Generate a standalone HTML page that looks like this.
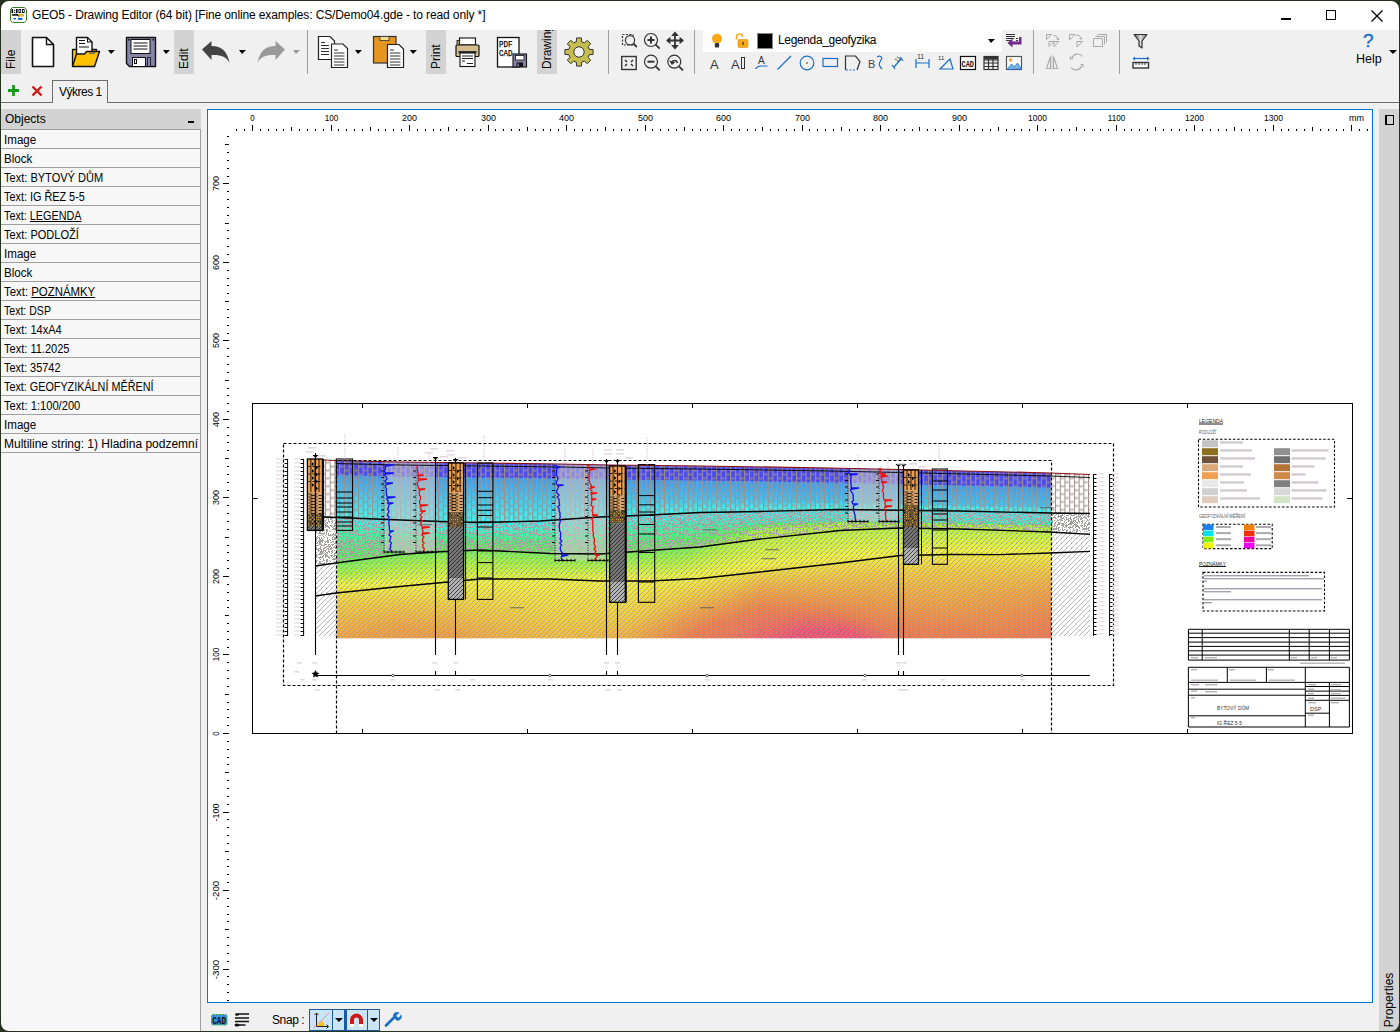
<!DOCTYPE html>
<html><head><meta charset="utf-8">
<style>
*{margin:0;padding:0;box-sizing:border-box}
html,body{width:1400px;height:1032px;overflow:hidden;background:#25321d;font-family:"Liberation Sans",sans-serif;}
.a{position:absolute}
#win{position:absolute;left:0;top:0;width:1400px;height:1032px;background:#f0f0f0;overflow:hidden}
.t{position:absolute;white-space:nowrap;color:#000;font-size:12px}
.vtab{position:absolute;top:30px;width:20px;height:44px;background:#d3d3d3;overflow:hidden}
.vtab span{position:absolute;left:3px;top:39px;transform-origin:0 0;transform:rotate(-90deg);font-size:12px;line-height:14px;white-space:nowrap;color:#000}
.sep{position:absolute;top:30px;width:1px;height:44px;background:#a0a0a0}
.row{position:absolute;left:-1px;width:201px;height:20px;background:#f7f7f7;border-top:1px solid #a0a0a0;border-right:1px solid #a0a0a0;font-size:12px;padding-left:4px;padding-top:2.5px;line-height:14px;white-space:nowrap;overflow:hidden;color:#000}
.row u{text-decoration:underline;text-underline-offset:1px}
svg{position:absolute;overflow:visible}
</style></head><body>
<div id="win">
<div class="a" id="ui" style="left:1px;top:0;width:1400px;height:1032px">
 <div class="a" style="left:-1px;top:0;width:1400px;height:30px;background:#fff"></div>
 <div class="t" style="left:31px;top:8px;letter-spacing:-0.12px">GEO5 - Drawing Editor (64 bit) [Fine online examples: CS/Demo04.gde - to read only *]</div>
 <div class="vtab" style="left:0"><span>File</span></div>
 <div class="vtab" style="left:173px"><span>Edit</span></div>
 <div class="vtab" style="left:425px"><span>Print</span></div>
 <div class="vtab" style="left:536px"><span>Drawing</span></div>
 <div class="sep" style="left:306px"></div>
 <div class="sep" style="left:607px"></div>
 <div class="sep" style="left:693px"></div>
 <div class="sep" style="left:1032px"></div>
 <div class="sep" style="left:1118px"></div>
 <div class="a" style="left:702px;top:30px;width:299px;height:22px;background:#fff"></div>
 <!-- tab strip -->
 <div class="a" style="left:-1px;top:102px;width:1400px;height:1px;background:#6e6e6e"></div>
 <div class="a" style="left:51px;top:80px;width:56px;height:23px;background:#f0f0f0;border:1px solid #6e6e6e;border-bottom:none"></div>
 <div class="t" style="left:58px;top:85px;letter-spacing:-0.5px">Výkres 1</div>
 <!-- left panel -->
 <div class="a" style="left:-1px;top:129px;width:201px;height:903px;background:#f7f7f7;border-right:1px solid #a0a0a0"></div>
 <div class="a" style="left:-1px;top:109px;width:201px;height:20px;background:#d3d3d3"></div>
 <div class="t" style="left:4px;top:112px">Objects</div>
 <div class="a" style="left:187px;top:121px;width:6px;height:2px;background:#000"></div>
 <div class="row" style="top:129px"><span style="display:inline-block;transform-origin:0 0;transform:scaleX(0.967)">Image</span></div>
<div class="row" style="top:148px"><span style="display:inline-block;transform-origin:0 0;transform:scaleX(0.969)">Block</span></div>
<div class="row" style="top:167px"><span style="display:inline-block;transform-origin:0 0;transform:scaleX(0.92)">Text: BYTOVÝ DŮM</span></div>
<div class="row" style="top:186px"><span style="display:inline-block;transform-origin:0 0;transform:scaleX(0.904)">Text: IG ŘEZ 5-5</span></div>
<div class="row" style="top:205px"><span style="display:inline-block;transform-origin:0 0;transform:scaleX(0.9)">Text: <u>LEGENDA</u></span></div>
<div class="row" style="top:224px"><span style="display:inline-block;transform-origin:0 0;transform:scaleX(0.92)">Text: PODLOŽÍ</span></div>
<div class="row" style="top:243px"><span style="display:inline-block;transform-origin:0 0;transform:scaleX(0.967)">Image</span></div>
<div class="row" style="top:262px"><span style="display:inline-block;transform-origin:0 0;transform:scaleX(0.969)">Block</span></div>
<div class="row" style="top:281px"><span style="display:inline-block;transform-origin:0 0;transform:scaleX(0.95)">Text: <u>POZNÁMKY</u></span></div>
<div class="row" style="top:300px"><span style="display:inline-block;transform-origin:0 0;transform:scaleX(0.88)">Text: DSP</span></div>
<div class="row" style="top:319px"><span style="display:inline-block;transform-origin:0 0;transform:scaleX(0.92)">Text: 14xA4</span></div>
<div class="row" style="top:338px"><span style="display:inline-block;transform-origin:0 0;transform:scaleX(0.92)">Text: 11.2025</span></div>
<div class="row" style="top:357px"><span style="display:inline-block;transform-origin:0 0;transform:scaleX(0.91)">Text: 35742</span></div>
<div class="row" style="top:376px"><span style="display:inline-block;transform-origin:0 0;transform:scaleX(0.9)">Text: GEOFYZIKÁLNÍ MĚŘENÍ</span></div>
<div class="row" style="top:395px"><span style="display:inline-block;transform-origin:0 0;transform:scaleX(0.93)">Text: 1:100/200</span></div>
<div class="row" style="top:414px"><span style="display:inline-block;transform-origin:0 0;transform:scaleX(0.967)">Image</span></div>
<div class="row" style="top:433px"><span style="display:inline-block;transform-origin:0 0;transform:scaleX(1.0)">Multiline string: 1) Hladina podzemní</span></div>
<div class="a" style="left:-1px;top:452px;width:201px;height:1px;background:#a0a0a0"></div>
 <!-- drawing area -->
 <div class="a" style="left:206px;top:109px;width:1166px;height:894px;background:#fff;border:1px solid #0078d7"></div>
 </div>
 <svg style="left:0;top:0" width="1400" height="1032" font-family="Liberation Sans" font-size="9.6" fill="#000" shape-rendering="crispEdges"><rect x="236" y="129" width="1" height="2"/>
<rect x="244" y="129" width="1" height="2"/>
<rect x="252" y="125" width="1" height="6"/>
<text x="252.5" y="121" text-anchor="middle" textLength="4.4" lengthAdjust="spacingAndGlyphs">0</text>
<rect x="260" y="129" width="1" height="2"/>
<rect x="268" y="129" width="1" height="2"/>
<rect x="276" y="129" width="1" height="2"/>
<rect x="283" y="129" width="1" height="2"/>
<rect x="291" y="127" width="1" height="4"/>
<rect x="299" y="129" width="1" height="2"/>
<rect x="307" y="129" width="1" height="2"/>
<rect x="315" y="129" width="1" height="2"/>
<rect x="323" y="129" width="1" height="2"/>
<rect x="331" y="125" width="1" height="6"/>
<text x="331.5" y="121" text-anchor="middle" textLength="13.6" lengthAdjust="spacingAndGlyphs">100</text>
<rect x="338" y="129" width="1" height="2"/>
<rect x="346" y="129" width="1" height="2"/>
<rect x="354" y="129" width="1" height="2"/>
<rect x="362" y="129" width="1" height="2"/>
<rect x="370" y="127" width="1" height="4"/>
<rect x="378" y="129" width="1" height="2"/>
<rect x="385" y="129" width="1" height="2"/>
<rect x="393" y="129" width="1" height="2"/>
<rect x="401" y="129" width="1" height="2"/>
<rect x="409" y="125" width="1" height="6"/>
<text x="409.5" y="121" text-anchor="middle" textLength="15.0" lengthAdjust="spacingAndGlyphs">200</text>
<rect x="417" y="129" width="1" height="2"/>
<rect x="425" y="129" width="1" height="2"/>
<rect x="433" y="129" width="1" height="2"/>
<rect x="440" y="129" width="1" height="2"/>
<rect x="448" y="127" width="1" height="4"/>
<rect x="456" y="129" width="1" height="2"/>
<rect x="464" y="129" width="1" height="2"/>
<rect x="472" y="129" width="1" height="2"/>
<rect x="480" y="129" width="1" height="2"/>
<rect x="488" y="125" width="1" height="6"/>
<text x="488.5" y="121" text-anchor="middle" textLength="15.0" lengthAdjust="spacingAndGlyphs">300</text>
<rect x="495" y="129" width="1" height="2"/>
<rect x="503" y="129" width="1" height="2"/>
<rect x="511" y="129" width="1" height="2"/>
<rect x="519" y="129" width="1" height="2"/>
<rect x="527" y="127" width="1" height="4"/>
<rect x="535" y="129" width="1" height="2"/>
<rect x="543" y="129" width="1" height="2"/>
<rect x="550" y="129" width="1" height="2"/>
<rect x="558" y="129" width="1" height="2"/>
<rect x="566" y="125" width="1" height="6"/>
<text x="566.5" y="121" text-anchor="middle" textLength="15.0" lengthAdjust="spacingAndGlyphs">400</text>
<rect x="574" y="129" width="1" height="2"/>
<rect x="582" y="129" width="1" height="2"/>
<rect x="590" y="129" width="1" height="2"/>
<rect x="597" y="129" width="1" height="2"/>
<rect x="605" y="127" width="1" height="4"/>
<rect x="613" y="129" width="1" height="2"/>
<rect x="621" y="129" width="1" height="2"/>
<rect x="629" y="129" width="1" height="2"/>
<rect x="637" y="129" width="1" height="2"/>
<rect x="645" y="125" width="1" height="6"/>
<text x="645.5" y="121" text-anchor="middle" textLength="15.0" lengthAdjust="spacingAndGlyphs">500</text>
<rect x="652" y="129" width="1" height="2"/>
<rect x="660" y="129" width="1" height="2"/>
<rect x="668" y="129" width="1" height="2"/>
<rect x="676" y="129" width="1" height="2"/>
<rect x="684" y="127" width="1" height="4"/>
<rect x="692" y="129" width="1" height="2"/>
<rect x="700" y="129" width="1" height="2"/>
<rect x="707" y="129" width="1" height="2"/>
<rect x="715" y="129" width="1" height="2"/>
<rect x="723" y="125" width="1" height="6"/>
<text x="723.5" y="121" text-anchor="middle" textLength="15.0" lengthAdjust="spacingAndGlyphs">600</text>
<rect x="731" y="129" width="1" height="2"/>
<rect x="739" y="129" width="1" height="2"/>
<rect x="747" y="129" width="1" height="2"/>
<rect x="755" y="129" width="1" height="2"/>
<rect x="762" y="127" width="1" height="4"/>
<rect x="770" y="129" width="1" height="2"/>
<rect x="778" y="129" width="1" height="2"/>
<rect x="786" y="129" width="1" height="2"/>
<rect x="794" y="129" width="1" height="2"/>
<rect x="802" y="125" width="1" height="6"/>
<text x="802.5" y="121" text-anchor="middle" textLength="15.0" lengthAdjust="spacingAndGlyphs">700</text>
<rect x="809" y="129" width="1" height="2"/>
<rect x="817" y="129" width="1" height="2"/>
<rect x="825" y="129" width="1" height="2"/>
<rect x="833" y="129" width="1" height="2"/>
<rect x="841" y="127" width="1" height="4"/>
<rect x="849" y="129" width="1" height="2"/>
<rect x="857" y="129" width="1" height="2"/>
<rect x="864" y="129" width="1" height="2"/>
<rect x="872" y="129" width="1" height="2"/>
<rect x="880" y="125" width="1" height="6"/>
<text x="880.5" y="121" text-anchor="middle" textLength="15.0" lengthAdjust="spacingAndGlyphs">800</text>
<rect x="888" y="129" width="1" height="2"/>
<rect x="896" y="129" width="1" height="2"/>
<rect x="904" y="129" width="1" height="2"/>
<rect x="912" y="129" width="1" height="2"/>
<rect x="919" y="127" width="1" height="4"/>
<rect x="927" y="129" width="1" height="2"/>
<rect x="935" y="129" width="1" height="2"/>
<rect x="943" y="129" width="1" height="2"/>
<rect x="951" y="129" width="1" height="2"/>
<rect x="959" y="125" width="1" height="6"/>
<text x="959.5" y="121" text-anchor="middle" textLength="15.0" lengthAdjust="spacingAndGlyphs">900</text>
<rect x="967" y="129" width="1" height="2"/>
<rect x="974" y="129" width="1" height="2"/>
<rect x="982" y="129" width="1" height="2"/>
<rect x="990" y="129" width="1" height="2"/>
<rect x="998" y="127" width="1" height="4"/>
<rect x="1006" y="129" width="1" height="2"/>
<rect x="1014" y="129" width="1" height="2"/>
<rect x="1021" y="129" width="1" height="2"/>
<rect x="1029" y="129" width="1" height="2"/>
<rect x="1037" y="125" width="1" height="6"/>
<text x="1037.5" y="121" text-anchor="middle" textLength="18.9" lengthAdjust="spacingAndGlyphs">1000</text>
<rect x="1045" y="129" width="1" height="2"/>
<rect x="1053" y="129" width="1" height="2"/>
<rect x="1061" y="129" width="1" height="2"/>
<rect x="1069" y="129" width="1" height="2"/>
<rect x="1076" y="127" width="1" height="4"/>
<rect x="1084" y="129" width="1" height="2"/>
<rect x="1092" y="129" width="1" height="2"/>
<rect x="1100" y="129" width="1" height="2"/>
<rect x="1108" y="129" width="1" height="2"/>
<rect x="1116" y="125" width="1" height="6"/>
<text x="1116.5" y="121" text-anchor="middle" textLength="17.5" lengthAdjust="spacingAndGlyphs">1100</text>
<rect x="1124" y="129" width="1" height="2"/>
<rect x="1131" y="129" width="1" height="2"/>
<rect x="1139" y="129" width="1" height="2"/>
<rect x="1147" y="129" width="1" height="2"/>
<rect x="1155" y="127" width="1" height="4"/>
<rect x="1163" y="129" width="1" height="2"/>
<rect x="1171" y="129" width="1" height="2"/>
<rect x="1179" y="129" width="1" height="2"/>
<rect x="1186" y="129" width="1" height="2"/>
<rect x="1194" y="125" width="1" height="6"/>
<text x="1194.5" y="121" text-anchor="middle" textLength="18.9" lengthAdjust="spacingAndGlyphs">1200</text>
<rect x="1202" y="129" width="1" height="2"/>
<rect x="1210" y="129" width="1" height="2"/>
<rect x="1218" y="129" width="1" height="2"/>
<rect x="1226" y="129" width="1" height="2"/>
<rect x="1234" y="127" width="1" height="4"/>
<rect x="1241" y="129" width="1" height="2"/>
<rect x="1249" y="129" width="1" height="2"/>
<rect x="1257" y="129" width="1" height="2"/>
<rect x="1265" y="129" width="1" height="2"/>
<rect x="1273" y="125" width="1" height="6"/>
<text x="1273.5" y="121" text-anchor="middle" textLength="18.9" lengthAdjust="spacingAndGlyphs">1300</text>
<rect x="1281" y="129" width="1" height="2"/>
<rect x="1288" y="129" width="1" height="2"/>
<rect x="1296" y="129" width="1" height="2"/>
<rect x="1304" y="129" width="1" height="2"/>
<rect x="1312" y="127" width="1" height="4"/>
<rect x="1320" y="129" width="1" height="2"/>
<rect x="1328" y="129" width="1" height="2"/>
<rect x="1336" y="129" width="1" height="2"/>
<rect x="1343" y="129" width="1" height="2"/>
<rect x="1351" y="125" width="1" height="6"/>
<rect x="1359" y="129" width="1" height="2"/>
<rect x="1367" y="129" width="1" height="2"/>
<text x="1349" y="121" textLength="15" lengthAdjust="spacingAndGlyphs">mm</text>
<rect x="227" y="1000" width="2" height="1"/>
<rect x="227" y="992" width="2" height="1"/>
<rect x="227" y="984" width="2" height="1"/>
<rect x="227" y="976" width="2" height="1"/>
<rect x="223" y="969" width="6" height="1"/>
<text transform="translate(218.5,969.5) rotate(-90)" text-anchor="middle" textLength="19.5" lengthAdjust="spacingAndGlyphs">-300</text>
<rect x="227" y="961" width="2" height="1"/>
<rect x="227" y="953" width="2" height="1"/>
<rect x="227" y="945" width="2" height="1"/>
<rect x="227" y="937" width="2" height="1"/>
<rect x="225" y="929" width="4" height="1"/>
<rect x="227" y="921" width="2" height="1"/>
<rect x="227" y="914" width="2" height="1"/>
<rect x="227" y="906" width="2" height="1"/>
<rect x="227" y="898" width="2" height="1"/>
<rect x="223" y="890" width="6" height="1"/>
<text transform="translate(218.5,890.5) rotate(-90)" text-anchor="middle" textLength="19.5" lengthAdjust="spacingAndGlyphs">-200</text>
<rect x="227" y="882" width="2" height="1"/>
<rect x="227" y="874" width="2" height="1"/>
<rect x="227" y="866" width="2" height="1"/>
<rect x="227" y="859" width="2" height="1"/>
<rect x="225" y="851" width="4" height="1"/>
<rect x="227" y="843" width="2" height="1"/>
<rect x="227" y="835" width="2" height="1"/>
<rect x="227" y="827" width="2" height="1"/>
<rect x="227" y="819" width="2" height="1"/>
<rect x="223" y="812" width="6" height="1"/>
<text transform="translate(218.5,812.5) rotate(-90)" text-anchor="middle" textLength="18.1" lengthAdjust="spacingAndGlyphs">-100</text>
<rect x="227" y="804" width="2" height="1"/>
<rect x="227" y="796" width="2" height="1"/>
<rect x="227" y="788" width="2" height="1"/>
<rect x="227" y="780" width="2" height="1"/>
<rect x="225" y="772" width="4" height="1"/>
<rect x="227" y="764" width="2" height="1"/>
<rect x="227" y="757" width="2" height="1"/>
<rect x="227" y="749" width="2" height="1"/>
<rect x="227" y="741" width="2" height="1"/>
<rect x="223" y="733" width="6" height="1"/>
<text transform="translate(218.5,733.5) rotate(-90)" text-anchor="middle" textLength="4.4" lengthAdjust="spacingAndGlyphs">0</text>
<rect x="227" y="725" width="2" height="1"/>
<rect x="227" y="717" width="2" height="1"/>
<rect x="227" y="709" width="2" height="1"/>
<rect x="227" y="702" width="2" height="1"/>
<rect x="225" y="694" width="4" height="1"/>
<rect x="227" y="686" width="2" height="1"/>
<rect x="227" y="678" width="2" height="1"/>
<rect x="227" y="670" width="2" height="1"/>
<rect x="227" y="662" width="2" height="1"/>
<rect x="223" y="654" width="6" height="1"/>
<text transform="translate(218.5,654.5) rotate(-90)" text-anchor="middle" textLength="13.6" lengthAdjust="spacingAndGlyphs">100</text>
<rect x="227" y="647" width="2" height="1"/>
<rect x="227" y="639" width="2" height="1"/>
<rect x="227" y="631" width="2" height="1"/>
<rect x="227" y="623" width="2" height="1"/>
<rect x="225" y="615" width="4" height="1"/>
<rect x="227" y="607" width="2" height="1"/>
<rect x="227" y="600" width="2" height="1"/>
<rect x="227" y="592" width="2" height="1"/>
<rect x="227" y="584" width="2" height="1"/>
<rect x="223" y="576" width="6" height="1"/>
<text transform="translate(218.5,576.5) rotate(-90)" text-anchor="middle" textLength="15.0" lengthAdjust="spacingAndGlyphs">200</text>
<rect x="227" y="568" width="2" height="1"/>
<rect x="227" y="560" width="2" height="1"/>
<rect x="227" y="552" width="2" height="1"/>
<rect x="227" y="545" width="2" height="1"/>
<rect x="225" y="537" width="4" height="1"/>
<rect x="227" y="529" width="2" height="1"/>
<rect x="227" y="521" width="2" height="1"/>
<rect x="227" y="513" width="2" height="1"/>
<rect x="227" y="505" width="2" height="1"/>
<rect x="223" y="497" width="6" height="1"/>
<text transform="translate(218.5,497.5) rotate(-90)" text-anchor="middle" textLength="15.0" lengthAdjust="spacingAndGlyphs">300</text>
<rect x="227" y="490" width="2" height="1"/>
<rect x="227" y="482" width="2" height="1"/>
<rect x="227" y="474" width="2" height="1"/>
<rect x="227" y="466" width="2" height="1"/>
<rect x="225" y="458" width="4" height="1"/>
<rect x="227" y="450" width="2" height="1"/>
<rect x="227" y="442" width="2" height="1"/>
<rect x="227" y="435" width="2" height="1"/>
<rect x="227" y="427" width="2" height="1"/>
<rect x="223" y="419" width="6" height="1"/>
<text transform="translate(218.5,419.5) rotate(-90)" text-anchor="middle" textLength="15.0" lengthAdjust="spacingAndGlyphs">400</text>
<rect x="227" y="411" width="2" height="1"/>
<rect x="227" y="403" width="2" height="1"/>
<rect x="227" y="395" width="2" height="1"/>
<rect x="227" y="388" width="2" height="1"/>
<rect x="225" y="380" width="4" height="1"/>
<rect x="227" y="372" width="2" height="1"/>
<rect x="227" y="364" width="2" height="1"/>
<rect x="227" y="356" width="2" height="1"/>
<rect x="227" y="348" width="2" height="1"/>
<rect x="223" y="340" width="6" height="1"/>
<text transform="translate(218.5,340.5) rotate(-90)" text-anchor="middle" textLength="15.0" lengthAdjust="spacingAndGlyphs">500</text>
<rect x="227" y="333" width="2" height="1"/>
<rect x="227" y="325" width="2" height="1"/>
<rect x="227" y="317" width="2" height="1"/>
<rect x="227" y="309" width="2" height="1"/>
<rect x="225" y="301" width="4" height="1"/>
<rect x="227" y="293" width="2" height="1"/>
<rect x="227" y="285" width="2" height="1"/>
<rect x="227" y="278" width="2" height="1"/>
<rect x="227" y="270" width="2" height="1"/>
<rect x="223" y="262" width="6" height="1"/>
<text transform="translate(218.5,262.5) rotate(-90)" text-anchor="middle" textLength="15.0" lengthAdjust="spacingAndGlyphs">600</text>
<rect x="227" y="254" width="2" height="1"/>
<rect x="227" y="246" width="2" height="1"/>
<rect x="227" y="238" width="2" height="1"/>
<rect x="227" y="230" width="2" height="1"/>
<rect x="225" y="223" width="4" height="1"/>
<rect x="227" y="215" width="2" height="1"/>
<rect x="227" y="207" width="2" height="1"/>
<rect x="227" y="199" width="2" height="1"/>
<rect x="227" y="191" width="2" height="1"/>
<rect x="223" y="183" width="6" height="1"/>
<text transform="translate(218.5,183.5) rotate(-90)" text-anchor="middle" textLength="15.0" lengthAdjust="spacingAndGlyphs">700</text>
<rect x="227" y="176" width="2" height="1"/>
<rect x="227" y="168" width="2" height="1"/>
<rect x="227" y="160" width="2" height="1"/>
<rect x="227" y="152" width="2" height="1"/>
<rect x="225" y="144" width="4" height="1"/>
<rect x="227" y="136" width="2" height="1"/></svg>
 <svg style="left:0;top:0" width="1400" height="1032" viewBox="0 0 1400 1032">
<defs>
<clipPath id="dclip"><rect x="208" y="110" width="1164" height="892"/></clipPath>
<linearGradient id="geo" x1="0" y1="461" x2="0" y2="639" gradientUnits="userSpaceOnUse">
<stop offset="0" stop-color="#4848f4"/>
<stop offset="0.06" stop-color="#4a60f2"/>
<stop offset="0.15" stop-color="#40a8f0"/>
<stop offset="0.27" stop-color="#40e8f0"/>
<stop offset="0.33" stop-color="#40f0c0"/>
<stop offset="0.45" stop-color="#50f070"/>
<stop offset="0.55" stop-color="#a8f040"/>
<stop offset="0.63" stop-color="#f0f040"/>
<stop offset="0.72" stop-color="#f0c840"/>
<stop offset="0.82" stop-color="#f0a840"/>
<stop offset="0.92" stop-color="#f09048"/>
<stop offset="1" stop-color="#f07858"/>
</linearGradient>
<radialGradient id="red" cx="800" cy="650" r="110" gradientTransform="translate(800 650) scale(1.3 0.5) translate(-800 -650)" gradientUnits="userSpaceOnUse">
<stop offset="0" stop-color="#f03880" stop-opacity="1"/><stop offset="0.35" stop-color="#f05068" stop-opacity="0.9"/><stop offset="1" stop-color="#f07050" stop-opacity="0"/></radialGradient>
<radialGradient id="oy" cx="420" cy="620" r="90" gradientTransform="translate(420 620) scale(1.2 0.6) translate(-420 -620)" gradientUnits="userSpaceOnUse">
<stop offset="0" stop-color="#f0a040" stop-opacity="0.9"/><stop offset="1" stop-color="#f0a040" stop-opacity="0"/></radialGradient>
<radialGradient id="yl" cx="780" cy="565" r="80" gradientTransform="translate(780 565) scale(1.6 0.5) translate(-780 -565)" gradientUnits="userSpaceOnUse">
<stop offset="0" stop-color="#f0f040" stop-opacity="0.8"/><stop offset="1" stop-color="#f0f040" stop-opacity="0"/></radialGradient>
<pattern id="brick" width="9.42" height="7.85" patternUnits="userSpaceOnUse" x="0" y="1"><rect x="0" y="0" width="1.05" height="7.85" fill="#a09088"/><rect x="4.71" y="0" width="1.05" height="7.85" fill="#a09088"/><path d="M1.6 1.4v1.5h2.2v-1.5M6.3 5.3v1.5h2.2v-1.5" stroke="#a09088" stroke-width="0.9" fill="none"/></pattern>
<pattern id="noise" width="30" height="30" patternUnits="userSpaceOnUse"><g fill="#a4a0a0"><rect x="0" y="0" width="1" height="1"/><rect x="0" y="2" width="1" height="1"/><rect x="0" y="5" width="1" height="1"/><rect x="0" y="6" width="1" height="1"/><rect x="0" y="8" width="1" height="1"/><rect x="0" y="9" width="1" height="1"/><rect x="0" y="15" width="1" height="1"/><rect x="0" y="21" width="1" height="1"/><rect x="0" y="24" width="1" height="1"/><rect x="0" y="25" width="1" height="1"/><rect x="1" y="2" width="1" height="1"/><rect x="1" y="4" width="1" height="1"/><rect x="1" y="7" width="1" height="1"/><rect x="1" y="8" width="1" height="1"/><rect x="1" y="9" width="1" height="1"/><rect x="1" y="11" width="1" height="1"/><rect x="1" y="13" width="1" height="1"/><rect x="1" y="15" width="1" height="1"/><rect x="1" y="16" width="1" height="1"/><rect x="1" y="25" width="1" height="1"/><rect x="2" y="1" width="1" height="1"/><rect x="2" y="4" width="1" height="1"/><rect x="2" y="5" width="1" height="1"/><rect x="2" y="8" width="1" height="1"/><rect x="2" y="10" width="1" height="1"/><rect x="2" y="11" width="1" height="1"/><rect x="2" y="12" width="1" height="1"/><rect x="2" y="15" width="1" height="1"/><rect x="2" y="17" width="1" height="1"/><rect x="2" y="19" width="1" height="1"/><rect x="2" y="24" width="1" height="1"/><rect x="2" y="25" width="1" height="1"/><rect x="2" y="27" width="1" height="1"/><rect x="2" y="28" width="1" height="1"/><rect x="2" y="29" width="1" height="1"/><rect x="3" y="1" width="1" height="1"/><rect x="3" y="2" width="1" height="1"/><rect x="3" y="4" width="1" height="1"/><rect x="3" y="7" width="1" height="1"/><rect x="3" y="16" width="1" height="1"/><rect x="3" y="18" width="1" height="1"/><rect x="3" y="19" width="1" height="1"/><rect x="3" y="23" width="1" height="1"/><rect x="3" y="24" width="1" height="1"/><rect x="3" y="26" width="1" height="1"/><rect x="3" y="29" width="1" height="1"/><rect x="4" y="3" width="1" height="1"/><rect x="4" y="6" width="1" height="1"/><rect x="4" y="7" width="1" height="1"/><rect x="4" y="10" width="1" height="1"/><rect x="4" y="13" width="1" height="1"/><rect x="4" y="14" width="1" height="1"/><rect x="4" y="15" width="1" height="1"/><rect x="4" y="16" width="1" height="1"/><rect x="4" y="18" width="1" height="1"/><rect x="4" y="19" width="1" height="1"/><rect x="4" y="21" width="1" height="1"/><rect x="4" y="24" width="1" height="1"/><rect x="4" y="25" width="1" height="1"/><rect x="4" y="27" width="1" height="1"/><rect x="4" y="28" width="1" height="1"/><rect x="4" y="29" width="1" height="1"/><rect x="5" y="1" width="1" height="1"/><rect x="5" y="2" width="1" height="1"/><rect x="5" y="3" width="1" height="1"/><rect x="5" y="5" width="1" height="1"/><rect x="5" y="7" width="1" height="1"/><rect x="5" y="8" width="1" height="1"/><rect x="5" y="12" width="1" height="1"/><rect x="5" y="13" width="1" height="1"/><rect x="5" y="15" width="1" height="1"/><rect x="5" y="18" width="1" height="1"/><rect x="5" y="19" width="1" height="1"/><rect x="5" y="23" width="1" height="1"/><rect x="5" y="24" width="1" height="1"/><rect x="5" y="25" width="1" height="1"/><rect x="5" y="27" width="1" height="1"/><rect x="5" y="28" width="1" height="1"/><rect x="5" y="29" width="1" height="1"/><rect x="6" y="0" width="1" height="1"/><rect x="6" y="1" width="1" height="1"/><rect x="6" y="3" width="1" height="1"/><rect x="6" y="4" width="1" height="1"/><rect x="6" y="8" width="1" height="1"/><rect x="6" y="11" width="1" height="1"/><rect x="6" y="16" width="1" height="1"/><rect x="6" y="17" width="1" height="1"/><rect x="6" y="18" width="1" height="1"/><rect x="6" y="19" width="1" height="1"/><rect x="6" y="21" width="1" height="1"/><rect x="6" y="23" width="1" height="1"/><rect x="7" y="0" width="1" height="1"/><rect x="7" y="2" width="1" height="1"/><rect x="7" y="3" width="1" height="1"/><rect x="7" y="6" width="1" height="1"/><rect x="7" y="9" width="1" height="1"/><rect x="7" y="10" width="1" height="1"/><rect x="7" y="14" width="1" height="1"/><rect x="7" y="15" width="1" height="1"/><rect x="7" y="18" width="1" height="1"/><rect x="7" y="23" width="1" height="1"/><rect x="7" y="26" width="1" height="1"/><rect x="7" y="27" width="1" height="1"/><rect x="7" y="28" width="1" height="1"/><rect x="8" y="0" width="1" height="1"/><rect x="8" y="3" width="1" height="1"/><rect x="8" y="4" width="1" height="1"/><rect x="8" y="5" width="1" height="1"/><rect x="8" y="6" width="1" height="1"/><rect x="8" y="7" width="1" height="1"/><rect x="8" y="10" width="1" height="1"/><rect x="8" y="12" width="1" height="1"/><rect x="8" y="13" width="1" height="1"/><rect x="8" y="14" width="1" height="1"/><rect x="8" y="17" width="1" height="1"/><rect x="8" y="18" width="1" height="1"/><rect x="8" y="19" width="1" height="1"/><rect x="8" y="20" width="1" height="1"/><rect x="8" y="23" width="1" height="1"/><rect x="8" y="24" width="1" height="1"/><rect x="8" y="25" width="1" height="1"/><rect x="8" y="26" width="1" height="1"/><rect x="8" y="29" width="1" height="1"/><rect x="9" y="2" width="1" height="1"/><rect x="9" y="3" width="1" height="1"/><rect x="9" y="6" width="1" height="1"/><rect x="9" y="9" width="1" height="1"/><rect x="9" y="12" width="1" height="1"/><rect x="9" y="13" width="1" height="1"/><rect x="9" y="14" width="1" height="1"/><rect x="9" y="17" width="1" height="1"/><rect x="9" y="20" width="1" height="1"/><rect x="9" y="22" width="1" height="1"/><rect x="10" y="0" width="1" height="1"/><rect x="10" y="2" width="1" height="1"/><rect x="10" y="3" width="1" height="1"/><rect x="10" y="5" width="1" height="1"/><rect x="10" y="6" width="1" height="1"/><rect x="10" y="7" width="1" height="1"/><rect x="10" y="9" width="1" height="1"/><rect x="10" y="10" width="1" height="1"/><rect x="10" y="12" width="1" height="1"/><rect x="10" y="19" width="1" height="1"/><rect x="10" y="23" width="1" height="1"/><rect x="10" y="26" width="1" height="1"/><rect x="10" y="27" width="1" height="1"/><rect x="11" y="0" width="1" height="1"/><rect x="11" y="1" width="1" height="1"/><rect x="11" y="2" width="1" height="1"/><rect x="11" y="5" width="1" height="1"/><rect x="11" y="6" width="1" height="1"/><rect x="11" y="7" width="1" height="1"/><rect x="11" y="8" width="1" height="1"/><rect x="11" y="9" width="1" height="1"/><rect x="11" y="10" width="1" height="1"/><rect x="11" y="13" width="1" height="1"/><rect x="11" y="15" width="1" height="1"/><rect x="11" y="23" width="1" height="1"/><rect x="11" y="24" width="1" height="1"/><rect x="11" y="28" width="1" height="1"/><rect x="12" y="0" width="1" height="1"/><rect x="12" y="1" width="1" height="1"/><rect x="12" y="2" width="1" height="1"/><rect x="12" y="4" width="1" height="1"/><rect x="12" y="5" width="1" height="1"/><rect x="12" y="8" width="1" height="1"/><rect x="12" y="10" width="1" height="1"/><rect x="12" y="13" width="1" height="1"/><rect x="12" y="14" width="1" height="1"/><rect x="12" y="15" width="1" height="1"/><rect x="12" y="17" width="1" height="1"/><rect x="12" y="18" width="1" height="1"/><rect x="12" y="19" width="1" height="1"/><rect x="12" y="20" width="1" height="1"/><rect x="12" y="22" width="1" height="1"/><rect x="13" y="3" width="1" height="1"/><rect x="13" y="7" width="1" height="1"/><rect x="13" y="8" width="1" height="1"/><rect x="13" y="13" width="1" height="1"/><rect x="13" y="14" width="1" height="1"/><rect x="13" y="15" width="1" height="1"/><rect x="13" y="16" width="1" height="1"/><rect x="13" y="20" width="1" height="1"/><rect x="13" y="22" width="1" height="1"/><rect x="13" y="23" width="1" height="1"/><rect x="13" y="25" width="1" height="1"/><rect x="13" y="26" width="1" height="1"/><rect x="13" y="28" width="1" height="1"/><rect x="13" y="29" width="1" height="1"/><rect x="14" y="2" width="1" height="1"/><rect x="14" y="3" width="1" height="1"/><rect x="14" y="4" width="1" height="1"/><rect x="14" y="6" width="1" height="1"/><rect x="14" y="9" width="1" height="1"/><rect x="14" y="11" width="1" height="1"/><rect x="14" y="12" width="1" height="1"/><rect x="14" y="14" width="1" height="1"/><rect x="14" y="17" width="1" height="1"/><rect x="14" y="19" width="1" height="1"/><rect x="14" y="22" width="1" height="1"/><rect x="14" y="26" width="1" height="1"/><rect x="15" y="1" width="1" height="1"/><rect x="15" y="3" width="1" height="1"/><rect x="15" y="7" width="1" height="1"/><rect x="15" y="10" width="1" height="1"/><rect x="15" y="13" width="1" height="1"/><rect x="15" y="15" width="1" height="1"/><rect x="15" y="16" width="1" height="1"/><rect x="15" y="22" width="1" height="1"/><rect x="15" y="23" width="1" height="1"/><rect x="15" y="24" width="1" height="1"/><rect x="15" y="29" width="1" height="1"/><rect x="16" y="0" width="1" height="1"/><rect x="16" y="1" width="1" height="1"/><rect x="16" y="3" width="1" height="1"/><rect x="16" y="5" width="1" height="1"/><rect x="16" y="7" width="1" height="1"/><rect x="16" y="8" width="1" height="1"/><rect x="16" y="9" width="1" height="1"/><rect x="16" y="12" width="1" height="1"/><rect x="16" y="14" width="1" height="1"/><rect x="16" y="15" width="1" height="1"/><rect x="16" y="16" width="1" height="1"/><rect x="16" y="17" width="1" height="1"/><rect x="16" y="20" width="1" height="1"/><rect x="16" y="21" width="1" height="1"/><rect x="16" y="22" width="1" height="1"/><rect x="16" y="27" width="1" height="1"/><rect x="16" y="28" width="1" height="1"/><rect x="16" y="29" width="1" height="1"/><rect x="17" y="2" width="1" height="1"/><rect x="17" y="3" width="1" height="1"/><rect x="17" y="5" width="1" height="1"/><rect x="17" y="9" width="1" height="1"/><rect x="17" y="15" width="1" height="1"/><rect x="17" y="20" width="1" height="1"/><rect x="17" y="26" width="1" height="1"/><rect x="17" y="28" width="1" height="1"/><rect x="18" y="1" width="1" height="1"/><rect x="18" y="5" width="1" height="1"/><rect x="18" y="8" width="1" height="1"/><rect x="18" y="9" width="1" height="1"/><rect x="18" y="10" width="1" height="1"/><rect x="18" y="11" width="1" height="1"/><rect x="18" y="14" width="1" height="1"/><rect x="18" y="17" width="1" height="1"/><rect x="18" y="23" width="1" height="1"/><rect x="18" y="27" width="1" height="1"/><rect x="19" y="0" width="1" height="1"/><rect x="19" y="1" width="1" height="1"/><rect x="19" y="2" width="1" height="1"/><rect x="19" y="3" width="1" height="1"/><rect x="19" y="4" width="1" height="1"/><rect x="19" y="8" width="1" height="1"/><rect x="19" y="10" width="1" height="1"/><rect x="19" y="13" width="1" height="1"/><rect x="19" y="14" width="1" height="1"/><rect x="19" y="17" width="1" height="1"/><rect x="19" y="18" width="1" height="1"/><rect x="19" y="21" width="1" height="1"/><rect x="19" y="22" width="1" height="1"/><rect x="19" y="23" width="1" height="1"/><rect x="19" y="25" width="1" height="1"/><rect x="19" y="27" width="1" height="1"/><rect x="19" y="28" width="1" height="1"/><rect x="19" y="29" width="1" height="1"/><rect x="20" y="0" width="1" height="1"/><rect x="20" y="1" width="1" height="1"/><rect x="20" y="2" width="1" height="1"/><rect x="20" y="3" width="1" height="1"/><rect x="20" y="4" width="1" height="1"/><rect x="20" y="6" width="1" height="1"/><rect x="20" y="7" width="1" height="1"/><rect x="20" y="8" width="1" height="1"/><rect x="20" y="9" width="1" height="1"/><rect x="20" y="11" width="1" height="1"/><rect x="20" y="12" width="1" height="1"/><rect x="20" y="13" width="1" height="1"/><rect x="20" y="14" width="1" height="1"/><rect x="20" y="16" width="1" height="1"/><rect x="20" y="17" width="1" height="1"/><rect x="20" y="19" width="1" height="1"/><rect x="20" y="21" width="1" height="1"/><rect x="20" y="22" width="1" height="1"/><rect x="20" y="23" width="1" height="1"/><rect x="20" y="25" width="1" height="1"/><rect x="20" y="29" width="1" height="1"/><rect x="21" y="0" width="1" height="1"/><rect x="21" y="1" width="1" height="1"/><rect x="21" y="4" width="1" height="1"/><rect x="21" y="5" width="1" height="1"/><rect x="21" y="9" width="1" height="1"/><rect x="21" y="10" width="1" height="1"/><rect x="21" y="11" width="1" height="1"/><rect x="21" y="12" width="1" height="1"/><rect x="21" y="13" width="1" height="1"/><rect x="21" y="14" width="1" height="1"/><rect x="21" y="17" width="1" height="1"/><rect x="21" y="23" width="1" height="1"/><rect x="21" y="24" width="1" height="1"/><rect x="21" y="27" width="1" height="1"/><rect x="21" y="28" width="1" height="1"/><rect x="22" y="0" width="1" height="1"/><rect x="22" y="1" width="1" height="1"/><rect x="22" y="2" width="1" height="1"/><rect x="22" y="5" width="1" height="1"/><rect x="22" y="11" width="1" height="1"/><rect x="22" y="12" width="1" height="1"/><rect x="22" y="13" width="1" height="1"/><rect x="22" y="16" width="1" height="1"/><rect x="22" y="17" width="1" height="1"/><rect x="22" y="21" width="1" height="1"/><rect x="22" y="23" width="1" height="1"/><rect x="22" y="25" width="1" height="1"/><rect x="22" y="29" width="1" height="1"/><rect x="23" y="0" width="1" height="1"/><rect x="23" y="5" width="1" height="1"/><rect x="23" y="8" width="1" height="1"/><rect x="23" y="9" width="1" height="1"/><rect x="23" y="10" width="1" height="1"/><rect x="23" y="11" width="1" height="1"/><rect x="23" y="13" width="1" height="1"/><rect x="23" y="15" width="1" height="1"/><rect x="23" y="16" width="1" height="1"/><rect x="23" y="18" width="1" height="1"/><rect x="23" y="19" width="1" height="1"/><rect x="23" y="20" width="1" height="1"/><rect x="23" y="23" width="1" height="1"/><rect x="23" y="24" width="1" height="1"/><rect x="23" y="26" width="1" height="1"/><rect x="23" y="28" width="1" height="1"/><rect x="24" y="3" width="1" height="1"/><rect x="24" y="4" width="1" height="1"/><rect x="24" y="5" width="1" height="1"/><rect x="24" y="7" width="1" height="1"/><rect x="24" y="8" width="1" height="1"/><rect x="24" y="10" width="1" height="1"/><rect x="24" y="12" width="1" height="1"/><rect x="24" y="14" width="1" height="1"/><rect x="24" y="20" width="1" height="1"/><rect x="24" y="22" width="1" height="1"/><rect x="24" y="23" width="1" height="1"/><rect x="24" y="27" width="1" height="1"/><rect x="25" y="1" width="1" height="1"/><rect x="25" y="2" width="1" height="1"/><rect x="25" y="4" width="1" height="1"/><rect x="25" y="7" width="1" height="1"/><rect x="25" y="10" width="1" height="1"/><rect x="25" y="11" width="1" height="1"/><rect x="25" y="13" width="1" height="1"/><rect x="25" y="14" width="1" height="1"/><rect x="25" y="15" width="1" height="1"/><rect x="25" y="16" width="1" height="1"/><rect x="25" y="17" width="1" height="1"/><rect x="25" y="25" width="1" height="1"/><rect x="26" y="1" width="1" height="1"/><rect x="26" y="4" width="1" height="1"/><rect x="26" y="6" width="1" height="1"/><rect x="26" y="7" width="1" height="1"/><rect x="26" y="9" width="1" height="1"/><rect x="26" y="12" width="1" height="1"/><rect x="26" y="14" width="1" height="1"/><rect x="26" y="15" width="1" height="1"/><rect x="26" y="16" width="1" height="1"/><rect x="26" y="19" width="1" height="1"/><rect x="26" y="20" width="1" height="1"/><rect x="26" y="21" width="1" height="1"/><rect x="26" y="22" width="1" height="1"/><rect x="26" y="23" width="1" height="1"/><rect x="26" y="24" width="1" height="1"/><rect x="27" y="0" width="1" height="1"/><rect x="27" y="1" width="1" height="1"/><rect x="27" y="2" width="1" height="1"/><rect x="27" y="6" width="1" height="1"/><rect x="27" y="8" width="1" height="1"/><rect x="27" y="12" width="1" height="1"/><rect x="27" y="13" width="1" height="1"/><rect x="27" y="15" width="1" height="1"/><rect x="27" y="16" width="1" height="1"/><rect x="27" y="19" width="1" height="1"/><rect x="27" y="20" width="1" height="1"/><rect x="27" y="21" width="1" height="1"/><rect x="27" y="27" width="1" height="1"/><rect x="27" y="28" width="1" height="1"/><rect x="27" y="29" width="1" height="1"/><rect x="28" y="0" width="1" height="1"/><rect x="28" y="1" width="1" height="1"/><rect x="28" y="2" width="1" height="1"/><rect x="28" y="4" width="1" height="1"/><rect x="28" y="5" width="1" height="1"/><rect x="28" y="6" width="1" height="1"/><rect x="28" y="8" width="1" height="1"/><rect x="28" y="9" width="1" height="1"/><rect x="28" y="10" width="1" height="1"/><rect x="28" y="11" width="1" height="1"/><rect x="28" y="16" width="1" height="1"/><rect x="28" y="17" width="1" height="1"/><rect x="28" y="23" width="1" height="1"/><rect x="28" y="24" width="1" height="1"/><rect x="28" y="25" width="1" height="1"/><rect x="29" y="4" width="1" height="1"/><rect x="29" y="6" width="1" height="1"/><rect x="29" y="7" width="1" height="1"/><rect x="29" y="11" width="1" height="1"/><rect x="29" y="12" width="1" height="1"/><rect x="29" y="17" width="1" height="1"/><rect x="29" y="18" width="1" height="1"/><rect x="29" y="20" width="1" height="1"/><rect x="29" y="25" width="1" height="1"/><rect x="29" y="29" width="1" height="1"/></g></pattern>
<pattern id="hatch" width="5" height="5" patternUnits="userSpaceOnUse"><path d="M-1.25 6.25l7.5-7.5M-1.25 1.25l2.5-2.5M3.75 6.25l2.5-2.5" stroke="#9c9c9c" stroke-width="0.75"/></pattern>
<pattern id="hatchd" width="5" height="5" patternUnits="userSpaceOnUse"><path d="M-1.25 6.25l7.5-7.5M-1.25 1.25l2.5-2.5M3.75 6.25l2.5-2.5" stroke="#a4a4a4" stroke-width="0.75"/><path d="M1 3.5l1 -0.6" stroke="#707070" stroke-width="0.7"/></pattern>
<pattern id="bhatch" width="4" height="4" patternUnits="userSpaceOnUse"><path d="M-1 5l6-6M-1 1l2-2M3 5l2-2" stroke="#111" stroke-width="0.7"/></pattern>
</defs>
<g clip-path="url(#dclip)">
<rect x="252.5" y="403.5" width="1100" height="330" fill="none" stroke="#000" stroke-width="1"/>
<path d="M362.5 403.5v4.5M362.5 733.5v-4.5" stroke="#000" stroke-width="1"/>
<path d="M527.5 403.5v4.5M527.5 733.5v-4.5" stroke="#000" stroke-width="1"/>
<path d="M692.5 403.5v4.5M692.5 733.5v-4.5" stroke="#000" stroke-width="1"/>
<path d="M857.5 403.5v4.5M857.5 733.5v-4.5" stroke="#000" stroke-width="1"/>
<path d="M1022.5 403.5v4.5M1022.5 733.5v-4.5" stroke="#000" stroke-width="1"/>
<path d="M1187.5 403.5v4.5M1187.5 733.5v-4.5" stroke="#000" stroke-width="1"/>
<path d="M252.5 498.5h5M1352 498.5h-5" stroke="#000" stroke-width="1"/>
<defs><linearGradient id="s0" gradientUnits="userSpaceOnUse" x1="0" x2="0" y1="455" y2="640"><stop offset="0.030" stop-color="#4848f2"/><stop offset="0.106" stop-color="#4848f2"/><stop offset="0.111" stop-color="#3c9cf0"/><stop offset="0.214" stop-color="#40c4f0"/><stop offset="0.317" stop-color="#40ecf0"/><stop offset="0.355" stop-color="#40ecf0"/><stop offset="0.403" stop-color="#40f0b0"/><stop offset="0.549" stop-color="#58f060"/><stop offset="0.646" stop-color="#a8f040"/><stop offset="0.702" stop-color="#f0f040"/><stop offset="0.815" stop-color="#f0c840"/><stop offset="0.997" stop-color="#f0a040"/><stop offset="1" stop-color="#f09f40"/></linearGradient><linearGradient id="s1" gradientUnits="userSpaceOnUse" x1="0" x2="0" y1="455" y2="640"><stop offset="0.031" stop-color="#4848f2"/><stop offset="0.106" stop-color="#4848f2"/><stop offset="0.112" stop-color="#3c9cf0"/><stop offset="0.215" stop-color="#40c4f0"/><stop offset="0.318" stop-color="#40ecf0"/><stop offset="0.356" stop-color="#40ecf0"/><stop offset="0.404" stop-color="#40f0b0"/><stop offset="0.546" stop-color="#58f060"/><stop offset="0.643" stop-color="#a8f040"/><stop offset="0.702" stop-color="#f0f040"/><stop offset="0.814" stop-color="#f0c840"/><stop offset="0.992" stop-color="#f0a040"/><stop offset="1" stop-color="#f09f40"/></linearGradient><linearGradient id="s2" gradientUnits="userSpaceOnUse" x1="0" x2="0" y1="455" y2="640"><stop offset="0.031" stop-color="#4848f2"/><stop offset="0.107" stop-color="#4848f2"/><stop offset="0.112" stop-color="#3c9cf0"/><stop offset="0.215" stop-color="#40c4f0"/><stop offset="0.319" stop-color="#40ecf0"/><stop offset="0.357" stop-color="#40ecf0"/><stop offset="0.405" stop-color="#40f0b0"/><stop offset="0.542" stop-color="#58f060"/><stop offset="0.639" stop-color="#a8f040"/><stop offset="0.701" stop-color="#f0f040"/><stop offset="0.813" stop-color="#f0c840"/><stop offset="0.987" stop-color="#f0a040"/><stop offset="1" stop-color="#f09e40"/></linearGradient><linearGradient id="s3" gradientUnits="userSpaceOnUse" x1="0" x2="0" y1="455" y2="640"><stop offset="0.032" stop-color="#4848f2"/><stop offset="0.108" stop-color="#4848f2"/><stop offset="0.113" stop-color="#3c9cf0"/><stop offset="0.216" stop-color="#40c4f0"/><stop offset="0.320" stop-color="#40ecf0"/><stop offset="0.358" stop-color="#40ecf0"/><stop offset="0.406" stop-color="#40f0b0"/><stop offset="0.538" stop-color="#58f060"/><stop offset="0.636" stop-color="#a8f040"/><stop offset="0.701" stop-color="#f0f040"/><stop offset="0.812" stop-color="#f0c840"/><stop offset="0.982" stop-color="#f0a040"/><stop offset="1" stop-color="#f09d41"/></linearGradient><linearGradient id="s4" gradientUnits="userSpaceOnUse" x1="0" x2="0" y1="455" y2="640"><stop offset="0.033" stop-color="#4848f2"/><stop offset="0.108" stop-color="#4848f2"/><stop offset="0.114" stop-color="#3c9cf0"/><stop offset="0.216" stop-color="#40c4f0"/><stop offset="0.321" stop-color="#40ecf0"/><stop offset="0.359" stop-color="#40ecf0"/><stop offset="0.408" stop-color="#40f0b0"/><stop offset="0.535" stop-color="#58f060"/><stop offset="0.632" stop-color="#a8f040"/><stop offset="0.701" stop-color="#f0f040"/><stop offset="0.810" stop-color="#f0c840"/><stop offset="0.977" stop-color="#f0a040"/><stop offset="1" stop-color="#f09d41"/></linearGradient><linearGradient id="s5" gradientUnits="userSpaceOnUse" x1="0" x2="0" y1="455" y2="640"><stop offset="0.033" stop-color="#4848f2"/><stop offset="0.109" stop-color="#4848f2"/><stop offset="0.114" stop-color="#3c9cf0"/><stop offset="0.217" stop-color="#40c4f0"/><stop offset="0.322" stop-color="#40ecf0"/><stop offset="0.360" stop-color="#40ecf0"/><stop offset="0.409" stop-color="#40f0b0"/><stop offset="0.531" stop-color="#58f060"/><stop offset="0.628" stop-color="#a8f040"/><stop offset="0.700" stop-color="#f0f040"/><stop offset="0.809" stop-color="#f0c840"/><stop offset="0.972" stop-color="#f0a040"/><stop offset="1" stop-color="#f09c41"/></linearGradient><linearGradient id="s6" gradientUnits="userSpaceOnUse" x1="0" x2="0" y1="455" y2="640"><stop offset="0.034" stop-color="#4848f2"/><stop offset="0.110" stop-color="#4848f2"/><stop offset="0.115" stop-color="#3c9cf0"/><stop offset="0.218" stop-color="#40c4f0"/><stop offset="0.323" stop-color="#40ecf0"/><stop offset="0.361" stop-color="#40ecf0"/><stop offset="0.410" stop-color="#40f0b0"/><stop offset="0.528" stop-color="#58f060"/><stop offset="0.625" stop-color="#a8f040"/><stop offset="0.700" stop-color="#f0f040"/><stop offset="0.808" stop-color="#f0c840"/><stop offset="0.966" stop-color="#f0a040"/><stop offset="1" stop-color="#f09b41"/></linearGradient><linearGradient id="s7" gradientUnits="userSpaceOnUse" x1="0" x2="0" y1="455" y2="640"><stop offset="0.035" stop-color="#4848f2"/><stop offset="0.110" stop-color="#4848f2"/><stop offset="0.116" stop-color="#3c9cf0"/><stop offset="0.218" stop-color="#40c4f0"/><stop offset="0.324" stop-color="#40ecf0"/><stop offset="0.362" stop-color="#40ecf0"/><stop offset="0.411" stop-color="#40f0b0"/><stop offset="0.524" stop-color="#58f060"/><stop offset="0.621" stop-color="#a8f040"/><stop offset="0.699" stop-color="#f0f040"/><stop offset="0.807" stop-color="#f0c840"/><stop offset="0.961" stop-color="#f0a040"/><stop offset="1" stop-color="#f09b41"/></linearGradient><linearGradient id="s8" gradientUnits="userSpaceOnUse" x1="0" x2="0" y1="455" y2="640"><stop offset="0.035" stop-color="#4848f2"/><stop offset="0.111" stop-color="#4848f2"/><stop offset="0.116" stop-color="#3c9cf0"/><stop offset="0.219" stop-color="#40c4f0"/><stop offset="0.325" stop-color="#40ecf0"/><stop offset="0.363" stop-color="#40ecf0"/><stop offset="0.412" stop-color="#40f0b0"/><stop offset="0.520" stop-color="#58f060"/><stop offset="0.618" stop-color="#a8f040"/><stop offset="0.699" stop-color="#f0f040"/><stop offset="0.805" stop-color="#f0c840"/><stop offset="0.956" stop-color="#f0a040"/><stop offset="1" stop-color="#f09a41"/></linearGradient><linearGradient id="s9" gradientUnits="userSpaceOnUse" x1="0" x2="0" y1="455" y2="640"><stop offset="0.036" stop-color="#4848f2"/><stop offset="0.111" stop-color="#4848f2"/><stop offset="0.117" stop-color="#3c9cf0"/><stop offset="0.220" stop-color="#40c4f0"/><stop offset="0.326" stop-color="#40ecf0"/><stop offset="0.364" stop-color="#40ecf0"/><stop offset="0.413" stop-color="#40f0b0"/><stop offset="0.517" stop-color="#58f060"/><stop offset="0.614" stop-color="#a8f040"/><stop offset="0.698" stop-color="#f0f040"/><stop offset="0.804" stop-color="#f0c840"/><stop offset="0.951" stop-color="#f0a040"/><stop offset="1" stop-color="#f09a41"/></linearGradient><linearGradient id="s10" gradientUnits="userSpaceOnUse" x1="0" x2="0" y1="455" y2="640"><stop offset="0.036" stop-color="#4848f2"/><stop offset="0.112" stop-color="#4848f2"/><stop offset="0.118" stop-color="#3c9cf0"/><stop offset="0.220" stop-color="#40c4f0"/><stop offset="0.327" stop-color="#40ecf0"/><stop offset="0.365" stop-color="#40ecf0"/><stop offset="0.414" stop-color="#40f0b0"/><stop offset="0.513" stop-color="#58f060"/><stop offset="0.611" stop-color="#a8f040"/><stop offset="0.698" stop-color="#f0f040"/><stop offset="0.803" stop-color="#f0c840"/><stop offset="0.946" stop-color="#f0a040"/><stop offset="1" stop-color="#f09941"/></linearGradient><linearGradient id="s11" gradientUnits="userSpaceOnUse" x1="0" x2="0" y1="455" y2="640"><stop offset="0.037" stop-color="#4848f2"/><stop offset="0.113" stop-color="#4848f2"/><stop offset="0.118" stop-color="#3c9cf0"/><stop offset="0.221" stop-color="#40c4f0"/><stop offset="0.328" stop-color="#40ecf0"/><stop offset="0.366" stop-color="#40ecf0"/><stop offset="0.415" stop-color="#40f0b0"/><stop offset="0.510" stop-color="#58f060"/><stop offset="0.607" stop-color="#a8f040"/><stop offset="0.697" stop-color="#f0f040"/><stop offset="0.801" stop-color="#f0c840"/><stop offset="0.941" stop-color="#f0a040"/><stop offset="1" stop-color="#f09942"/></linearGradient><linearGradient id="s12" gradientUnits="userSpaceOnUse" x1="0" x2="0" y1="455" y2="640"><stop offset="0.038" stop-color="#4848f2"/><stop offset="0.113" stop-color="#4848f2"/><stop offset="0.119" stop-color="#3c9cf0"/><stop offset="0.222" stop-color="#40c4f0"/><stop offset="0.329" stop-color="#40ecf0"/><stop offset="0.367" stop-color="#40ecf0"/><stop offset="0.416" stop-color="#40f0b0"/><stop offset="0.506" stop-color="#58f060"/><stop offset="0.603" stop-color="#a8f040"/><stop offset="0.697" stop-color="#f0f040"/><stop offset="0.800" stop-color="#f0c840"/><stop offset="0.936" stop-color="#f0a040"/><stop offset="1" stop-color="#f09842"/></linearGradient><linearGradient id="s13" gradientUnits="userSpaceOnUse" x1="0" x2="0" y1="455" y2="640"><stop offset="0.038" stop-color="#4848f2"/><stop offset="0.114" stop-color="#4848f2"/><stop offset="0.119" stop-color="#3c9cf0"/><stop offset="0.222" stop-color="#40c4f0"/><stop offset="0.330" stop-color="#40ecf0"/><stop offset="0.368" stop-color="#40ecf0"/><stop offset="0.417" stop-color="#40f0b0"/><stop offset="0.504" stop-color="#58f060"/><stop offset="0.601" stop-color="#a8f040"/><stop offset="0.696" stop-color="#f0f040"/><stop offset="0.802" stop-color="#f0c840"/><stop offset="0.938" stop-color="#f0a040"/><stop offset="1" stop-color="#f09942"/></linearGradient><linearGradient id="s14" gradientUnits="userSpaceOnUse" x1="0" x2="0" y1="455" y2="640"><stop offset="0.038" stop-color="#4848f2"/><stop offset="0.114" stop-color="#4848f2"/><stop offset="0.120" stop-color="#3c9cf0"/><stop offset="0.222" stop-color="#40c4f0"/><stop offset="0.331" stop-color="#40ecf0"/><stop offset="0.369" stop-color="#40ecf0"/><stop offset="0.418" stop-color="#40f0b0"/><stop offset="0.502" stop-color="#58f060"/><stop offset="0.599" stop-color="#a8f040"/><stop offset="0.696" stop-color="#f0f040"/><stop offset="0.804" stop-color="#f0c840"/><stop offset="0.941" stop-color="#f0a040"/><stop offset="1" stop-color="#f09942"/></linearGradient><linearGradient id="s15" gradientUnits="userSpaceOnUse" x1="0" x2="0" y1="455" y2="640"><stop offset="0.039" stop-color="#4848f2"/><stop offset="0.114" stop-color="#4848f2"/><stop offset="0.120" stop-color="#3c9cf0"/><stop offset="0.223" stop-color="#40c4f0"/><stop offset="0.332" stop-color="#40ecf0"/><stop offset="0.370" stop-color="#40ecf0"/><stop offset="0.419" stop-color="#40f0b0"/><stop offset="0.500" stop-color="#58f060"/><stop offset="0.597" stop-color="#a8f040"/><stop offset="0.695" stop-color="#f0f040"/><stop offset="0.806" stop-color="#f0c840"/><stop offset="0.944" stop-color="#f0a040"/><stop offset="1" stop-color="#f09941"/></linearGradient><linearGradient id="s16" gradientUnits="userSpaceOnUse" x1="0" x2="0" y1="455" y2="640"><stop offset="0.039" stop-color="#4848f2"/><stop offset="0.115" stop-color="#4848f2"/><stop offset="0.120" stop-color="#3c9cf0"/><stop offset="0.223" stop-color="#40c4f0"/><stop offset="0.333" stop-color="#40ecf0"/><stop offset="0.371" stop-color="#40ecf0"/><stop offset="0.420" stop-color="#40f0b0"/><stop offset="0.498" stop-color="#58f060"/><stop offset="0.595" stop-color="#a8f040"/><stop offset="0.695" stop-color="#f0f040"/><stop offset="0.808" stop-color="#f0c840"/><stop offset="0.948" stop-color="#f0a040"/><stop offset="1" stop-color="#f09a41"/></linearGradient><linearGradient id="s17" gradientUnits="userSpaceOnUse" x1="0" x2="0" y1="455" y2="640"><stop offset="0.039" stop-color="#4848f2"/><stop offset="0.115" stop-color="#4848f2"/><stop offset="0.121" stop-color="#3c9cf0"/><stop offset="0.223" stop-color="#40c4f0"/><stop offset="0.335" stop-color="#40ecf0"/><stop offset="0.372" stop-color="#40ecf0"/><stop offset="0.421" stop-color="#40f0b0"/><stop offset="0.496" stop-color="#58f060"/><stop offset="0.593" stop-color="#a8f040"/><stop offset="0.694" stop-color="#f0f040"/><stop offset="0.810" stop-color="#f0c840"/><stop offset="0.951" stop-color="#f0a040"/><stop offset="1" stop-color="#f09a41"/></linearGradient><linearGradient id="s18" gradientUnits="userSpaceOnUse" x1="0" x2="0" y1="455" y2="640"><stop offset="0.040" stop-color="#4848f2"/><stop offset="0.115" stop-color="#4848f2"/><stop offset="0.121" stop-color="#3c9cf0"/><stop offset="0.224" stop-color="#40c4f0"/><stop offset="0.336" stop-color="#40ecf0"/><stop offset="0.373" stop-color="#40ecf0"/><stop offset="0.422" stop-color="#40f0b0"/><stop offset="0.494" stop-color="#58f060"/><stop offset="0.591" stop-color="#a8f040"/><stop offset="0.694" stop-color="#f0f040"/><stop offset="0.813" stop-color="#f0c840"/><stop offset="0.954" stop-color="#f0a040"/><stop offset="1" stop-color="#f09a41"/></linearGradient><linearGradient id="s19" gradientUnits="userSpaceOnUse" x1="0" x2="0" y1="455" y2="640"><stop offset="0.040" stop-color="#4848f2"/><stop offset="0.116" stop-color="#4848f2"/><stop offset="0.121" stop-color="#3c9cf0"/><stop offset="0.224" stop-color="#40c4f0"/><stop offset="0.337" stop-color="#40ecf0"/><stop offset="0.374" stop-color="#40ecf0"/><stop offset="0.423" stop-color="#40f0b0"/><stop offset="0.492" stop-color="#58f060"/><stop offset="0.590" stop-color="#a8f040"/><stop offset="0.693" stop-color="#f0f040"/><stop offset="0.815" stop-color="#f0c840"/><stop offset="0.957" stop-color="#f0a040"/><stop offset="1" stop-color="#f09b41"/></linearGradient><linearGradient id="s20" gradientUnits="userSpaceOnUse" x1="0" x2="0" y1="455" y2="640"><stop offset="0.040" stop-color="#4848f2"/><stop offset="0.116" stop-color="#4848f2"/><stop offset="0.122" stop-color="#3c9cf0"/><stop offset="0.224" stop-color="#40c4f0"/><stop offset="0.338" stop-color="#40ecf0"/><stop offset="0.375" stop-color="#40ecf0"/><stop offset="0.424" stop-color="#40f0b0"/><stop offset="0.491" stop-color="#58f060"/><stop offset="0.588" stop-color="#a8f040"/><stop offset="0.693" stop-color="#f0f040"/><stop offset="0.817" stop-color="#f0c840"/><stop offset="0.960" stop-color="#f0a040"/><stop offset="1" stop-color="#f09b41"/></linearGradient><linearGradient id="s21" gradientUnits="userSpaceOnUse" x1="0" x2="0" y1="455" y2="640"><stop offset="0.041" stop-color="#4848f2"/><stop offset="0.116" stop-color="#4848f2"/><stop offset="0.122" stop-color="#3c9cf0"/><stop offset="0.225" stop-color="#40c4f0"/><stop offset="0.338" stop-color="#40ecf0"/><stop offset="0.376" stop-color="#40ecf0"/><stop offset="0.425" stop-color="#40f0b0"/><stop offset="0.490" stop-color="#58f060"/><stop offset="0.587" stop-color="#a8f040"/><stop offset="0.692" stop-color="#f0f040"/><stop offset="0.819" stop-color="#f0c840"/><stop offset="0.964" stop-color="#f0a040"/><stop offset="1" stop-color="#f09b41"/></linearGradient><linearGradient id="s22" gradientUnits="userSpaceOnUse" x1="0" x2="0" y1="455" y2="640"><stop offset="0.041" stop-color="#4848f2"/><stop offset="0.117" stop-color="#4848f2"/><stop offset="0.122" stop-color="#3c9cf0"/><stop offset="0.225" stop-color="#40c4f0"/><stop offset="0.339" stop-color="#40ecf0"/><stop offset="0.377" stop-color="#40ecf0"/><stop offset="0.426" stop-color="#40f0b0"/><stop offset="0.489" stop-color="#58f060"/><stop offset="0.586" stop-color="#a8f040"/><stop offset="0.692" stop-color="#f0f040"/><stop offset="0.821" stop-color="#f0c840"/><stop offset="0.967" stop-color="#f0a040"/><stop offset="1" stop-color="#f09c41"/></linearGradient><linearGradient id="s23" gradientUnits="userSpaceOnUse" x1="0" x2="0" y1="455" y2="640"><stop offset="0.041" stop-color="#4848f2"/><stop offset="0.117" stop-color="#4848f2"/><stop offset="0.123" stop-color="#3c9cf0"/><stop offset="0.225" stop-color="#40c4f0"/><stop offset="0.340" stop-color="#40ecf0"/><stop offset="0.378" stop-color="#40ecf0"/><stop offset="0.426" stop-color="#40f0b0"/><stop offset="0.487" stop-color="#58f060"/><stop offset="0.585" stop-color="#a8f040"/><stop offset="0.691" stop-color="#f0f040"/><stop offset="0.825" stop-color="#f0c840"/><stop offset="0.974" stop-color="#f0a040"/><stop offset="1" stop-color="#f09d41"/></linearGradient><linearGradient id="s24" gradientUnits="userSpaceOnUse" x1="0" x2="0" y1="455" y2="640"><stop offset="0.042" stop-color="#4848f2"/><stop offset="0.118" stop-color="#4848f2"/><stop offset="0.123" stop-color="#3c9cf0"/><stop offset="0.226" stop-color="#40c4f0"/><stop offset="0.340" stop-color="#40ecf0"/><stop offset="0.378" stop-color="#40ecf0"/><stop offset="0.427" stop-color="#40f0b0"/><stop offset="0.486" stop-color="#58f060"/><stop offset="0.583" stop-color="#a8f040"/><stop offset="0.691" stop-color="#f0f040"/><stop offset="0.829" stop-color="#f0c840"/><stop offset="0.981" stop-color="#f0a040"/><stop offset="1" stop-color="#f09e41"/></linearGradient><linearGradient id="s25" gradientUnits="userSpaceOnUse" x1="0" x2="0" y1="455" y2="640"><stop offset="0.042" stop-color="#4848f2"/><stop offset="0.118" stop-color="#4848f2"/><stop offset="0.123" stop-color="#3c9cf0"/><stop offset="0.226" stop-color="#40c4f0"/><stop offset="0.341" stop-color="#40ecf0"/><stop offset="0.379" stop-color="#40ecf0"/><stop offset="0.428" stop-color="#40f0b0"/><stop offset="0.485" stop-color="#58f060"/><stop offset="0.582" stop-color="#a8f040"/><stop offset="0.690" stop-color="#f0f040"/><stop offset="0.832" stop-color="#f0c840"/><stop offset="0.989" stop-color="#f0a040"/><stop offset="1" stop-color="#f09f40"/></linearGradient><linearGradient id="s26" gradientUnits="userSpaceOnUse" x1="0" x2="0" y1="455" y2="640"><stop offset="0.043" stop-color="#4848f2"/><stop offset="0.118" stop-color="#4848f2"/><stop offset="0.124" stop-color="#3c9cf0"/><stop offset="0.226" stop-color="#40c4f0"/><stop offset="0.342" stop-color="#40ecf0"/><stop offset="0.380" stop-color="#40ecf0"/><stop offset="0.428" stop-color="#40f0b0"/><stop offset="0.484" stop-color="#58f060"/><stop offset="0.581" stop-color="#a8f040"/><stop offset="0.689" stop-color="#f0f040"/><stop offset="0.836" stop-color="#f0c840"/><stop offset="0.996" stop-color="#f0a040"/><stop offset="1" stop-color="#f0a040"/></linearGradient><linearGradient id="s27" gradientUnits="userSpaceOnUse" x1="0" x2="0" y1="455" y2="640"><stop offset="0.043" stop-color="#4848f2"/><stop offset="0.119" stop-color="#4848f2"/><stop offset="0.124" stop-color="#3c9cf0"/><stop offset="0.227" stop-color="#40c4f0"/><stop offset="0.342" stop-color="#40ecf0"/><stop offset="0.380" stop-color="#40ecf0"/><stop offset="0.429" stop-color="#40f0b0"/><stop offset="0.482" stop-color="#58f060"/><stop offset="0.580" stop-color="#a8f040"/><stop offset="0.688" stop-color="#f0f040"/><stop offset="0.840" stop-color="#f0c840"/><stop offset="1" stop-color="#f0a140"/></linearGradient><linearGradient id="s28" gradientUnits="userSpaceOnUse" x1="0" x2="0" y1="455" y2="640"><stop offset="0.043" stop-color="#4848f2"/><stop offset="0.119" stop-color="#4848f2"/><stop offset="0.124" stop-color="#3c9cf0"/><stop offset="0.227" stop-color="#40c4f0"/><stop offset="0.343" stop-color="#40ecf0"/><stop offset="0.381" stop-color="#40ecf0"/><stop offset="0.430" stop-color="#40f0b0"/><stop offset="0.481" stop-color="#58f060"/><stop offset="0.579" stop-color="#a8f040"/><stop offset="0.688" stop-color="#f0f040"/><stop offset="0.844" stop-color="#f0c840"/><stop offset="1" stop-color="#f0a340"/></linearGradient><linearGradient id="s29" gradientUnits="userSpaceOnUse" x1="0" x2="0" y1="455" y2="640"><stop offset="0.044" stop-color="#4848f2"/><stop offset="0.119" stop-color="#4848f2"/><stop offset="0.125" stop-color="#3c9cf0"/><stop offset="0.227" stop-color="#40c4f0"/><stop offset="0.343" stop-color="#40ecf0"/><stop offset="0.381" stop-color="#40ecf0"/><stop offset="0.429" stop-color="#40f0b0"/><stop offset="0.482" stop-color="#58f060"/><stop offset="0.579" stop-color="#a8f040"/><stop offset="0.687" stop-color="#f0f040"/><stop offset="0.847" stop-color="#f0c840"/><stop offset="1" stop-color="#f0a440"/></linearGradient><linearGradient id="s30" gradientUnits="userSpaceOnUse" x1="0" x2="0" y1="455" y2="640"><stop offset="0.044" stop-color="#4848f2"/><stop offset="0.120" stop-color="#4848f2"/><stop offset="0.125" stop-color="#3c9cf0"/><stop offset="0.228" stop-color="#40c4f0"/><stop offset="0.342" stop-color="#40ecf0"/><stop offset="0.380" stop-color="#40ecf0"/><stop offset="0.429" stop-color="#40f0b0"/><stop offset="0.484" stop-color="#58f060"/><stop offset="0.581" stop-color="#a8f040"/><stop offset="0.686" stop-color="#f0f040"/><stop offset="0.851" stop-color="#f0c840"/><stop offset="1" stop-color="#f0a640"/></linearGradient><linearGradient id="s31" gradientUnits="userSpaceOnUse" x1="0" x2="0" y1="455" y2="640"><stop offset="0.044" stop-color="#4848f2"/><stop offset="0.120" stop-color="#4848f2"/><stop offset="0.125" stop-color="#3c9cf0"/><stop offset="0.228" stop-color="#40c4f0"/><stop offset="0.341" stop-color="#40ecf0"/><stop offset="0.379" stop-color="#40ecf0"/><stop offset="0.428" stop-color="#40f0b0"/><stop offset="0.485" stop-color="#58f060"/><stop offset="0.582" stop-color="#a8f040"/><stop offset="0.685" stop-color="#f0f040"/><stop offset="0.855" stop-color="#f0c840"/><stop offset="1" stop-color="#f0a840"/></linearGradient><linearGradient id="s32" gradientUnits="userSpaceOnUse" x1="0" x2="0" y1="455" y2="640"><stop offset="0.045" stop-color="#4848f2"/><stop offset="0.120" stop-color="#4848f2"/><stop offset="0.126" stop-color="#3c9cf0"/><stop offset="0.228" stop-color="#40c4f0"/><stop offset="0.341" stop-color="#40ecf0"/><stop offset="0.379" stop-color="#40ecf0"/><stop offset="0.427" stop-color="#40f0b0"/><stop offset="0.486" stop-color="#58f060"/><stop offset="0.584" stop-color="#a8f040"/><stop offset="0.685" stop-color="#f0f040"/><stop offset="0.859" stop-color="#f0c840"/><stop offset="1" stop-color="#f0a940"/></linearGradient><linearGradient id="s33" gradientUnits="userSpaceOnUse" x1="0" x2="0" y1="455" y2="640"><stop offset="0.045" stop-color="#4848f2"/><stop offset="0.121" stop-color="#4848f2"/><stop offset="0.126" stop-color="#3c9cf0"/><stop offset="0.229" stop-color="#40c4f0"/><stop offset="0.340" stop-color="#40ecf0"/><stop offset="0.378" stop-color="#40ecf0"/><stop offset="0.426" stop-color="#40f0b0"/><stop offset="0.488" stop-color="#58f060"/><stop offset="0.585" stop-color="#a8f040"/><stop offset="0.684" stop-color="#f0f040"/><stop offset="0.864" stop-color="#f0c840"/><stop offset="1" stop-color="#f0aa40"/></linearGradient><linearGradient id="s34" gradientUnits="userSpaceOnUse" x1="0" x2="0" y1="455" y2="640"><stop offset="0.045" stop-color="#4848f2"/><stop offset="0.121" stop-color="#4848f2"/><stop offset="0.126" stop-color="#3c9cf0"/><stop offset="0.229" stop-color="#40c4f0"/><stop offset="0.339" stop-color="#40ecf0"/><stop offset="0.377" stop-color="#40ecf0"/><stop offset="0.426" stop-color="#40f0b0"/><stop offset="0.489" stop-color="#58f060"/><stop offset="0.586" stop-color="#a8f040"/><stop offset="0.683" stop-color="#f0f040"/><stop offset="0.868" stop-color="#f0c840"/><stop offset="1" stop-color="#f0ac40"/></linearGradient><linearGradient id="s35" gradientUnits="userSpaceOnUse" x1="0" x2="0" y1="455" y2="640"><stop offset="0.046" stop-color="#4848f2"/><stop offset="0.121" stop-color="#4848f2"/><stop offset="0.127" stop-color="#3c9cf0"/><stop offset="0.229" stop-color="#40c4f0"/><stop offset="0.339" stop-color="#40ecf0"/><stop offset="0.376" stop-color="#40ecf0"/><stop offset="0.425" stop-color="#40f0b0"/><stop offset="0.490" stop-color="#58f060"/><stop offset="0.588" stop-color="#a8f040"/><stop offset="0.682" stop-color="#f0f040"/><stop offset="0.873" stop-color="#f0c840"/><stop offset="1" stop-color="#f0ad40"/></linearGradient><linearGradient id="s36" gradientUnits="userSpaceOnUse" x1="0" x2="0" y1="455" y2="640"><stop offset="0.046" stop-color="#4848f2"/><stop offset="0.122" stop-color="#4848f2"/><stop offset="0.127" stop-color="#3c9cf0"/><stop offset="0.230" stop-color="#40c4f0"/><stop offset="0.338" stop-color="#40ecf0"/><stop offset="0.376" stop-color="#40ecf0"/><stop offset="0.424" stop-color="#40f0b0"/><stop offset="0.492" stop-color="#58f060"/><stop offset="0.589" stop-color="#a8f040"/><stop offset="0.682" stop-color="#f0f040"/><stop offset="0.878" stop-color="#f0c840"/><stop offset="1" stop-color="#f0ae40"/></linearGradient><linearGradient id="s37" gradientUnits="userSpaceOnUse" x1="0" x2="0" y1="455" y2="640"><stop offset="0.046" stop-color="#4848f2"/><stop offset="0.122" stop-color="#4848f2"/><stop offset="0.127" stop-color="#3c9cf0"/><stop offset="0.230" stop-color="#40c4f0"/><stop offset="0.337" stop-color="#40ecf0"/><stop offset="0.375" stop-color="#40ecf0"/><stop offset="0.424" stop-color="#40f0b0"/><stop offset="0.493" stop-color="#58f060"/><stop offset="0.590" stop-color="#a8f040"/><stop offset="0.681" stop-color="#f0f040"/><stop offset="0.883" stop-color="#f0c840"/><stop offset="1" stop-color="#f0af40"/></linearGradient><linearGradient id="s38" gradientUnits="userSpaceOnUse" x1="0" x2="0" y1="455" y2="640"><stop offset="0.047" stop-color="#4848f2"/><stop offset="0.122" stop-color="#4848f2"/><stop offset="0.128" stop-color="#3c9cf0"/><stop offset="0.230" stop-color="#40c4f0"/><stop offset="0.337" stop-color="#40ecf0"/><stop offset="0.374" stop-color="#40ecf0"/><stop offset="0.423" stop-color="#40f0b0"/><stop offset="0.494" stop-color="#58f060"/><stop offset="0.592" stop-color="#a8f040"/><stop offset="0.680" stop-color="#f0f040"/><stop offset="0.888" stop-color="#f0c840"/><stop offset="1" stop-color="#f0b040"/></linearGradient><linearGradient id="s39" gradientUnits="userSpaceOnUse" x1="0" x2="0" y1="455" y2="640"><stop offset="0.047" stop-color="#4848f2"/><stop offset="0.123" stop-color="#4848f2"/><stop offset="0.128" stop-color="#3c9cf0"/><stop offset="0.231" stop-color="#40c4f0"/><stop offset="0.336" stop-color="#40ecf0"/><stop offset="0.374" stop-color="#40ecf0"/><stop offset="0.422" stop-color="#40f0b0"/><stop offset="0.496" stop-color="#58f060"/><stop offset="0.593" stop-color="#a8f040"/><stop offset="0.679" stop-color="#f0f040"/><stop offset="0.893" stop-color="#f0c840"/><stop offset="1" stop-color="#f0b140"/></linearGradient><linearGradient id="s40" gradientUnits="userSpaceOnUse" x1="0" x2="0" y1="455" y2="640"><stop offset="0.047" stop-color="#4848f2"/><stop offset="0.123" stop-color="#4848f2"/><stop offset="0.128" stop-color="#3c9cf0"/><stop offset="0.231" stop-color="#40c4f0"/><stop offset="0.335" stop-color="#40ecf0"/><stop offset="0.373" stop-color="#40ecf0"/><stop offset="0.422" stop-color="#40f0b0"/><stop offset="0.497" stop-color="#58f060"/><stop offset="0.594" stop-color="#a8f040"/><stop offset="0.679" stop-color="#f0f040"/><stop offset="0.898" stop-color="#f0c840"/><stop offset="1" stop-color="#f0b240"/></linearGradient><linearGradient id="s41" gradientUnits="userSpaceOnUse" x1="0" x2="0" y1="455" y2="640"><stop offset="0.048" stop-color="#4848f2"/><stop offset="0.123" stop-color="#4848f2"/><stop offset="0.129" stop-color="#3c9cf0"/><stop offset="0.231" stop-color="#40c4f0"/><stop offset="0.334" stop-color="#40ecf0"/><stop offset="0.371" stop-color="#40ecf0"/><stop offset="0.420" stop-color="#40f0b0"/><stop offset="0.498" stop-color="#58f060"/><stop offset="0.596" stop-color="#a8f040"/><stop offset="0.678" stop-color="#f0f040"/><stop offset="0.903" stop-color="#f0c840"/><stop offset="1" stop-color="#f0b340"/></linearGradient><linearGradient id="s42" gradientUnits="userSpaceOnUse" x1="0" x2="0" y1="455" y2="640"><stop offset="0.048" stop-color="#4848f2"/><stop offset="0.124" stop-color="#4848f2"/><stop offset="0.129" stop-color="#3c9cf0"/><stop offset="0.232" stop-color="#40c4f0"/><stop offset="0.332" stop-color="#40ecf0"/><stop offset="0.370" stop-color="#40ecf0"/><stop offset="0.418" stop-color="#40f0b0"/><stop offset="0.500" stop-color="#58f060"/><stop offset="0.597" stop-color="#a8f040"/><stop offset="0.677" stop-color="#f0f040"/><stop offset="0.908" stop-color="#f0c840"/><stop offset="1" stop-color="#f0b440"/></linearGradient><linearGradient id="s43" gradientUnits="userSpaceOnUse" x1="0" x2="0" y1="455" y2="640"><stop offset="0.048" stop-color="#4848f2"/><stop offset="0.124" stop-color="#4848f2"/><stop offset="0.129" stop-color="#3c9cf0"/><stop offset="0.232" stop-color="#40c4f0"/><stop offset="0.330" stop-color="#40ecf0"/><stop offset="0.368" stop-color="#40ecf0"/><stop offset="0.417" stop-color="#40f0b0"/><stop offset="0.500" stop-color="#58f060"/><stop offset="0.598" stop-color="#a8f040"/><stop offset="0.677" stop-color="#f0f040"/><stop offset="0.913" stop-color="#f0c840"/><stop offset="1" stop-color="#f0b640"/></linearGradient><linearGradient id="s44" gradientUnits="userSpaceOnUse" x1="0" x2="0" y1="455" y2="640"><stop offset="0.049" stop-color="#4848f2"/><stop offset="0.124" stop-color="#4848f2"/><stop offset="0.130" stop-color="#3c9cf0"/><stop offset="0.232" stop-color="#40c4f0"/><stop offset="0.328" stop-color="#40ecf0"/><stop offset="0.366" stop-color="#40ecf0"/><stop offset="0.415" stop-color="#40f0b0"/><stop offset="0.500" stop-color="#58f060"/><stop offset="0.598" stop-color="#a8f040"/><stop offset="0.676" stop-color="#f0f040"/><stop offset="0.918" stop-color="#f0c840"/><stop offset="1" stop-color="#f0b740"/></linearGradient><linearGradient id="s45" gradientUnits="userSpaceOnUse" x1="0" x2="0" y1="455" y2="640"><stop offset="0.049" stop-color="#4848f2"/><stop offset="0.125" stop-color="#4848f2"/><stop offset="0.130" stop-color="#3c9cf0"/><stop offset="0.233" stop-color="#40c4f0"/><stop offset="0.326" stop-color="#40ecf0"/><stop offset="0.364" stop-color="#40ecf0"/><stop offset="0.413" stop-color="#40f0b0"/><stop offset="0.501" stop-color="#58f060"/><stop offset="0.598" stop-color="#a8f040"/><stop offset="0.675" stop-color="#f0f040"/><stop offset="0.918" stop-color="#f0c840"/><stop offset="1" stop-color="#f0b640"/></linearGradient><linearGradient id="s46" gradientUnits="userSpaceOnUse" x1="0" x2="0" y1="455" y2="640"><stop offset="0.050" stop-color="#4848f2"/><stop offset="0.125" stop-color="#4848f2"/><stop offset="0.131" stop-color="#3c9cf0"/><stop offset="0.233" stop-color="#40c4f0"/><stop offset="0.325" stop-color="#40ecf0"/><stop offset="0.362" stop-color="#40ecf0"/><stop offset="0.411" stop-color="#40f0b0"/><stop offset="0.501" stop-color="#58f060"/><stop offset="0.598" stop-color="#a8f040"/><stop offset="0.675" stop-color="#f0f040"/><stop offset="0.916" stop-color="#f0c840"/><stop offset="1" stop-color="#f0b640"/></linearGradient><linearGradient id="s47" gradientUnits="userSpaceOnUse" x1="0" x2="0" y1="455" y2="640"><stop offset="0.050" stop-color="#4848f2"/><stop offset="0.126" stop-color="#4848f2"/><stop offset="0.131" stop-color="#3c9cf0"/><stop offset="0.234" stop-color="#40c4f0"/><stop offset="0.323" stop-color="#40ecf0"/><stop offset="0.361" stop-color="#40ecf0"/><stop offset="0.409" stop-color="#40f0b0"/><stop offset="0.501" stop-color="#58f060"/><stop offset="0.599" stop-color="#a8f040"/><stop offset="0.674" stop-color="#f0f040"/><stop offset="0.915" stop-color="#f0c840"/><stop offset="1" stop-color="#f0b540"/></linearGradient><linearGradient id="s48" gradientUnits="userSpaceOnUse" x1="0" x2="0" y1="455" y2="640"><stop offset="0.051" stop-color="#4848f2"/><stop offset="0.126" stop-color="#4848f2"/><stop offset="0.132" stop-color="#3c9cf0"/><stop offset="0.234" stop-color="#40c4f0"/><stop offset="0.321" stop-color="#40ecf0"/><stop offset="0.359" stop-color="#40ecf0"/><stop offset="0.408" stop-color="#40f0b0"/><stop offset="0.502" stop-color="#58f060"/><stop offset="0.599" stop-color="#a8f040"/><stop offset="0.674" stop-color="#f0f040"/><stop offset="0.914" stop-color="#f0c840"/><stop offset="1" stop-color="#f0b540"/></linearGradient><linearGradient id="s49" gradientUnits="userSpaceOnUse" x1="0" x2="0" y1="455" y2="640"><stop offset="0.051" stop-color="#4848f2"/><stop offset="0.127" stop-color="#4848f2"/><stop offset="0.132" stop-color="#3c9cf0"/><stop offset="0.235" stop-color="#40c4f0"/><stop offset="0.319" stop-color="#40ecf0"/><stop offset="0.357" stop-color="#40ecf0"/><stop offset="0.406" stop-color="#40f0b0"/><stop offset="0.502" stop-color="#58f060"/><stop offset="0.599" stop-color="#a8f040"/><stop offset="0.674" stop-color="#f0f040"/><stop offset="0.912" stop-color="#f0c840"/><stop offset="1" stop-color="#f0b440"/></linearGradient><linearGradient id="s50" gradientUnits="userSpaceOnUse" x1="0" x2="0" y1="455" y2="640"><stop offset="0.052" stop-color="#4848f2"/><stop offset="0.127" stop-color="#4848f2"/><stop offset="0.133" stop-color="#3c9cf0"/><stop offset="0.236" stop-color="#40c4f0"/><stop offset="0.317" stop-color="#40ecf0"/><stop offset="0.355" stop-color="#40ecf0"/><stop offset="0.404" stop-color="#40f0b0"/><stop offset="0.502" stop-color="#58f060"/><stop offset="0.599" stop-color="#a8f040"/><stop offset="0.673" stop-color="#f0f040"/><stop offset="0.911" stop-color="#f0c840"/><stop offset="1" stop-color="#f0b340"/></linearGradient><linearGradient id="s51" gradientUnits="userSpaceOnUse" x1="0" x2="0" y1="455" y2="640"><stop offset="0.052" stop-color="#4848f2"/><stop offset="0.128" stop-color="#4848f2"/><stop offset="0.133" stop-color="#3c9cf0"/><stop offset="0.236" stop-color="#40c4f0"/><stop offset="0.316" stop-color="#40ecf0"/><stop offset="0.353" stop-color="#40ecf0"/><stop offset="0.402" stop-color="#40f0b0"/><stop offset="0.502" stop-color="#58f060"/><stop offset="0.600" stop-color="#a8f040"/><stop offset="0.673" stop-color="#f0f040"/><stop offset="0.910" stop-color="#f0c840"/><stop offset="1" stop-color="#f0b240"/></linearGradient><linearGradient id="s52" gradientUnits="userSpaceOnUse" x1="0" x2="0" y1="455" y2="640"><stop offset="0.053" stop-color="#4848f2"/><stop offset="0.129" stop-color="#4848f2"/><stop offset="0.134" stop-color="#3c9cf0"/><stop offset="0.237" stop-color="#40c4f0"/><stop offset="0.314" stop-color="#40ecf0"/><stop offset="0.352" stop-color="#40ecf0"/><stop offset="0.400" stop-color="#40f0b0"/><stop offset="0.503" stop-color="#58f060"/><stop offset="0.600" stop-color="#a8f040"/><stop offset="0.672" stop-color="#f0f040"/><stop offset="0.908" stop-color="#f0c840"/><stop offset="1" stop-color="#f0b240"/></linearGradient><linearGradient id="s53" gradientUnits="userSpaceOnUse" x1="0" x2="0" y1="455" y2="640"><stop offset="0.053" stop-color="#4848f2"/><stop offset="0.129" stop-color="#4848f2"/><stop offset="0.134" stop-color="#3c9cf0"/><stop offset="0.237" stop-color="#40c4f0"/><stop offset="0.313" stop-color="#40ecf0"/><stop offset="0.350" stop-color="#40ecf0"/><stop offset="0.399" stop-color="#40f0b0"/><stop offset="0.501" stop-color="#58f060"/><stop offset="0.598" stop-color="#a8f040"/><stop offset="0.672" stop-color="#f0f040"/><stop offset="0.907" stop-color="#f0c840"/><stop offset="1" stop-color="#f0b140"/></linearGradient><linearGradient id="s54" gradientUnits="userSpaceOnUse" x1="0" x2="0" y1="455" y2="640"><stop offset="0.054" stop-color="#4848f2"/><stop offset="0.130" stop-color="#4848f2"/><stop offset="0.135" stop-color="#3c9cf0"/><stop offset="0.238" stop-color="#40c4f0"/><stop offset="0.312" stop-color="#40ecf0"/><stop offset="0.349" stop-color="#40ecf0"/><stop offset="0.398" stop-color="#40f0b0"/><stop offset="0.499" stop-color="#58f060"/><stop offset="0.597" stop-color="#a8f040"/><stop offset="0.671" stop-color="#f0f040"/><stop offset="0.906" stop-color="#f0c840"/><stop offset="1" stop-color="#f0b040"/></linearGradient><linearGradient id="s55" gradientUnits="userSpaceOnUse" x1="0" x2="0" y1="455" y2="640"><stop offset="0.054" stop-color="#4848f2"/><stop offset="0.130" stop-color="#4848f2"/><stop offset="0.135" stop-color="#3c9cf0"/><stop offset="0.238" stop-color="#40c4f0"/><stop offset="0.310" stop-color="#40ecf0"/><stop offset="0.348" stop-color="#40ecf0"/><stop offset="0.397" stop-color="#40f0b0"/><stop offset="0.497" stop-color="#58f060"/><stop offset="0.595" stop-color="#a8f040"/><stop offset="0.671" stop-color="#f0f040"/><stop offset="0.904" stop-color="#f0c840"/><stop offset="1" stop-color="#f0af40"/></linearGradient><linearGradient id="s56" gradientUnits="userSpaceOnUse" x1="0" x2="0" y1="455" y2="640"><stop offset="0.055" stop-color="#4848f2"/><stop offset="0.130" stop-color="#4848f2"/><stop offset="0.136" stop-color="#3c9cf0"/><stop offset="0.238" stop-color="#40c4f0"/><stop offset="0.309" stop-color="#40ecf0"/><stop offset="0.347" stop-color="#40ecf0"/><stop offset="0.396" stop-color="#40f0b0"/><stop offset="0.495" stop-color="#58f060"/><stop offset="0.593" stop-color="#a8f040"/><stop offset="0.670" stop-color="#f0f040"/><stop offset="0.903" stop-color="#f0c840"/><stop offset="1" stop-color="#f0ae40"/></linearGradient><linearGradient id="s57" gradientUnits="userSpaceOnUse" x1="0" x2="0" y1="455" y2="640"><stop offset="0.055" stop-color="#4848f2"/><stop offset="0.131" stop-color="#4848f2"/><stop offset="0.136" stop-color="#3c9cf0"/><stop offset="0.239" stop-color="#40c4f0"/><stop offset="0.308" stop-color="#40ecf0"/><stop offset="0.346" stop-color="#40ecf0"/><stop offset="0.395" stop-color="#40f0b0"/><stop offset="0.494" stop-color="#58f060"/><stop offset="0.591" stop-color="#a8f040"/><stop offset="0.670" stop-color="#f0f040"/><stop offset="0.895" stop-color="#f0c840"/><stop offset="1" stop-color="#f0ab40"/></linearGradient><linearGradient id="s58" gradientUnits="userSpaceOnUse" x1="0" x2="0" y1="455" y2="640"><stop offset="0.055" stop-color="#4848f2"/><stop offset="0.131" stop-color="#4848f2"/><stop offset="0.136" stop-color="#3c9cf0"/><stop offset="0.239" stop-color="#40c4f0"/><stop offset="0.307" stop-color="#40ecf0"/><stop offset="0.345" stop-color="#40ecf0"/><stop offset="0.394" stop-color="#40f0b0"/><stop offset="0.492" stop-color="#58f060"/><stop offset="0.589" stop-color="#a8f040"/><stop offset="0.669" stop-color="#f0f040"/><stop offset="0.885" stop-color="#f0c840"/><stop offset="1" stop-color="#f0a840"/></linearGradient><linearGradient id="s59" gradientUnits="userSpaceOnUse" x1="0" x2="0" y1="455" y2="640"><stop offset="0.056" stop-color="#4848f2"/><stop offset="0.131" stop-color="#4848f2"/><stop offset="0.137" stop-color="#3c9cf0"/><stop offset="0.239" stop-color="#40c4f0"/><stop offset="0.306" stop-color="#40ecf0"/><stop offset="0.344" stop-color="#40ecf0"/><stop offset="0.393" stop-color="#40f0b0"/><stop offset="0.490" stop-color="#58f060"/><stop offset="0.587" stop-color="#a8f040"/><stop offset="0.669" stop-color="#f0f040"/><stop offset="0.875" stop-color="#f0c840"/><stop offset="1" stop-color="#f0a440"/></linearGradient><linearGradient id="s60" gradientUnits="userSpaceOnUse" x1="0" x2="0" y1="455" y2="640"><stop offset="0.056" stop-color="#4848f2"/><stop offset="0.131" stop-color="#4848f2"/><stop offset="0.137" stop-color="#3c9cf0"/><stop offset="0.240" stop-color="#40c4f0"/><stop offset="0.305" stop-color="#40ecf0"/><stop offset="0.343" stop-color="#40ecf0"/><stop offset="0.392" stop-color="#40f0b0"/><stop offset="0.488" stop-color="#58f060"/><stop offset="0.585" stop-color="#a8f040"/><stop offset="0.669" stop-color="#f0f040"/><stop offset="0.865" stop-color="#f0c840"/><stop offset="0.999" stop-color="#f0a040"/><stop offset="1" stop-color="#f0a040"/></linearGradient><linearGradient id="s61" gradientUnits="userSpaceOnUse" x1="0" x2="0" y1="455" y2="640"><stop offset="0.056" stop-color="#4848f2"/><stop offset="0.132" stop-color="#4848f2"/><stop offset="0.137" stop-color="#3c9cf0"/><stop offset="0.240" stop-color="#40c4f0"/><stop offset="0.304" stop-color="#40ecf0"/><stop offset="0.342" stop-color="#40ecf0"/><stop offset="0.390" stop-color="#40f0b0"/><stop offset="0.486" stop-color="#58f060"/><stop offset="0.583" stop-color="#a8f040"/><stop offset="0.668" stop-color="#f0f040"/><stop offset="0.855" stop-color="#f0c840"/><stop offset="0.985" stop-color="#f0a040"/><stop offset="1" stop-color="#f09c41"/></linearGradient><linearGradient id="s62" gradientUnits="userSpaceOnUse" x1="0" x2="0" y1="455" y2="640"><stop offset="0.056" stop-color="#4848f2"/><stop offset="0.132" stop-color="#4848f2"/><stop offset="0.137" stop-color="#3c9cf0"/><stop offset="0.240" stop-color="#40c4f0"/><stop offset="0.303" stop-color="#40ecf0"/><stop offset="0.341" stop-color="#40ecf0"/><stop offset="0.389" stop-color="#40f0b0"/><stop offset="0.484" stop-color="#58f060"/><stop offset="0.581" stop-color="#a8f040"/><stop offset="0.668" stop-color="#f0f040"/><stop offset="0.845" stop-color="#f0c840"/><stop offset="0.970" stop-color="#f0a040"/><stop offset="1" stop-color="#f09942"/></linearGradient><linearGradient id="s63" gradientUnits="userSpaceOnUse" x1="0" x2="0" y1="455" y2="640"><stop offset="0.057" stop-color="#4848f2"/><stop offset="0.132" stop-color="#4848f2"/><stop offset="0.138" stop-color="#3c9cf0"/><stop offset="0.240" stop-color="#40c4f0"/><stop offset="0.302" stop-color="#40ecf0"/><stop offset="0.339" stop-color="#40ecf0"/><stop offset="0.388" stop-color="#40f0b0"/><stop offset="0.482" stop-color="#58f060"/><stop offset="0.580" stop-color="#a8f040"/><stop offset="0.667" stop-color="#f0f040"/><stop offset="0.835" stop-color="#f0c840"/><stop offset="0.956" stop-color="#f0a040"/><stop offset="1" stop-color="#f09543"/></linearGradient><linearGradient id="s64" gradientUnits="userSpaceOnUse" x1="0" x2="0" y1="455" y2="640"><stop offset="0.057" stop-color="#4848f2"/><stop offset="0.133" stop-color="#4848f2"/><stop offset="0.138" stop-color="#3c9cf0"/><stop offset="0.241" stop-color="#40c4f0"/><stop offset="0.300" stop-color="#40ecf0"/><stop offset="0.338" stop-color="#40ecf0"/><stop offset="0.387" stop-color="#40f0b0"/><stop offset="0.480" stop-color="#58f060"/><stop offset="0.578" stop-color="#a8f040"/><stop offset="0.667" stop-color="#f0f040"/><stop offset="0.825" stop-color="#f0c840"/><stop offset="0.941" stop-color="#f0a040"/><stop offset="1" stop-color="#f09143"/></linearGradient><linearGradient id="s65" gradientUnits="userSpaceOnUse" x1="0" x2="0" y1="455" y2="640"><stop offset="0.057" stop-color="#4848f2"/><stop offset="0.133" stop-color="#4848f2"/><stop offset="0.138" stop-color="#3c9cf0"/><stop offset="0.241" stop-color="#40c4f0"/><stop offset="0.299" stop-color="#40ecf0"/><stop offset="0.337" stop-color="#40ecf0"/><stop offset="0.385" stop-color="#40f0b0"/><stop offset="0.478" stop-color="#58f060"/><stop offset="0.576" stop-color="#a8f040"/><stop offset="0.666" stop-color="#f0f040"/><stop offset="0.815" stop-color="#f0c840"/><stop offset="0.927" stop-color="#f0a040"/><stop offset="1" stop-color="#f08c44"/></linearGradient><linearGradient id="s66" gradientUnits="userSpaceOnUse" x1="0" x2="0" y1="455" y2="640"><stop offset="0.058" stop-color="#4848f2"/><stop offset="0.133" stop-color="#4848f2"/><stop offset="0.139" stop-color="#3c9cf0"/><stop offset="0.241" stop-color="#40c4f0"/><stop offset="0.298" stop-color="#40ecf0"/><stop offset="0.335" stop-color="#40ecf0"/><stop offset="0.384" stop-color="#40f0b0"/><stop offset="0.477" stop-color="#58f060"/><stop offset="0.574" stop-color="#a8f040"/><stop offset="0.666" stop-color="#f0f040"/><stop offset="0.805" stop-color="#f0c840"/><stop offset="0.913" stop-color="#f0a040"/><stop offset="1" stop-color="#f08845"/></linearGradient><linearGradient id="s67" gradientUnits="userSpaceOnUse" x1="0" x2="0" y1="455" y2="640"><stop offset="0.058" stop-color="#4848f2"/><stop offset="0.134" stop-color="#4848f2"/><stop offset="0.139" stop-color="#3c9cf0"/><stop offset="0.242" stop-color="#40c4f0"/><stop offset="0.296" stop-color="#40ecf0"/><stop offset="0.334" stop-color="#40ecf0"/><stop offset="0.383" stop-color="#40f0b0"/><stop offset="0.475" stop-color="#58f060"/><stop offset="0.572" stop-color="#a8f040"/><stop offset="0.665" stop-color="#f0f040"/><stop offset="0.795" stop-color="#f0c840"/><stop offset="0.898" stop-color="#f0a040"/><stop offset="1" stop-color="#f08346"/></linearGradient><linearGradient id="s68" gradientUnits="userSpaceOnUse" x1="0" x2="0" y1="455" y2="640"><stop offset="0.058" stop-color="#4848f2"/><stop offset="0.134" stop-color="#4848f2"/><stop offset="0.139" stop-color="#3c9cf0"/><stop offset="0.242" stop-color="#40c4f0"/><stop offset="0.295" stop-color="#40ecf0"/><stop offset="0.333" stop-color="#40ecf0"/><stop offset="0.381" stop-color="#40f0b0"/><stop offset="0.473" stop-color="#58f060"/><stop offset="0.570" stop-color="#a8f040"/><stop offset="0.665" stop-color="#f0f040"/><stop offset="0.786" stop-color="#f0c840"/><stop offset="0.884" stop-color="#f0a040"/><stop offset="1" stop-color="#f07e47"/></linearGradient><linearGradient id="s69" gradientUnits="userSpaceOnUse" x1="0" x2="0" y1="455" y2="640"><stop offset="0.059" stop-color="#4848f2"/><stop offset="0.134" stop-color="#4848f2"/><stop offset="0.140" stop-color="#3c9cf0"/><stop offset="0.242" stop-color="#40c4f0"/><stop offset="0.293" stop-color="#40ecf0"/><stop offset="0.331" stop-color="#40ecf0"/><stop offset="0.380" stop-color="#40f0b0"/><stop offset="0.469" stop-color="#58f060"/><stop offset="0.563" stop-color="#a8f040"/><stop offset="0.661" stop-color="#f0f040"/><stop offset="0.778" stop-color="#f0c840"/><stop offset="0.874" stop-color="#f0a040"/><stop offset="0.991" stop-color="#f07c48"/><stop offset="1" stop-color="#f07b49"/></linearGradient><linearGradient id="s70" gradientUnits="userSpaceOnUse" x1="0" x2="0" y1="455" y2="640"><stop offset="0.059" stop-color="#4848f2"/><stop offset="0.134" stop-color="#4848f2"/><stop offset="0.140" stop-color="#3c9cf0"/><stop offset="0.243" stop-color="#40c4f0"/><stop offset="0.292" stop-color="#40ecf0"/><stop offset="0.330" stop-color="#40ecf0"/><stop offset="0.379" stop-color="#40f0b0"/><stop offset="0.464" stop-color="#58f060"/><stop offset="0.554" stop-color="#a8f040"/><stop offset="0.657" stop-color="#f0f040"/><stop offset="0.770" stop-color="#f0c840"/><stop offset="0.865" stop-color="#f0a040"/><stop offset="0.973" stop-color="#f07c48"/><stop offset="1" stop-color="#f0794a"/></linearGradient><linearGradient id="s71" gradientUnits="userSpaceOnUse" x1="0" x2="0" y1="455" y2="640"><stop offset="0.059" stop-color="#4848f2"/><stop offset="0.135" stop-color="#4848f2"/><stop offset="0.140" stop-color="#3c9cf0"/><stop offset="0.243" stop-color="#40c4f0"/><stop offset="0.291" stop-color="#40ecf0"/><stop offset="0.329" stop-color="#40ecf0"/><stop offset="0.377" stop-color="#40f0b0"/><stop offset="0.459" stop-color="#58f060"/><stop offset="0.545" stop-color="#a8f040"/><stop offset="0.652" stop-color="#f0f040"/><stop offset="0.763" stop-color="#f0c840"/><stop offset="0.856" stop-color="#f0a040"/><stop offset="0.956" stop-color="#f07c48"/><stop offset="1" stop-color="#f0784c"/></linearGradient><linearGradient id="s72" gradientUnits="userSpaceOnUse" x1="0" x2="0" y1="455" y2="640"><stop offset="0.059" stop-color="#4848f2"/><stop offset="0.135" stop-color="#4848f2"/><stop offset="0.140" stop-color="#3c9cf0"/><stop offset="0.243" stop-color="#40c4f0"/><stop offset="0.289" stop-color="#40ecf0"/><stop offset="0.327" stop-color="#40ecf0"/><stop offset="0.376" stop-color="#40f0b0"/><stop offset="0.455" stop-color="#58f060"/><stop offset="0.537" stop-color="#a8f040"/><stop offset="0.648" stop-color="#f0f040"/><stop offset="0.755" stop-color="#f0c840"/><stop offset="0.848" stop-color="#f0a040"/><stop offset="0.938" stop-color="#f07c48"/><stop offset="1" stop-color="#f0774d"/></linearGradient><linearGradient id="s73" gradientUnits="userSpaceOnUse" x1="0" x2="0" y1="455" y2="640"><stop offset="0.060" stop-color="#4848f2"/><stop offset="0.135" stop-color="#4848f2"/><stop offset="0.141" stop-color="#3c9cf0"/><stop offset="0.244" stop-color="#40c4f0"/><stop offset="0.289" stop-color="#40ecf0"/><stop offset="0.327" stop-color="#40ecf0"/><stop offset="0.375" stop-color="#40f0b0"/><stop offset="0.449" stop-color="#58f060"/><stop offset="0.527" stop-color="#a8f040"/><stop offset="0.644" stop-color="#f0f040"/><stop offset="0.748" stop-color="#f0c840"/><stop offset="0.839" stop-color="#f0a040"/><stop offset="0.928" stop-color="#f07c48"/><stop offset="1" stop-color="#f0754e"/></linearGradient><linearGradient id="s74" gradientUnits="userSpaceOnUse" x1="0" x2="0" y1="455" y2="640"><stop offset="0.060" stop-color="#4848f2"/><stop offset="0.136" stop-color="#4848f2"/><stop offset="0.141" stop-color="#3c9cf0"/><stop offset="0.244" stop-color="#40c4f0"/><stop offset="0.288" stop-color="#40ecf0"/><stop offset="0.326" stop-color="#40ecf0"/><stop offset="0.375" stop-color="#40f0b0"/><stop offset="0.443" stop-color="#58f060"/><stop offset="0.516" stop-color="#a8f040"/><stop offset="0.639" stop-color="#f0f040"/><stop offset="0.741" stop-color="#f0c840"/><stop offset="0.830" stop-color="#f0a040"/><stop offset="0.920" stop-color="#f07c48"/><stop offset="1" stop-color="#f0744f"/></linearGradient><linearGradient id="s75" gradientUnits="userSpaceOnUse" x1="0" x2="0" y1="455" y2="640"><stop offset="0.061" stop-color="#4848f2"/><stop offset="0.136" stop-color="#4848f2"/><stop offset="0.142" stop-color="#3c9cf0"/><stop offset="0.244" stop-color="#40c4f0"/><stop offset="0.288" stop-color="#40ecf0"/><stop offset="0.326" stop-color="#40ecf0"/><stop offset="0.374" stop-color="#40f0b0"/><stop offset="0.436" stop-color="#58f060"/><stop offset="0.506" stop-color="#a8f040"/><stop offset="0.635" stop-color="#f0f040"/><stop offset="0.733" stop-color="#f0c840"/><stop offset="0.821" stop-color="#f0a040"/><stop offset="0.912" stop-color="#f07c48"/><stop offset="1" stop-color="#f07350"/></linearGradient><linearGradient id="s76" gradientUnits="userSpaceOnUse" x1="0" x2="0" y1="455" y2="640"><stop offset="0.061" stop-color="#4848f2"/><stop offset="0.137" stop-color="#4848f2"/><stop offset="0.142" stop-color="#3c9cf0"/><stop offset="0.245" stop-color="#40c4f0"/><stop offset="0.287" stop-color="#40ecf0"/><stop offset="0.325" stop-color="#40ecf0"/><stop offset="0.374" stop-color="#40f0b0"/><stop offset="0.430" stop-color="#58f060"/><stop offset="0.496" stop-color="#a8f040"/><stop offset="0.631" stop-color="#f0f040"/><stop offset="0.726" stop-color="#f0c840"/><stop offset="0.812" stop-color="#f0a040"/><stop offset="0.904" stop-color="#f07c48"/><stop offset="1" stop-color="#f07251"/></linearGradient><linearGradient id="s77" gradientUnits="userSpaceOnUse" x1="0" x2="0" y1="455" y2="640"><stop offset="0.061" stop-color="#4848f2"/><stop offset="0.137" stop-color="#4848f2"/><stop offset="0.143" stop-color="#3c9cf0"/><stop offset="0.245" stop-color="#40c4f0"/><stop offset="0.287" stop-color="#40ecf0"/><stop offset="0.325" stop-color="#40ecf0"/><stop offset="0.374" stop-color="#40f0b0"/><stop offset="0.424" stop-color="#58f060"/><stop offset="0.485" stop-color="#a8f040"/><stop offset="0.626" stop-color="#f0f040"/><stop offset="0.718" stop-color="#f0c840"/><stop offset="0.804" stop-color="#f0a040"/><stop offset="0.896" stop-color="#f07c48"/><stop offset="1" stop-color="#f07053"/></linearGradient><linearGradient id="s78" gradientUnits="userSpaceOnUse" x1="0" x2="0" y1="455" y2="640"><stop offset="0.062" stop-color="#4848f2"/><stop offset="0.138" stop-color="#4848f2"/><stop offset="0.143" stop-color="#3c9cf0"/><stop offset="0.246" stop-color="#40c4f0"/><stop offset="0.287" stop-color="#40ecf0"/><stop offset="0.324" stop-color="#40ecf0"/><stop offset="0.373" stop-color="#40f0b0"/><stop offset="0.417" stop-color="#58f060"/><stop offset="0.475" stop-color="#a8f040"/><stop offset="0.622" stop-color="#f0f040"/><stop offset="0.711" stop-color="#f0c840"/><stop offset="0.795" stop-color="#f0a040"/><stop offset="0.888" stop-color="#f07c48"/><stop offset="1" stop-color="#f06f54"/></linearGradient><linearGradient id="s79" gradientUnits="userSpaceOnUse" x1="0" x2="0" y1="455" y2="640"><stop offset="0.062" stop-color="#4848f2"/><stop offset="0.138" stop-color="#4848f2"/><stop offset="0.143" stop-color="#3c9cf0"/><stop offset="0.246" stop-color="#40c4f0"/><stop offset="0.286" stop-color="#40ecf0"/><stop offset="0.324" stop-color="#40ecf0"/><stop offset="0.373" stop-color="#40f0b0"/><stop offset="0.411" stop-color="#58f060"/><stop offset="0.464" stop-color="#a8f040"/><stop offset="0.617" stop-color="#f0f040"/><stop offset="0.703" stop-color="#f0c840"/><stop offset="0.786" stop-color="#f0a040"/><stop offset="0.880" stop-color="#f07c48"/><stop offset="1" stop-color="#f06d56"/></linearGradient><linearGradient id="s80" gradientUnits="userSpaceOnUse" x1="0" x2="0" y1="455" y2="640"><stop offset="0.063" stop-color="#4848f2"/><stop offset="0.138" stop-color="#4848f2"/><stop offset="0.144" stop-color="#3c9cf0"/><stop offset="0.246" stop-color="#40c4f0"/><stop offset="0.286" stop-color="#40ecf0"/><stop offset="0.324" stop-color="#40ecf0"/><stop offset="0.372" stop-color="#40f0b0"/><stop offset="0.405" stop-color="#58f060"/><stop offset="0.454" stop-color="#a8f040"/><stop offset="0.613" stop-color="#f0f040"/><stop offset="0.696" stop-color="#f0c840"/><stop offset="0.777" stop-color="#f0a040"/><stop offset="0.872" stop-color="#f07c48"/><stop offset="1" stop-color="#f06a58"/></linearGradient><linearGradient id="s81" gradientUnits="userSpaceOnUse" x1="0" x2="0" y1="455" y2="640"><stop offset="0.063" stop-color="#4848f2"/><stop offset="0.139" stop-color="#4848f2"/><stop offset="0.144" stop-color="#3c9cf0"/><stop offset="0.247" stop-color="#40c4f0"/><stop offset="0.285" stop-color="#40ecf0"/><stop offset="0.323" stop-color="#40ecf0"/><stop offset="0.372" stop-color="#40f0b0"/><stop offset="0.398" stop-color="#58f060"/><stop offset="0.444" stop-color="#a8f040"/><stop offset="0.609" stop-color="#f0f040"/><stop offset="0.688" stop-color="#f0c840"/><stop offset="0.768" stop-color="#f0a040"/><stop offset="0.864" stop-color="#f07c48"/><stop offset="1" stop-color="#f0685a"/></linearGradient><linearGradient id="s82" gradientUnits="userSpaceOnUse" x1="0" x2="0" y1="455" y2="640"><stop offset="0.064" stop-color="#4848f2"/><stop offset="0.139" stop-color="#4848f2"/><stop offset="0.145" stop-color="#3c9cf0"/><stop offset="0.247" stop-color="#40c4f0"/><stop offset="0.285" stop-color="#40ecf0"/><stop offset="0.323" stop-color="#40ecf0"/><stop offset="0.371" stop-color="#40f0b0"/><stop offset="0.392" stop-color="#58f060"/><stop offset="0.433" stop-color="#a8f040"/><stop offset="0.604" stop-color="#f0f040"/><stop offset="0.681" stop-color="#f0c840"/><stop offset="0.760" stop-color="#f0a040"/><stop offset="0.856" stop-color="#f07c48"/><stop offset="1" stop-color="#f0655d"/></linearGradient><linearGradient id="s83" gradientUnits="userSpaceOnUse" x1="0" x2="0" y1="455" y2="640"><stop offset="0.064" stop-color="#4848f2"/><stop offset="0.140" stop-color="#4848f2"/><stop offset="0.145" stop-color="#3c9cf0"/><stop offset="0.248" stop-color="#40c4f0"/><stop offset="0.284" stop-color="#40ecf0"/><stop offset="0.322" stop-color="#40ecf0"/><stop offset="0.371" stop-color="#40f0b0"/><stop offset="0.386" stop-color="#58f060"/><stop offset="0.423" stop-color="#a8f040"/><stop offset="0.600" stop-color="#f0f040"/><stop offset="0.674" stop-color="#f0c840"/><stop offset="0.751" stop-color="#f0a040"/><stop offset="0.847" stop-color="#f07c48"/><stop offset="1" stop-color="#f06260"/></linearGradient><linearGradient id="s84" gradientUnits="userSpaceOnUse" x1="0" x2="0" y1="455" y2="640"><stop offset="0.064" stop-color="#4848f2"/><stop offset="0.140" stop-color="#4848f2"/><stop offset="0.145" stop-color="#3c9cf0"/><stop offset="0.248" stop-color="#40c4f0"/><stop offset="0.284" stop-color="#40ecf0"/><stop offset="0.322" stop-color="#40ecf0"/><stop offset="0.370" stop-color="#40f0b0"/><stop offset="0.380" stop-color="#58f060"/><stop offset="0.413" stop-color="#a8f040"/><stop offset="0.595" stop-color="#f0f040"/><stop offset="0.666" stop-color="#f0c840"/><stop offset="0.742" stop-color="#f0a040"/><stop offset="0.839" stop-color="#f07c48"/><stop offset="1" stop-color="#f05d64"/></linearGradient><linearGradient id="s85" gradientUnits="userSpaceOnUse" x1="0" x2="0" y1="455" y2="640"><stop offset="0.065" stop-color="#4848f2"/><stop offset="0.140" stop-color="#4848f2"/><stop offset="0.146" stop-color="#3c9cf0"/><stop offset="0.249" stop-color="#40c4f0"/><stop offset="0.283" stop-color="#40ecf0"/><stop offset="0.321" stop-color="#40ecf0"/><stop offset="0.370" stop-color="#40f0b0"/><stop offset="0.376" stop-color="#58f060"/><stop offset="0.408" stop-color="#a8f040"/><stop offset="0.592" stop-color="#f0f040"/><stop offset="0.664" stop-color="#f0c840"/><stop offset="0.742" stop-color="#f0a040"/><stop offset="0.838" stop-color="#f07c48"/><stop offset="1" stop-color="#f05b66"/></linearGradient><linearGradient id="s86" gradientUnits="userSpaceOnUse" x1="0" x2="0" y1="455" y2="640"><stop offset="0.065" stop-color="#4848f2"/><stop offset="0.141" stop-color="#4848f2"/><stop offset="0.146" stop-color="#3c9cf0"/><stop offset="0.249" stop-color="#40c4f0"/><stop offset="0.283" stop-color="#40ecf0"/><stop offset="0.320" stop-color="#40ecf0"/><stop offset="0.369" stop-color="#40f0b0"/><stop offset="0.373" stop-color="#58f060"/><stop offset="0.406" stop-color="#a8f040"/><stop offset="0.590" stop-color="#f0f040"/><stop offset="0.663" stop-color="#f0c840"/><stop offset="0.743" stop-color="#f0a040"/><stop offset="0.839" stop-color="#f07c48"/><stop offset="1" stop-color="#f05968"/></linearGradient><linearGradient id="s87" gradientUnits="userSpaceOnUse" x1="0" x2="0" y1="455" y2="640"><stop offset="0.066" stop-color="#4848f2"/><stop offset="0.141" stop-color="#4848f2"/><stop offset="0.147" stop-color="#3c9cf0"/><stop offset="0.249" stop-color="#40c4f0"/><stop offset="0.282" stop-color="#40ecf0"/><stop offset="0.320" stop-color="#40ecf0"/><stop offset="0.368" stop-color="#40f0b0"/><stop offset="0.371" stop-color="#58f060"/><stop offset="0.403" stop-color="#a8f040"/><stop offset="0.587" stop-color="#f0f040"/><stop offset="0.661" stop-color="#f0c840"/><stop offset="0.744" stop-color="#f0a040"/><stop offset="0.840" stop-color="#f07c48"/><stop offset="1" stop-color="#f0566b"/></linearGradient><linearGradient id="s88" gradientUnits="userSpaceOnUse" x1="0" x2="0" y1="455" y2="640"><stop offset="0.066" stop-color="#4848f2"/><stop offset="0.142" stop-color="#4848f2"/><stop offset="0.147" stop-color="#3c9cf0"/><stop offset="0.250" stop-color="#40c4f0"/><stop offset="0.281" stop-color="#40ecf0"/><stop offset="0.319" stop-color="#40ecf0"/><stop offset="0.368" stop-color="#40f0b0"/><stop offset="0.370" stop-color="#58f060"/><stop offset="0.400" stop-color="#a8f040"/><stop offset="0.584" stop-color="#f0f040"/><stop offset="0.660" stop-color="#f0c840"/><stop offset="0.745" stop-color="#f0a040"/><stop offset="0.841" stop-color="#f07c48"/><stop offset="1" stop-color="#f0536d"/></linearGradient><linearGradient id="s89" gradientUnits="userSpaceOnUse" x1="0" x2="0" y1="455" y2="640"><stop offset="0.066" stop-color="#4848f2"/><stop offset="0.142" stop-color="#4848f2"/><stop offset="0.148" stop-color="#3c9cf0"/><stop offset="0.250" stop-color="#40c4f0"/><stop offset="0.281" stop-color="#40ecf0"/><stop offset="0.318" stop-color="#40ecf0"/><stop offset="0.367" stop-color="#40f0b0"/><stop offset="0.370" stop-color="#58f060"/><stop offset="0.397" stop-color="#a8f040"/><stop offset="0.582" stop-color="#f0f040"/><stop offset="0.659" stop-color="#f0c840"/><stop offset="0.746" stop-color="#f0a040"/><stop offset="0.842" stop-color="#f07c48"/><stop offset="0.996" stop-color="#f05070"/><stop offset="1" stop-color="#f05070"/></linearGradient><linearGradient id="s90" gradientUnits="userSpaceOnUse" x1="0" x2="0" y1="455" y2="640"><stop offset="0.067" stop-color="#4848f2"/><stop offset="0.143" stop-color="#4848f2"/><stop offset="0.148" stop-color="#3c9cf0"/><stop offset="0.251" stop-color="#40c4f0"/><stop offset="0.280" stop-color="#40ecf0"/><stop offset="0.318" stop-color="#40ecf0"/><stop offset="0.366" stop-color="#40f0b0"/><stop offset="0.369" stop-color="#58f060"/><stop offset="0.394" stop-color="#a8f040"/><stop offset="0.579" stop-color="#f0f040"/><stop offset="0.658" stop-color="#f0c840"/><stop offset="0.748" stop-color="#f0a040"/><stop offset="0.842" stop-color="#f07c48"/><stop offset="0.982" stop-color="#f05070"/><stop offset="1" stop-color="#f05070"/></linearGradient><linearGradient id="s91" gradientUnits="userSpaceOnUse" x1="0" x2="0" y1="455" y2="640"><stop offset="0.067" stop-color="#4848f2"/><stop offset="0.143" stop-color="#4848f2"/><stop offset="0.148" stop-color="#3c9cf0"/><stop offset="0.251" stop-color="#40c4f0"/><stop offset="0.279" stop-color="#40ecf0"/><stop offset="0.317" stop-color="#40ecf0"/><stop offset="0.366" stop-color="#40f0b0"/><stop offset="0.368" stop-color="#58f060"/><stop offset="0.391" stop-color="#a8f040"/><stop offset="0.576" stop-color="#f0f040"/><stop offset="0.657" stop-color="#f0c840"/><stop offset="0.749" stop-color="#f0a040"/><stop offset="0.843" stop-color="#f07c48"/><stop offset="0.968" stop-color="#f05070"/><stop offset="1" stop-color="#f05070"/></linearGradient><linearGradient id="s92" gradientUnits="userSpaceOnUse" x1="0" x2="0" y1="455" y2="640"><stop offset="0.068" stop-color="#4848f2"/><stop offset="0.143" stop-color="#4848f2"/><stop offset="0.149" stop-color="#3c9cf0"/><stop offset="0.251" stop-color="#40c4f0"/><stop offset="0.278" stop-color="#40ecf0"/><stop offset="0.316" stop-color="#40ecf0"/><stop offset="0.365" stop-color="#40f0b0"/><stop offset="0.368" stop-color="#58f060"/><stop offset="0.388" stop-color="#a8f040"/><stop offset="0.573" stop-color="#f0f040"/><stop offset="0.655" stop-color="#f0c840"/><stop offset="0.750" stop-color="#f0a040"/><stop offset="0.844" stop-color="#f07c48"/><stop offset="0.954" stop-color="#f05070"/><stop offset="1" stop-color="#f05070"/></linearGradient><linearGradient id="s93" gradientUnits="userSpaceOnUse" x1="0" x2="0" y1="455" y2="640"><stop offset="0.068" stop-color="#4848f2"/><stop offset="0.144" stop-color="#4848f2"/><stop offset="0.149" stop-color="#3c9cf0"/><stop offset="0.252" stop-color="#40c4f0"/><stop offset="0.278" stop-color="#40ecf0"/><stop offset="0.316" stop-color="#40ecf0"/><stop offset="0.364" stop-color="#40f0b0"/><stop offset="0.367" stop-color="#58f060"/><stop offset="0.385" stop-color="#a8f040"/><stop offset="0.571" stop-color="#f0f040"/><stop offset="0.654" stop-color="#f0c840"/><stop offset="0.751" stop-color="#f0a040"/><stop offset="0.845" stop-color="#f07c48"/><stop offset="0.952" stop-color="#f05070"/><stop offset="1" stop-color="#f05070"/></linearGradient><linearGradient id="s94" gradientUnits="userSpaceOnUse" x1="0" x2="0" y1="455" y2="640"><stop offset="0.069" stop-color="#4848f2"/><stop offset="0.144" stop-color="#4848f2"/><stop offset="0.150" stop-color="#3c9cf0"/><stop offset="0.252" stop-color="#40c4f0"/><stop offset="0.277" stop-color="#40ecf0"/><stop offset="0.315" stop-color="#40ecf0"/><stop offset="0.364" stop-color="#40f0b0"/><stop offset="0.366" stop-color="#58f060"/><stop offset="0.383" stop-color="#a8f040"/><stop offset="0.568" stop-color="#f0f040"/><stop offset="0.653" stop-color="#f0c840"/><stop offset="0.752" stop-color="#f0a040"/><stop offset="0.845" stop-color="#f07c48"/><stop offset="0.952" stop-color="#f05070"/><stop offset="1" stop-color="#f05070"/></linearGradient><linearGradient id="s95" gradientUnits="userSpaceOnUse" x1="0" x2="0" y1="455" y2="640"><stop offset="0.069" stop-color="#4848f2"/><stop offset="0.145" stop-color="#4848f2"/><stop offset="0.150" stop-color="#3c9cf0"/><stop offset="0.253" stop-color="#40c4f0"/><stop offset="0.276" stop-color="#40ecf0"/><stop offset="0.314" stop-color="#40ecf0"/><stop offset="0.363" stop-color="#40f0b0"/><stop offset="0.366" stop-color="#58f060"/><stop offset="0.380" stop-color="#a8f040"/><stop offset="0.565" stop-color="#f0f040"/><stop offset="0.652" stop-color="#f0c840"/><stop offset="0.754" stop-color="#f0a040"/><stop offset="0.846" stop-color="#f07c48"/><stop offset="0.953" stop-color="#f05070"/><stop offset="1" stop-color="#f05070"/></linearGradient><linearGradient id="s96" gradientUnits="userSpaceOnUse" x1="0" x2="0" y1="455" y2="640"><stop offset="0.069" stop-color="#4848f2"/><stop offset="0.145" stop-color="#4848f2"/><stop offset="0.150" stop-color="#3c9cf0"/><stop offset="0.253" stop-color="#40c4f0"/><stop offset="0.276" stop-color="#40ecf0"/><stop offset="0.314" stop-color="#40ecf0"/><stop offset="0.362" stop-color="#40f0b0"/><stop offset="0.365" stop-color="#58f060"/><stop offset="0.377" stop-color="#a8f040"/><stop offset="0.563" stop-color="#f0f040"/><stop offset="0.651" stop-color="#f0c840"/><stop offset="0.755" stop-color="#f0a040"/><stop offset="0.847" stop-color="#f07c48"/><stop offset="0.953" stop-color="#f05070"/><stop offset="1" stop-color="#f05070"/></linearGradient><linearGradient id="s97" gradientUnits="userSpaceOnUse" x1="0" x2="0" y1="455" y2="640"><stop offset="0.070" stop-color="#4848f2"/><stop offset="0.145" stop-color="#4848f2"/><stop offset="0.151" stop-color="#3c9cf0"/><stop offset="0.254" stop-color="#40c4f0"/><stop offset="0.275" stop-color="#40ecf0"/><stop offset="0.313" stop-color="#40ecf0"/><stop offset="0.362" stop-color="#40f0b0"/><stop offset="0.364" stop-color="#58f060"/><stop offset="0.374" stop-color="#a8f040"/><stop offset="0.560" stop-color="#f0f040"/><stop offset="0.649" stop-color="#f0c840"/><stop offset="0.756" stop-color="#f0a040"/><stop offset="0.848" stop-color="#f07c48"/><stop offset="0.954" stop-color="#f05070"/><stop offset="1" stop-color="#f05070"/></linearGradient><linearGradient id="s98" gradientUnits="userSpaceOnUse" x1="0" x2="0" y1="455" y2="640"><stop offset="0.070" stop-color="#4848f2"/><stop offset="0.146" stop-color="#4848f2"/><stop offset="0.151" stop-color="#3c9cf0"/><stop offset="0.254" stop-color="#40c4f0"/><stop offset="0.274" stop-color="#40ecf0"/><stop offset="0.312" stop-color="#40ecf0"/><stop offset="0.361" stop-color="#40f0b0"/><stop offset="0.364" stop-color="#58f060"/><stop offset="0.371" stop-color="#a8f040"/><stop offset="0.557" stop-color="#f0f040"/><stop offset="0.648" stop-color="#f0c840"/><stop offset="0.757" stop-color="#f0a040"/><stop offset="0.849" stop-color="#f07c48"/><stop offset="0.954" stop-color="#f05070"/><stop offset="1" stop-color="#f05070"/></linearGradient><linearGradient id="s99" gradientUnits="userSpaceOnUse" x1="0" x2="0" y1="455" y2="640"><stop offset="0.071" stop-color="#4848f2"/><stop offset="0.146" stop-color="#4848f2"/><stop offset="0.152" stop-color="#3c9cf0"/><stop offset="0.255" stop-color="#40c4f0"/><stop offset="0.274" stop-color="#40ecf0"/><stop offset="0.312" stop-color="#40ecf0"/><stop offset="0.360" stop-color="#40f0b0"/><stop offset="0.363" stop-color="#58f060"/><stop offset="0.368" stop-color="#a8f040"/><stop offset="0.555" stop-color="#f0f040"/><stop offset="0.647" stop-color="#f0c840"/><stop offset="0.758" stop-color="#f0a040"/><stop offset="0.854" stop-color="#f07c48"/><stop offset="0.955" stop-color="#f05070"/><stop offset="1" stop-color="#f05070"/></linearGradient><linearGradient id="s100" gradientUnits="userSpaceOnUse" x1="0" x2="0" y1="455" y2="640"><stop offset="0.071" stop-color="#4848f2"/><stop offset="0.147" stop-color="#4848f2"/><stop offset="0.152" stop-color="#3c9cf0"/><stop offset="0.255" stop-color="#40c4f0"/><stop offset="0.273" stop-color="#40ecf0"/><stop offset="0.311" stop-color="#40ecf0"/><stop offset="0.360" stop-color="#40f0b0"/><stop offset="0.362" stop-color="#58f060"/><stop offset="0.365" stop-color="#a8f040"/><stop offset="0.552" stop-color="#f0f040"/><stop offset="0.646" stop-color="#f0c840"/><stop offset="0.760" stop-color="#f0a040"/><stop offset="0.860" stop-color="#f07c48"/><stop offset="0.956" stop-color="#f05070"/><stop offset="1" stop-color="#f05070"/></linearGradient><linearGradient id="s101" gradientUnits="userSpaceOnUse" x1="0" x2="0" y1="455" y2="640"><stop offset="0.072" stop-color="#4848f2"/><stop offset="0.148" stop-color="#4848f2"/><stop offset="0.153" stop-color="#3c9cf0"/><stop offset="0.256" stop-color="#40c4f0"/><stop offset="0.273" stop-color="#40ecf0"/><stop offset="0.311" stop-color="#40ecf0"/><stop offset="0.360" stop-color="#40f0b0"/><stop offset="0.362" stop-color="#58f060"/><stop offset="0.365" stop-color="#a8f040"/><stop offset="0.549" stop-color="#f0f040"/><stop offset="0.645" stop-color="#f0c840"/><stop offset="0.761" stop-color="#f0a040"/><stop offset="0.866" stop-color="#f07c48"/><stop offset="0.956" stop-color="#f05070"/><stop offset="1" stop-color="#f05070"/></linearGradient><linearGradient id="s102" gradientUnits="userSpaceOnUse" x1="0" x2="0" y1="455" y2="640"><stop offset="0.072" stop-color="#4848f2"/><stop offset="0.148" stop-color="#4848f2"/><stop offset="0.154" stop-color="#3c9cf0"/><stop offset="0.256" stop-color="#40c4f0"/><stop offset="0.274" stop-color="#40ecf0"/><stop offset="0.311" stop-color="#40ecf0"/><stop offset="0.360" stop-color="#40f0b0"/><stop offset="0.363" stop-color="#58f060"/><stop offset="0.365" stop-color="#a8f040"/><stop offset="0.546" stop-color="#f0f040"/><stop offset="0.643" stop-color="#f0c840"/><stop offset="0.762" stop-color="#f0a040"/><stop offset="0.872" stop-color="#f07c48"/><stop offset="0.957" stop-color="#f05070"/><stop offset="1" stop-color="#f05070"/></linearGradient><linearGradient id="s103" gradientUnits="userSpaceOnUse" x1="0" x2="0" y1="455" y2="640"><stop offset="0.073" stop-color="#4848f2"/><stop offset="0.149" stop-color="#4848f2"/><stop offset="0.154" stop-color="#3c9cf0"/><stop offset="0.257" stop-color="#40c4f0"/><stop offset="0.274" stop-color="#40ecf0"/><stop offset="0.312" stop-color="#40ecf0"/><stop offset="0.360" stop-color="#40f0b0"/><stop offset="0.363" stop-color="#58f060"/><stop offset="0.366" stop-color="#a8f040"/><stop offset="0.545" stop-color="#f0f040"/><stop offset="0.643" stop-color="#f0c840"/><stop offset="0.764" stop-color="#f0a040"/><stop offset="0.878" stop-color="#f07c48"/><stop offset="0.969" stop-color="#f05070"/><stop offset="1" stop-color="#f05070"/></linearGradient><linearGradient id="s104" gradientUnits="userSpaceOnUse" x1="0" x2="0" y1="455" y2="640"><stop offset="0.074" stop-color="#4848f2"/><stop offset="0.149" stop-color="#4848f2"/><stop offset="0.155" stop-color="#3c9cf0"/><stop offset="0.257" stop-color="#40c4f0"/><stop offset="0.274" stop-color="#40ecf0"/><stop offset="0.312" stop-color="#40ecf0"/><stop offset="0.361" stop-color="#40f0b0"/><stop offset="0.363" stop-color="#58f060"/><stop offset="0.366" stop-color="#a8f040"/><stop offset="0.543" stop-color="#f0f040"/><stop offset="0.642" stop-color="#f0c840"/><stop offset="0.766" stop-color="#f0a040"/><stop offset="0.885" stop-color="#f07c48"/><stop offset="0.983" stop-color="#f05070"/><stop offset="1" stop-color="#f05070"/></linearGradient><linearGradient id="s105" gradientUnits="userSpaceOnUse" x1="0" x2="0" y1="455" y2="640"><stop offset="0.074" stop-color="#4848f2"/><stop offset="0.150" stop-color="#4848f2"/><stop offset="0.155" stop-color="#3c9cf0"/><stop offset="0.258" stop-color="#40c4f0"/><stop offset="0.275" stop-color="#40ecf0"/><stop offset="0.312" stop-color="#40ecf0"/><stop offset="0.361" stop-color="#40f0b0"/><stop offset="0.364" stop-color="#58f060"/><stop offset="0.366" stop-color="#a8f040"/><stop offset="0.541" stop-color="#f0f040"/><stop offset="0.642" stop-color="#f0c840"/><stop offset="0.768" stop-color="#f0a040"/><stop offset="0.891" stop-color="#f07c48"/><stop offset="0.997" stop-color="#f05070"/><stop offset="1" stop-color="#f05070"/></linearGradient><linearGradient id="s106" gradientUnits="userSpaceOnUse" x1="0" x2="0" y1="455" y2="640"><stop offset="0.075" stop-color="#4848f2"/><stop offset="0.150" stop-color="#4848f2"/><stop offset="0.156" stop-color="#3c9cf0"/><stop offset="0.259" stop-color="#40c4f0"/><stop offset="0.275" stop-color="#40ecf0"/><stop offset="0.313" stop-color="#40ecf0"/><stop offset="0.361" stop-color="#40f0b0"/><stop offset="0.364" stop-color="#58f060"/><stop offset="0.367" stop-color="#a8f040"/><stop offset="0.540" stop-color="#f0f040"/><stop offset="0.641" stop-color="#f0c840"/><stop offset="0.770" stop-color="#f0a040"/><stop offset="0.897" stop-color="#f07c48"/><stop offset="1" stop-color="#f0556c"/></linearGradient><linearGradient id="s107" gradientUnits="userSpaceOnUse" x1="0" x2="0" y1="455" y2="640"><stop offset="0.075" stop-color="#4848f2"/><stop offset="0.151" stop-color="#4848f2"/><stop offset="0.156" stop-color="#3c9cf0"/><stop offset="0.259" stop-color="#40c4f0"/><stop offset="0.275" stop-color="#40ecf0"/><stop offset="0.313" stop-color="#40ecf0"/><stop offset="0.362" stop-color="#40f0b0"/><stop offset="0.364" stop-color="#58f060"/><stop offset="0.367" stop-color="#a8f040"/><stop offset="0.538" stop-color="#f0f040"/><stop offset="0.641" stop-color="#f0c840"/><stop offset="0.773" stop-color="#f0a040"/><stop offset="0.903" stop-color="#f07c48"/><stop offset="1" stop-color="#f05967"/></linearGradient><linearGradient id="s108" gradientUnits="userSpaceOnUse" x1="0" x2="0" y1="455" y2="640"><stop offset="0.076" stop-color="#4848f2"/><stop offset="0.152" stop-color="#4848f2"/><stop offset="0.157" stop-color="#3c9cf0"/><stop offset="0.260" stop-color="#40c4f0"/><stop offset="0.276" stop-color="#40ecf0"/><stop offset="0.313" stop-color="#40ecf0"/><stop offset="0.362" stop-color="#40f0b0"/><stop offset="0.365" stop-color="#58f060"/><stop offset="0.368" stop-color="#a8f040"/><stop offset="0.537" stop-color="#f0f040"/><stop offset="0.640" stop-color="#f0c840"/><stop offset="0.775" stop-color="#f0a040"/><stop offset="0.909" stop-color="#f07c48"/><stop offset="1" stop-color="#f05e64"/></linearGradient><linearGradient id="s109" gradientUnits="userSpaceOnUse" x1="0" x2="0" y1="455" y2="640"><stop offset="0.077" stop-color="#4848f2"/><stop offset="0.152" stop-color="#4848f2"/><stop offset="0.158" stop-color="#3c9cf0"/><stop offset="0.260" stop-color="#40c4f0"/><stop offset="0.276" stop-color="#40ecf0"/><stop offset="0.314" stop-color="#40ecf0"/><stop offset="0.362" stop-color="#40f0b0"/><stop offset="0.365" stop-color="#58f060"/><stop offset="0.368" stop-color="#a8f040"/><stop offset="0.535" stop-color="#f0f040"/><stop offset="0.640" stop-color="#f0c840"/><stop offset="0.777" stop-color="#f0a040"/><stop offset="0.915" stop-color="#f07c48"/><stop offset="1" stop-color="#f0655d"/></linearGradient><linearGradient id="s110" gradientUnits="userSpaceOnUse" x1="0" x2="0" y1="455" y2="640"><stop offset="0.077" stop-color="#4848f2"/><stop offset="0.153" stop-color="#4848f2"/><stop offset="0.158" stop-color="#3c9cf0"/><stop offset="0.261" stop-color="#40c4f0"/><stop offset="0.276" stop-color="#40ecf0"/><stop offset="0.314" stop-color="#40ecf0"/><stop offset="0.363" stop-color="#40f0b0"/><stop offset="0.365" stop-color="#58f060"/><stop offset="0.368" stop-color="#a8f040"/><stop offset="0.533" stop-color="#f0f040"/><stop offset="0.639" stop-color="#f0c840"/><stop offset="0.779" stop-color="#f0a040"/><stop offset="0.922" stop-color="#f07c48"/><stop offset="1" stop-color="#f06a58"/></linearGradient><linearGradient id="s111" gradientUnits="userSpaceOnUse" x1="0" x2="0" y1="455" y2="640"><stop offset="0.078" stop-color="#4848f2"/><stop offset="0.153" stop-color="#4848f2"/><stop offset="0.159" stop-color="#3c9cf0"/><stop offset="0.261" stop-color="#40c4f0"/><stop offset="0.277" stop-color="#40ecf0"/><stop offset="0.314" stop-color="#40ecf0"/><stop offset="0.363" stop-color="#40f0b0"/><stop offset="0.366" stop-color="#58f060"/><stop offset="0.369" stop-color="#a8f040"/><stop offset="0.532" stop-color="#f0f040"/><stop offset="0.638" stop-color="#f0c840"/><stop offset="0.781" stop-color="#f0a040"/><stop offset="0.928" stop-color="#f07c48"/><stop offset="1" stop-color="#f06e55"/></linearGradient><linearGradient id="s112" gradientUnits="userSpaceOnUse" x1="0" x2="0" y1="455" y2="640"><stop offset="0.078" stop-color="#4848f2"/><stop offset="0.154" stop-color="#4848f2"/><stop offset="0.159" stop-color="#3c9cf0"/><stop offset="0.262" stop-color="#40c4f0"/><stop offset="0.277" stop-color="#40ecf0"/><stop offset="0.315" stop-color="#40ecf0"/><stop offset="0.363" stop-color="#40f0b0"/><stop offset="0.366" stop-color="#58f060"/><stop offset="0.369" stop-color="#a8f040"/><stop offset="0.530" stop-color="#f0f040"/><stop offset="0.638" stop-color="#f0c840"/><stop offset="0.783" stop-color="#f0a040"/><stop offset="0.934" stop-color="#f07c48"/><stop offset="1" stop-color="#f07152"/></linearGradient><linearGradient id="s113" gradientUnits="userSpaceOnUse" x1="0" x2="0" y1="455" y2="640"><stop offset="0.079" stop-color="#4848f2"/><stop offset="0.155" stop-color="#4848f2"/><stop offset="0.160" stop-color="#3c9cf0"/><stop offset="0.263" stop-color="#40c4f0"/><stop offset="0.277" stop-color="#40ecf0"/><stop offset="0.315" stop-color="#40ecf0"/><stop offset="0.364" stop-color="#40f0b0"/><stop offset="0.366" stop-color="#58f060"/><stop offset="0.369" stop-color="#a8f040"/><stop offset="0.528" stop-color="#f0f040"/><stop offset="0.637" stop-color="#f0c840"/><stop offset="0.786" stop-color="#f0a040"/><stop offset="0.937" stop-color="#f07c48"/><stop offset="1" stop-color="#f07351"/></linearGradient><linearGradient id="s114" gradientUnits="userSpaceOnUse" x1="0" x2="0" y1="455" y2="640"><stop offset="0.080" stop-color="#4848f2"/><stop offset="0.155" stop-color="#4848f2"/><stop offset="0.161" stop-color="#3c9cf0"/><stop offset="0.263" stop-color="#40c4f0"/><stop offset="0.278" stop-color="#40ecf0"/><stop offset="0.315" stop-color="#40ecf0"/><stop offset="0.364" stop-color="#40f0b0"/><stop offset="0.367" stop-color="#58f060"/><stop offset="0.370" stop-color="#a8f040"/><stop offset="0.527" stop-color="#f0f040"/><stop offset="0.637" stop-color="#f0c840"/><stop offset="0.788" stop-color="#f0a040"/><stop offset="0.939" stop-color="#f07c48"/><stop offset="1" stop-color="#f0744f"/></linearGradient><linearGradient id="s115" gradientUnits="userSpaceOnUse" x1="0" x2="0" y1="455" y2="640"><stop offset="0.080" stop-color="#4848f2"/><stop offset="0.156" stop-color="#4848f2"/><stop offset="0.161" stop-color="#3c9cf0"/><stop offset="0.264" stop-color="#40c4f0"/><stop offset="0.278" stop-color="#40ecf0"/><stop offset="0.316" stop-color="#40ecf0"/><stop offset="0.364" stop-color="#40f0b0"/><stop offset="0.367" stop-color="#58f060"/><stop offset="0.370" stop-color="#a8f040"/><stop offset="0.525" stop-color="#f0f040"/><stop offset="0.636" stop-color="#f0c840"/><stop offset="0.790" stop-color="#f0a040"/><stop offset="0.940" stop-color="#f07c48"/><stop offset="1" stop-color="#f0754e"/></linearGradient><linearGradient id="s116" gradientUnits="userSpaceOnUse" x1="0" x2="0" y1="455" y2="640"><stop offset="0.081" stop-color="#4848f2"/><stop offset="0.156" stop-color="#4848f2"/><stop offset="0.162" stop-color="#3c9cf0"/><stop offset="0.265" stop-color="#40c4f0"/><stop offset="0.278" stop-color="#40ecf0"/><stop offset="0.316" stop-color="#40ecf0"/><stop offset="0.365" stop-color="#40f0b0"/><stop offset="0.368" stop-color="#58f060"/><stop offset="0.370" stop-color="#a8f040"/><stop offset="0.524" stop-color="#f0f040"/><stop offset="0.636" stop-color="#f0c840"/><stop offset="0.792" stop-color="#f0a040"/><stop offset="0.942" stop-color="#f07c48"/><stop offset="1" stop-color="#f0764e"/></linearGradient><linearGradient id="s117" gradientUnits="userSpaceOnUse" x1="0" x2="0" y1="455" y2="640"><stop offset="0.081" stop-color="#4848f2"/><stop offset="0.157" stop-color="#4848f2"/><stop offset="0.162" stop-color="#3c9cf0"/><stop offset="0.265" stop-color="#40c4f0"/><stop offset="0.279" stop-color="#40ecf0"/><stop offset="0.316" stop-color="#40ecf0"/><stop offset="0.365" stop-color="#40f0b0"/><stop offset="0.368" stop-color="#58f060"/><stop offset="0.371" stop-color="#a8f040"/><stop offset="0.522" stop-color="#f0f040"/><stop offset="0.635" stop-color="#f0c840"/><stop offset="0.794" stop-color="#f0a040"/><stop offset="0.944" stop-color="#f07c48"/><stop offset="1" stop-color="#f0764d"/></linearGradient><linearGradient id="s118" gradientUnits="userSpaceOnUse" x1="0" x2="0" y1="455" y2="640"><stop offset="0.082" stop-color="#4848f2"/><stop offset="0.158" stop-color="#4848f2"/><stop offset="0.163" stop-color="#3c9cf0"/><stop offset="0.266" stop-color="#40c4f0"/><stop offset="0.279" stop-color="#40ecf0"/><stop offset="0.317" stop-color="#40ecf0"/><stop offset="0.365" stop-color="#40f0b0"/><stop offset="0.368" stop-color="#58f060"/><stop offset="0.371" stop-color="#a8f040"/><stop offset="0.520" stop-color="#f0f040"/><stop offset="0.635" stop-color="#f0c840"/><stop offset="0.796" stop-color="#f0a040"/><stop offset="0.946" stop-color="#f07c48"/><stop offset="1" stop-color="#f0774c"/></linearGradient><linearGradient id="s119" gradientUnits="userSpaceOnUse" x1="0" x2="0" y1="455" y2="640"><stop offset="0.083" stop-color="#4848f2"/><stop offset="0.158" stop-color="#4848f2"/><stop offset="0.164" stop-color="#3c9cf0"/><stop offset="0.266" stop-color="#40c4f0"/><stop offset="0.279" stop-color="#40ecf0"/><stop offset="0.317" stop-color="#40ecf0"/><stop offset="0.366" stop-color="#40f0b0"/><stop offset="0.369" stop-color="#58f060"/><stop offset="0.371" stop-color="#a8f040"/><stop offset="0.519" stop-color="#f0f040"/><stop offset="0.634" stop-color="#f0c840"/><stop offset="0.799" stop-color="#f0a040"/><stop offset="0.948" stop-color="#f07c48"/><stop offset="1" stop-color="#f0774c"/></linearGradient><linearGradient id="s120" gradientUnits="userSpaceOnUse" x1="0" x2="0" y1="455" y2="640"><stop offset="0.083" stop-color="#4848f2"/><stop offset="0.159" stop-color="#4848f2"/><stop offset="0.164" stop-color="#3c9cf0"/><stop offset="0.267" stop-color="#40c4f0"/><stop offset="0.280" stop-color="#40ecf0"/><stop offset="0.318" stop-color="#40ecf0"/><stop offset="0.366" stop-color="#40f0b0"/><stop offset="0.369" stop-color="#58f060"/><stop offset="0.372" stop-color="#a8f040"/><stop offset="0.517" stop-color="#f0f040"/><stop offset="0.634" stop-color="#f0c840"/><stop offset="0.801" stop-color="#f0a040"/><stop offset="0.950" stop-color="#f07c48"/><stop offset="1" stop-color="#f0774c"/></linearGradient><linearGradient id="s121" gradientUnits="userSpaceOnUse" x1="0" x2="0" y1="455" y2="640"><stop offset="0.084" stop-color="#4848f2"/><stop offset="0.160" stop-color="#4848f2"/><stop offset="0.165" stop-color="#3c9cf0"/><stop offset="0.268" stop-color="#40c4f0"/><stop offset="0.280" stop-color="#40ecf0"/><stop offset="0.318" stop-color="#40ecf0"/><stop offset="0.366" stop-color="#40f0b0"/><stop offset="0.369" stop-color="#58f060"/><stop offset="0.372" stop-color="#a8f040"/><stop offset="0.515" stop-color="#f0f040"/><stop offset="0.633" stop-color="#f0c840"/><stop offset="0.803" stop-color="#f0a040"/><stop offset="0.952" stop-color="#f07c48"/><stop offset="1" stop-color="#f0784c"/></linearGradient><linearGradient id="s122" gradientUnits="userSpaceOnUse" x1="0" x2="0" y1="455" y2="640"><stop offset="0.085" stop-color="#4848f2"/><stop offset="0.160" stop-color="#4848f2"/><stop offset="0.166" stop-color="#3c9cf0"/><stop offset="0.268" stop-color="#40c4f0"/><stop offset="0.280" stop-color="#40ecf0"/><stop offset="0.318" stop-color="#40ecf0"/><stop offset="0.367" stop-color="#40f0b0"/><stop offset="0.370" stop-color="#58f060"/><stop offset="0.372" stop-color="#a8f040"/><stop offset="0.514" stop-color="#f0f040"/><stop offset="0.633" stop-color="#f0c840"/><stop offset="0.805" stop-color="#f0a040"/><stop offset="0.954" stop-color="#f07c48"/><stop offset="1" stop-color="#f0784c"/></linearGradient><linearGradient id="s123" gradientUnits="userSpaceOnUse" x1="0" x2="0" y1="455" y2="640"><stop offset="0.085" stop-color="#4848f2"/><stop offset="0.161" stop-color="#4848f2"/><stop offset="0.166" stop-color="#3c9cf0"/><stop offset="0.269" stop-color="#40c4f0"/><stop offset="0.281" stop-color="#40ecf0"/><stop offset="0.319" stop-color="#40ecf0"/><stop offset="0.367" stop-color="#40f0b0"/><stop offset="0.370" stop-color="#58f060"/><stop offset="0.373" stop-color="#a8f040"/><stop offset="0.514" stop-color="#f0f040"/><stop offset="0.632" stop-color="#f0c840"/><stop offset="0.803" stop-color="#f0a040"/><stop offset="0.956" stop-color="#f07c48"/><stop offset="1" stop-color="#f0784c"/></linearGradient><linearGradient id="s124" gradientUnits="userSpaceOnUse" x1="0" x2="0" y1="455" y2="640"><stop offset="0.086" stop-color="#4848f2"/><stop offset="0.162" stop-color="#4848f2"/><stop offset="0.167" stop-color="#3c9cf0"/><stop offset="0.270" stop-color="#40c4f0"/><stop offset="0.281" stop-color="#40ecf0"/><stop offset="0.319" stop-color="#40ecf0"/><stop offset="0.368" stop-color="#40f0b0"/><stop offset="0.370" stop-color="#58f060"/><stop offset="0.373" stop-color="#a8f040"/><stop offset="0.514" stop-color="#f0f040"/><stop offset="0.631" stop-color="#f0c840"/><stop offset="0.800" stop-color="#f0a040"/><stop offset="0.957" stop-color="#f07c48"/><stop offset="1" stop-color="#f0784c"/></linearGradient><linearGradient id="s125" gradientUnits="userSpaceOnUse" x1="0" x2="0" y1="455" y2="640"><stop offset="0.086" stop-color="#4848f2"/><stop offset="0.162" stop-color="#4848f2"/><stop offset="0.168" stop-color="#3c9cf0"/><stop offset="0.270" stop-color="#40c4f0"/><stop offset="0.282" stop-color="#40ecf0"/><stop offset="0.319" stop-color="#40ecf0"/><stop offset="0.368" stop-color="#40f0b0"/><stop offset="0.371" stop-color="#58f060"/><stop offset="0.373" stop-color="#a8f040"/><stop offset="0.515" stop-color="#f0f040"/><stop offset="0.631" stop-color="#f0c840"/><stop offset="0.796" stop-color="#f0a040"/><stop offset="0.959" stop-color="#f07c48"/><stop offset="1" stop-color="#f0784b"/></linearGradient><linearGradient id="s126" gradientUnits="userSpaceOnUse" x1="0" x2="0" y1="455" y2="640"><stop offset="0.087" stop-color="#4848f2"/><stop offset="0.163" stop-color="#4848f2"/><stop offset="0.168" stop-color="#3c9cf0"/><stop offset="0.271" stop-color="#40c4f0"/><stop offset="0.282" stop-color="#40ecf0"/><stop offset="0.320" stop-color="#40ecf0"/><stop offset="0.369" stop-color="#40f0b0"/><stop offset="0.371" stop-color="#58f060"/><stop offset="0.374" stop-color="#a8f040"/><stop offset="0.516" stop-color="#f0f040"/><stop offset="0.630" stop-color="#f0c840"/><stop offset="0.793" stop-color="#f0a040"/><stop offset="0.961" stop-color="#f07c48"/><stop offset="1" stop-color="#f0784b"/></linearGradient><linearGradient id="s127" gradientUnits="userSpaceOnUse" x1="0" x2="0" y1="455" y2="640"><stop offset="0.088" stop-color="#4848f2"/><stop offset="0.163" stop-color="#4848f2"/><stop offset="0.169" stop-color="#3c9cf0"/><stop offset="0.272" stop-color="#40c4f0"/><stop offset="0.283" stop-color="#40ecf0"/><stop offset="0.321" stop-color="#40ecf0"/><stop offset="0.369" stop-color="#40f0b0"/><stop offset="0.372" stop-color="#58f060"/><stop offset="0.375" stop-color="#a8f040"/><stop offset="0.516" stop-color="#f0f040"/><stop offset="0.630" stop-color="#f0c840"/><stop offset="0.790" stop-color="#f0a040"/><stop offset="0.963" stop-color="#f07c48"/><stop offset="1" stop-color="#f0794b"/></linearGradient><linearGradient id="s128" gradientUnits="userSpaceOnUse" x1="0" x2="0" y1="455" y2="640"><stop offset="0.088" stop-color="#4848f2"/><stop offset="0.164" stop-color="#4848f2"/><stop offset="0.169" stop-color="#3c9cf0"/><stop offset="0.272" stop-color="#40c4f0"/><stop offset="0.283" stop-color="#40ecf0"/><stop offset="0.321" stop-color="#40ecf0"/><stop offset="0.370" stop-color="#40f0b0"/><stop offset="0.373" stop-color="#58f060"/><stop offset="0.375" stop-color="#a8f040"/><stop offset="0.517" stop-color="#f0f040"/><stop offset="0.629" stop-color="#f0c840"/><stop offset="0.787" stop-color="#f0a040"/><stop offset="0.965" stop-color="#f07c48"/><stop offset="1" stop-color="#f0794b"/></linearGradient><linearGradient id="s129" gradientUnits="userSpaceOnUse" x1="0" x2="0" y1="455" y2="640"><stop offset="0.089" stop-color="#4848f2"/><stop offset="0.165" stop-color="#4848f2"/><stop offset="0.170" stop-color="#3c9cf0"/><stop offset="0.273" stop-color="#40c4f0"/><stop offset="0.284" stop-color="#40ecf0"/><stop offset="0.322" stop-color="#40ecf0"/><stop offset="0.370" stop-color="#40f0b0"/><stop offset="0.373" stop-color="#58f060"/><stop offset="0.376" stop-color="#a8f040"/><stop offset="0.517" stop-color="#f0f040"/><stop offset="0.629" stop-color="#f0c840"/><stop offset="0.784" stop-color="#f0a040"/><stop offset="0.967" stop-color="#f07c48"/><stop offset="1" stop-color="#f0794b"/></linearGradient><linearGradient id="s130" gradientUnits="userSpaceOnUse" x1="0" x2="0" y1="455" y2="640"><stop offset="0.090" stop-color="#4848f2"/><stop offset="0.165" stop-color="#4848f2"/><stop offset="0.171" stop-color="#3c9cf0"/><stop offset="0.273" stop-color="#40c4f0"/><stop offset="0.285" stop-color="#40ecf0"/><stop offset="0.322" stop-color="#40ecf0"/><stop offset="0.371" stop-color="#40f0b0"/><stop offset="0.374" stop-color="#58f060"/><stop offset="0.376" stop-color="#a8f040"/><stop offset="0.518" stop-color="#f0f040"/><stop offset="0.628" stop-color="#f0c840"/><stop offset="0.780" stop-color="#f0a040"/><stop offset="0.969" stop-color="#f07c48"/><stop offset="1" stop-color="#f0794b"/></linearGradient><linearGradient id="s131" gradientUnits="userSpaceOnUse" x1="0" x2="0" y1="455" y2="640"><stop offset="0.090" stop-color="#4848f2"/><stop offset="0.166" stop-color="#4848f2"/><stop offset="0.171" stop-color="#3c9cf0"/><stop offset="0.274" stop-color="#40c4f0"/><stop offset="0.285" stop-color="#40ecf0"/><stop offset="0.323" stop-color="#40ecf0"/><stop offset="0.372" stop-color="#40f0b0"/><stop offset="0.374" stop-color="#58f060"/><stop offset="0.377" stop-color="#a8f040"/><stop offset="0.518" stop-color="#f0f040"/><stop offset="0.628" stop-color="#f0c840"/><stop offset="0.777" stop-color="#f0a040"/><stop offset="0.971" stop-color="#f07c48"/><stop offset="1" stop-color="#f0794b"/></linearGradient><linearGradient id="s132" gradientUnits="userSpaceOnUse" x1="0" x2="0" y1="455" y2="640"><stop offset="0.091" stop-color="#4848f2"/><stop offset="0.167" stop-color="#4848f2"/><stop offset="0.172" stop-color="#3c9cf0"/><stop offset="0.275" stop-color="#40c4f0"/><stop offset="0.286" stop-color="#40ecf0"/><stop offset="0.324" stop-color="#40ecf0"/><stop offset="0.372" stop-color="#40f0b0"/><stop offset="0.375" stop-color="#58f060"/><stop offset="0.378" stop-color="#a8f040"/><stop offset="0.519" stop-color="#f0f040"/><stop offset="0.627" stop-color="#f0c840"/><stop offset="0.774" stop-color="#f0a040"/><stop offset="0.973" stop-color="#f07c48"/><stop offset="1" stop-color="#f0794a"/></linearGradient><linearGradient id="s133" gradientUnits="userSpaceOnUse" x1="0" x2="0" y1="455" y2="640"><stop offset="0.092" stop-color="#4848f2"/><stop offset="0.167" stop-color="#4848f2"/><stop offset="0.173" stop-color="#3c9cf0"/><stop offset="0.275" stop-color="#40c4f0"/><stop offset="0.286" stop-color="#40ecf0"/><stop offset="0.324" stop-color="#40ecf0"/><stop offset="0.373" stop-color="#40f0b0"/><stop offset="0.376" stop-color="#58f060"/><stop offset="0.378" stop-color="#a8f040"/><stop offset="0.519" stop-color="#f0f040"/><stop offset="0.627" stop-color="#f0c840"/><stop offset="0.771" stop-color="#f0a040"/><stop offset="0.969" stop-color="#f07c48"/><stop offset="1" stop-color="#f0794b"/></linearGradient><linearGradient id="s134" gradientUnits="userSpaceOnUse" x1="0" x2="0" y1="455" y2="640"><stop offset="0.092" stop-color="#4848f2"/><stop offset="0.168" stop-color="#4848f2"/><stop offset="0.173" stop-color="#3c9cf0"/><stop offset="0.276" stop-color="#40c4f0"/><stop offset="0.287" stop-color="#40ecf0"/><stop offset="0.325" stop-color="#40ecf0"/><stop offset="0.373" stop-color="#40f0b0"/><stop offset="0.376" stop-color="#58f060"/><stop offset="0.379" stop-color="#a8f040"/><stop offset="0.520" stop-color="#f0f040"/><stop offset="0.626" stop-color="#f0c840"/><stop offset="0.767" stop-color="#f0a040"/><stop offset="0.963" stop-color="#f07c48"/><stop offset="1" stop-color="#f0794b"/></linearGradient><linearGradient id="s135" gradientUnits="userSpaceOnUse" x1="0" x2="0" y1="455" y2="640"><stop offset="0.093" stop-color="#4848f2"/><stop offset="0.168" stop-color="#4848f2"/><stop offset="0.174" stop-color="#3c9cf0"/><stop offset="0.277" stop-color="#40c4f0"/><stop offset="0.288" stop-color="#40ecf0"/><stop offset="0.325" stop-color="#40ecf0"/><stop offset="0.374" stop-color="#40f0b0"/><stop offset="0.377" stop-color="#58f060"/><stop offset="0.379" stop-color="#a8f040"/><stop offset="0.520" stop-color="#f0f040"/><stop offset="0.626" stop-color="#f0c840"/><stop offset="0.764" stop-color="#f0a040"/><stop offset="0.958" stop-color="#f07c48"/><stop offset="1" stop-color="#f0784c"/></linearGradient><linearGradient id="s136" gradientUnits="userSpaceOnUse" x1="0" x2="0" y1="455" y2="640"><stop offset="0.093" stop-color="#4848f2"/><stop offset="0.169" stop-color="#4848f2"/><stop offset="0.174" stop-color="#3c9cf0"/><stop offset="0.277" stop-color="#40c4f0"/><stop offset="0.288" stop-color="#40ecf0"/><stop offset="0.326" stop-color="#40ecf0"/><stop offset="0.375" stop-color="#40f0b0"/><stop offset="0.377" stop-color="#58f060"/><stop offset="0.380" stop-color="#a8f040"/><stop offset="0.521" stop-color="#f0f040"/><stop offset="0.625" stop-color="#f0c840"/><stop offset="0.761" stop-color="#f0a040"/><stop offset="0.953" stop-color="#f07c48"/><stop offset="1" stop-color="#f0784c"/></linearGradient><linearGradient id="s137" gradientUnits="userSpaceOnUse" x1="0" x2="0" y1="455" y2="640"><stop offset="0.094" stop-color="#4848f2"/><stop offset="0.170" stop-color="#4848f2"/><stop offset="0.175" stop-color="#3c9cf0"/><stop offset="0.278" stop-color="#40c4f0"/><stop offset="0.289" stop-color="#40ecf0"/><stop offset="0.327" stop-color="#40ecf0"/><stop offset="0.375" stop-color="#40f0b0"/><stop offset="0.378" stop-color="#58f060"/><stop offset="0.381" stop-color="#a8f040"/><stop offset="0.521" stop-color="#f0f040"/><stop offset="0.625" stop-color="#f0c840"/><stop offset="0.758" stop-color="#f0a040"/><stop offset="0.947" stop-color="#f07c48"/><stop offset="1" stop-color="#f0774c"/></linearGradient><linearGradient id="s138" gradientUnits="userSpaceOnUse" x1="0" x2="0" y1="455" y2="640"><stop offset="0.095" stop-color="#4848f2"/><stop offset="0.170" stop-color="#4848f2"/><stop offset="0.176" stop-color="#3c9cf0"/><stop offset="0.278" stop-color="#40c4f0"/><stop offset="0.289" stop-color="#40ecf0"/><stop offset="0.327" stop-color="#40ecf0"/><stop offset="0.376" stop-color="#40f0b0"/><stop offset="0.379" stop-color="#58f060"/><stop offset="0.381" stop-color="#a8f040"/><stop offset="0.522" stop-color="#f0f040"/><stop offset="0.624" stop-color="#f0c840"/><stop offset="0.755" stop-color="#f0a040"/><stop offset="0.942" stop-color="#f07c48"/><stop offset="1" stop-color="#f0774d"/></linearGradient><linearGradient id="s139" gradientUnits="userSpaceOnUse" x1="0" x2="0" y1="455" y2="640"><stop offset="0.095" stop-color="#4848f2"/><stop offset="0.171" stop-color="#4848f2"/><stop offset="0.176" stop-color="#3c9cf0"/><stop offset="0.279" stop-color="#40c4f0"/><stop offset="0.290" stop-color="#40ecf0"/><stop offset="0.328" stop-color="#40ecf0"/><stop offset="0.376" stop-color="#40f0b0"/><stop offset="0.379" stop-color="#58f060"/><stop offset="0.382" stop-color="#a8f040"/><stop offset="0.523" stop-color="#f0f040"/><stop offset="0.623" stop-color="#f0c840"/><stop offset="0.751" stop-color="#f0a040"/><stop offset="0.937" stop-color="#f07c48"/><stop offset="1" stop-color="#f0764d"/></linearGradient><linearGradient id="s140" gradientUnits="userSpaceOnUse" x1="0" x2="0" y1="455" y2="640"><stop offset="0.096" stop-color="#4848f2"/><stop offset="0.172" stop-color="#4848f2"/><stop offset="0.177" stop-color="#3c9cf0"/><stop offset="0.280" stop-color="#40c4f0"/><stop offset="0.291" stop-color="#40ecf0"/><stop offset="0.328" stop-color="#40ecf0"/><stop offset="0.377" stop-color="#40f0b0"/><stop offset="0.380" stop-color="#58f060"/><stop offset="0.382" stop-color="#a8f040"/><stop offset="0.523" stop-color="#f0f040"/><stop offset="0.623" stop-color="#f0c840"/><stop offset="0.748" stop-color="#f0a040"/><stop offset="0.932" stop-color="#f07c48"/><stop offset="1" stop-color="#f0764d"/></linearGradient><linearGradient id="s141" gradientUnits="userSpaceOnUse" x1="0" x2="0" y1="455" y2="640"><stop offset="0.097" stop-color="#4848f2"/><stop offset="0.172" stop-color="#4848f2"/><stop offset="0.178" stop-color="#3c9cf0"/><stop offset="0.280" stop-color="#40c4f0"/><stop offset="0.291" stop-color="#40ecf0"/><stop offset="0.329" stop-color="#40ecf0"/><stop offset="0.378" stop-color="#40f0b0"/><stop offset="0.380" stop-color="#58f060"/><stop offset="0.383" stop-color="#a8f040"/><stop offset="0.524" stop-color="#f0f040"/><stop offset="0.622" stop-color="#f0c840"/><stop offset="0.745" stop-color="#f0a040"/><stop offset="0.926" stop-color="#f07c48"/><stop offset="1" stop-color="#f0764e"/></linearGradient><linearGradient id="s142" gradientUnits="userSpaceOnUse" x1="0" x2="0" y1="455" y2="640"><stop offset="0.097" stop-color="#4848f2"/><stop offset="0.173" stop-color="#4848f2"/><stop offset="0.178" stop-color="#3c9cf0"/><stop offset="0.281" stop-color="#40c4f0"/><stop offset="0.292" stop-color="#40ecf0"/><stop offset="0.330" stop-color="#40ecf0"/><stop offset="0.378" stop-color="#40f0b0"/><stop offset="0.381" stop-color="#58f060"/><stop offset="0.384" stop-color="#a8f040"/><stop offset="0.524" stop-color="#f0f040"/><stop offset="0.622" stop-color="#f0c840"/><stop offset="0.742" stop-color="#f0a040"/><stop offset="0.921" stop-color="#f07c48"/><stop offset="1" stop-color="#f0754e"/></linearGradient></defs>
<clipPath id="cpoly"><polygon points="336.6,460.5 400.0,462.0 480.0,463.0 560.0,464.0 610.0,465.0 700.0,466.0 830.0,468.0 900.0,469.5 1050.0,473.0 1051.3,473.0 1051.3,638.5 336.6,638.5"/></clipPath>
<g clip-path="url(#cpoly)"><rect x="336.6" y="459.5" width="5.3" height="179.0" fill="url(#s0)"/><rect x="341.6" y="459.6" width="5.3" height="178.9" fill="url(#s1)"/><rect x="346.6" y="459.7" width="5.3" height="178.8" fill="url(#s2)"/><rect x="351.6" y="459.9" width="5.3" height="178.6" fill="url(#s3)"/><rect x="356.6" y="460.0" width="5.3" height="178.5" fill="url(#s4)"/><rect x="361.6" y="460.1" width="5.3" height="178.4" fill="url(#s5)"/><rect x="366.6" y="460.2" width="5.3" height="178.3" fill="url(#s6)"/><rect x="371.6" y="460.3" width="5.3" height="178.2" fill="url(#s7)"/><rect x="376.6" y="460.5" width="5.3" height="178.0" fill="url(#s8)"/><rect x="381.6" y="460.6" width="5.3" height="177.9" fill="url(#s9)"/><rect x="386.6" y="460.7" width="5.3" height="177.8" fill="url(#s10)"/><rect x="391.6" y="460.8" width="5.3" height="177.7" fill="url(#s11)"/><rect x="396.6" y="460.9" width="5.3" height="177.6" fill="url(#s12)"/><rect x="401.6" y="461.0" width="5.3" height="177.5" fill="url(#s13)"/><rect x="406.6" y="461.1" width="5.3" height="177.4" fill="url(#s14)"/><rect x="411.6" y="461.1" width="5.3" height="177.4" fill="url(#s15)"/><rect x="416.6" y="461.2" width="5.3" height="177.3" fill="url(#s16)"/><rect x="421.6" y="461.3" width="5.3" height="177.2" fill="url(#s17)"/><rect x="426.6" y="461.3" width="5.3" height="177.2" fill="url(#s18)"/><rect x="431.6" y="461.4" width="5.3" height="177.1" fill="url(#s19)"/><rect x="436.6" y="461.5" width="5.3" height="177.0" fill="url(#s20)"/><rect x="441.6" y="461.5" width="5.3" height="177.0" fill="url(#s21)"/><rect x="446.6" y="461.6" width="5.3" height="176.9" fill="url(#s22)"/><rect x="451.6" y="461.6" width="5.3" height="176.9" fill="url(#s23)"/><rect x="456.6" y="461.7" width="5.3" height="176.8" fill="url(#s24)"/><rect x="461.6" y="461.8" width="5.3" height="176.7" fill="url(#s25)"/><rect x="466.6" y="461.8" width="5.3" height="176.7" fill="url(#s26)"/><rect x="471.6" y="461.9" width="5.3" height="176.6" fill="url(#s27)"/><rect x="476.6" y="462.0" width="5.3" height="176.5" fill="url(#s28)"/><rect x="481.6" y="462.0" width="5.3" height="176.5" fill="url(#s29)"/><rect x="486.6" y="462.1" width="5.3" height="176.4" fill="url(#s30)"/><rect x="491.6" y="462.1" width="5.3" height="176.4" fill="url(#s31)"/><rect x="496.6" y="462.2" width="5.3" height="176.3" fill="url(#s32)"/><rect x="501.6" y="462.3" width="5.3" height="176.2" fill="url(#s33)"/><rect x="506.6" y="462.3" width="5.3" height="176.2" fill="url(#s34)"/><rect x="511.6" y="462.4" width="5.3" height="176.1" fill="url(#s35)"/><rect x="516.6" y="462.5" width="5.3" height="176.0" fill="url(#s36)"/><rect x="521.6" y="462.5" width="5.3" height="176.0" fill="url(#s37)"/><rect x="526.6" y="462.6" width="5.3" height="175.9" fill="url(#s38)"/><rect x="531.6" y="462.6" width="5.3" height="175.9" fill="url(#s39)"/><rect x="536.6" y="462.7" width="5.3" height="175.8" fill="url(#s40)"/><rect x="541.6" y="462.8" width="5.3" height="175.7" fill="url(#s41)"/><rect x="546.6" y="462.8" width="5.3" height="175.7" fill="url(#s42)"/><rect x="551.6" y="462.9" width="5.3" height="175.6" fill="url(#s43)"/><rect x="556.6" y="463.0" width="5.3" height="175.5" fill="url(#s44)"/><rect x="561.6" y="463.0" width="5.3" height="175.5" fill="url(#s45)"/><rect x="566.6" y="463.1" width="5.3" height="175.4" fill="url(#s46)"/><rect x="571.6" y="463.2" width="5.3" height="175.3" fill="url(#s47)"/><rect x="576.6" y="463.3" width="5.3" height="175.2" fill="url(#s48)"/><rect x="581.6" y="463.4" width="5.3" height="175.1" fill="url(#s49)"/><rect x="586.6" y="463.5" width="5.3" height="175.0" fill="url(#s50)"/><rect x="591.6" y="463.6" width="5.3" height="174.9" fill="url(#s51)"/><rect x="596.6" y="463.7" width="5.3" height="174.8" fill="url(#s52)"/><rect x="601.6" y="463.8" width="5.3" height="174.7" fill="url(#s53)"/><rect x="606.6" y="463.9" width="5.3" height="174.6" fill="url(#s54)"/><rect x="611.6" y="464.0" width="5.3" height="174.5" fill="url(#s55)"/><rect x="616.6" y="464.1" width="5.3" height="174.4" fill="url(#s56)"/><rect x="621.6" y="464.1" width="5.3" height="174.4" fill="url(#s57)"/><rect x="626.6" y="464.2" width="5.3" height="174.3" fill="url(#s58)"/><rect x="631.6" y="464.2" width="5.3" height="174.3" fill="url(#s59)"/><rect x="636.6" y="464.3" width="5.3" height="174.2" fill="url(#s60)"/><rect x="641.6" y="464.4" width="5.3" height="174.1" fill="url(#s61)"/><rect x="646.6" y="464.4" width="5.3" height="174.1" fill="url(#s62)"/><rect x="651.6" y="464.5" width="5.3" height="174.0" fill="url(#s63)"/><rect x="656.6" y="464.5" width="5.3" height="174.0" fill="url(#s64)"/><rect x="661.6" y="464.6" width="5.3" height="173.9" fill="url(#s65)"/><rect x="666.6" y="464.6" width="5.3" height="173.9" fill="url(#s66)"/><rect x="671.6" y="464.7" width="5.3" height="173.8" fill="url(#s67)"/><rect x="676.6" y="464.7" width="5.3" height="173.8" fill="url(#s68)"/><rect x="681.6" y="464.8" width="5.3" height="173.7" fill="url(#s69)"/><rect x="686.6" y="464.9" width="5.3" height="173.6" fill="url(#s70)"/><rect x="691.6" y="464.9" width="5.3" height="173.6" fill="url(#s71)"/><rect x="696.6" y="465.0" width="5.3" height="173.5" fill="url(#s72)"/><rect x="701.6" y="465.0" width="5.3" height="173.5" fill="url(#s73)"/><rect x="706.6" y="465.1" width="5.3" height="173.4" fill="url(#s74)"/><rect x="711.6" y="465.2" width="5.3" height="173.3" fill="url(#s75)"/><rect x="716.6" y="465.3" width="5.3" height="173.2" fill="url(#s76)"/><rect x="721.6" y="465.3" width="5.3" height="173.2" fill="url(#s77)"/><rect x="726.6" y="465.4" width="5.3" height="173.1" fill="url(#s78)"/><rect x="731.6" y="465.5" width="5.3" height="173.0" fill="url(#s79)"/><rect x="736.6" y="465.6" width="5.3" height="172.9" fill="url(#s80)"/><rect x="741.6" y="465.6" width="5.3" height="172.9" fill="url(#s81)"/><rect x="746.6" y="465.7" width="5.3" height="172.8" fill="url(#s82)"/><rect x="751.6" y="465.8" width="5.3" height="172.7" fill="url(#s83)"/><rect x="756.6" y="465.9" width="5.3" height="172.6" fill="url(#s84)"/><rect x="761.6" y="465.9" width="5.3" height="172.6" fill="url(#s85)"/><rect x="766.6" y="466.0" width="5.3" height="172.5" fill="url(#s86)"/><rect x="771.6" y="466.1" width="5.3" height="172.4" fill="url(#s87)"/><rect x="776.6" y="466.2" width="5.3" height="172.3" fill="url(#s88)"/><rect x="781.6" y="466.3" width="5.3" height="172.2" fill="url(#s89)"/><rect x="786.6" y="466.3" width="5.3" height="172.2" fill="url(#s90)"/><rect x="791.6" y="466.4" width="5.3" height="172.1" fill="url(#s91)"/><rect x="796.6" y="466.5" width="5.3" height="172.0" fill="url(#s92)"/><rect x="801.6" y="466.6" width="5.3" height="171.9" fill="url(#s93)"/><rect x="806.6" y="466.6" width="5.3" height="171.9" fill="url(#s94)"/><rect x="811.6" y="466.7" width="5.3" height="171.8" fill="url(#s95)"/><rect x="816.6" y="466.8" width="5.3" height="171.7" fill="url(#s96)"/><rect x="821.6" y="466.9" width="5.3" height="171.6" fill="url(#s97)"/><rect x="826.6" y="466.9" width="5.3" height="171.6" fill="url(#s98)"/><rect x="831.6" y="467.0" width="5.3" height="171.5" fill="url(#s99)"/><rect x="836.6" y="467.1" width="5.3" height="171.4" fill="url(#s100)"/><rect x="841.6" y="467.2" width="5.3" height="171.3" fill="url(#s101)"/><rect x="846.6" y="467.4" width="5.3" height="171.1" fill="url(#s102)"/><rect x="851.6" y="467.5" width="5.3" height="171.0" fill="url(#s103)"/><rect x="856.6" y="467.6" width="5.3" height="170.9" fill="url(#s104)"/><rect x="861.6" y="467.7" width="5.3" height="170.8" fill="url(#s105)"/><rect x="866.6" y="467.8" width="5.3" height="170.7" fill="url(#s106)"/><rect x="871.6" y="467.9" width="5.3" height="170.6" fill="url(#s107)"/><rect x="876.6" y="468.0" width="5.3" height="170.5" fill="url(#s108)"/><rect x="881.6" y="468.1" width="5.3" height="170.4" fill="url(#s109)"/><rect x="886.6" y="468.2" width="5.3" height="170.3" fill="url(#s110)"/><rect x="891.6" y="468.3" width="5.3" height="170.2" fill="url(#s111)"/><rect x="896.6" y="468.4" width="5.3" height="170.1" fill="url(#s112)"/><rect x="901.6" y="468.5" width="5.3" height="170.0" fill="url(#s113)"/><rect x="906.6" y="468.7" width="5.3" height="169.8" fill="url(#s114)"/><rect x="911.6" y="468.8" width="5.3" height="169.7" fill="url(#s115)"/><rect x="916.6" y="468.9" width="5.3" height="169.6" fill="url(#s116)"/><rect x="921.6" y="469.0" width="5.3" height="169.5" fill="url(#s117)"/><rect x="926.6" y="469.1" width="5.3" height="169.4" fill="url(#s118)"/><rect x="931.6" y="469.2" width="5.3" height="169.3" fill="url(#s119)"/><rect x="936.6" y="469.4" width="5.3" height="169.1" fill="url(#s120)"/><rect x="941.6" y="469.5" width="5.3" height="169.0" fill="url(#s121)"/><rect x="946.6" y="469.6" width="5.3" height="168.9" fill="url(#s122)"/><rect x="951.6" y="469.7" width="5.3" height="168.8" fill="url(#s123)"/><rect x="956.6" y="469.8" width="5.3" height="168.7" fill="url(#s124)"/><rect x="961.6" y="469.9" width="5.3" height="168.6" fill="url(#s125)"/><rect x="966.6" y="470.1" width="5.3" height="168.4" fill="url(#s126)"/><rect x="971.6" y="470.2" width="5.3" height="168.3" fill="url(#s127)"/><rect x="976.6" y="470.3" width="5.3" height="168.2" fill="url(#s128)"/><rect x="981.6" y="470.4" width="5.3" height="168.1" fill="url(#s129)"/><rect x="986.6" y="470.5" width="5.3" height="168.0" fill="url(#s130)"/><rect x="991.6" y="470.6" width="5.3" height="167.9" fill="url(#s131)"/><rect x="996.6" y="470.8" width="5.3" height="167.7" fill="url(#s132)"/><rect x="1001.6" y="470.9" width="5.3" height="167.6" fill="url(#s133)"/><rect x="1006.6" y="471.0" width="5.3" height="167.5" fill="url(#s134)"/><rect x="1011.6" y="471.1" width="5.3" height="167.4" fill="url(#s135)"/><rect x="1016.6" y="471.2" width="5.3" height="167.3" fill="url(#s136)"/><rect x="1021.6" y="471.3" width="5.3" height="167.2" fill="url(#s137)"/><rect x="1026.6" y="471.5" width="5.3" height="167.0" fill="url(#s138)"/><rect x="1031.6" y="471.6" width="5.3" height="166.9" fill="url(#s139)"/><rect x="1036.6" y="471.7" width="5.3" height="166.8" fill="url(#s140)"/><rect x="1041.6" y="471.8" width="5.3" height="166.7" fill="url(#s141)"/><rect x="1046.6" y="471.9" width="5.0" height="166.6" fill="url(#s142)"/></g>
<polygon points="336.6,460.5 400.0,462.0 480.0,463.0 560.0,464.0 610.0,465.0 700.0,466.0 830.0,468.0 900.0,469.5 1050.0,473.0 1051.3,473.0 1051.3,513.0 1050.0,513.0 960.0,511.0 840.0,509.5 760.0,511.5 700.0,512.5 650.0,515.0 600.0,517.0 540.0,521.0 480.0,522.5 440.0,521.5 336.6,517.5" fill="url(#brick)" />
<polygon points="336.6,517.5 440.0,521.5 480.0,522.5 540.0,521.0 600.0,517.0 650.0,515.0 700.0,512.5 760.0,511.5 840.0,509.5 960.0,511.0 1050.0,513.0 1051.3,513.0 1051.3,532.1 1050.0,532.0 960.0,529.0 900.0,528.0 840.0,530.5 760.0,539.0 700.0,547.0 600.0,554.0 550.0,553.5 480.0,550.0 435.0,552.0 400.0,554.5 336.6,562.9" fill="url(#noise)" />
<polygon points="336.6,562.9 400.0,554.5 435.0,552.0 480.0,550.0 550.0,553.5 600.0,554.0 700.0,547.0 760.0,539.0 840.0,530.5 900.0,528.0 960.0,529.0 1050.0,532.0 1051.3,532.1 1051.3,552.9 1050.0,553.0 1000.0,554.6 950.0,554.5 900.0,555.5 840.0,563.0 760.0,572.0 700.0,578.5 650.0,581.0 600.0,581.0 550.0,579.0 480.0,579.0 400.0,586.5 336.6,592.9" fill="url(#hatchd)" />
<polygon points="336.6,592.9 400.0,586.5 480.0,579.0 550.0,579.0 600.0,581.0 650.0,581.0 700.0,578.5 760.0,572.0 840.0,563.0 900.0,555.5 950.0,554.5 1000.0,554.6 1050.0,553.0 1051.3,552.9 1051.3,638.5 336.6,638.5" fill="url(#hatch)" />
<polygon points="315.5,459.5 336.0,460.5 336.6,460.5 336.6,517.5 336.0,517.5 315.5,516.5" fill="url(#brick)" />
<polygon points="315.5,516.5 336.0,517.5 336.6,517.5 336.6,562.9 336.0,563.0 315.5,565.9" fill="url(#noise)" />
<polygon points="315.5,565.9 336.0,563.0 336.6,562.9 336.6,592.9 336.0,593.0 315.5,595.9" fill="url(#hatchd)" />
<polygon points="315.5,595.9 336.6,592.9 336.6,636.0 315.5,636.0" fill="url(#hatch)"/>
<polygon points="1051.3,473.0 1090.0,474.5 1090.0,513.5 1051.3,513.0" fill="url(#brick)" />
<polygon points="1051.3,513.0 1090.0,513.5 1090.0,534.3 1051.3,532.1" fill="url(#noise)" />
<polygon points="1051.3,532.1 1090.0,534.3 1090.0,551.4 1051.3,552.9" fill="url(#hatchd)" />
<polygon points="1051.3,552.9 1090.0,551.4 1090.0,636.0 1051.3,636.0" fill="url(#hatch)"/>
<polygon points="384.5,461.6 435.0,462.4 435.0,552.0 384.5,552.0" fill="rgba(205,205,205,0.5)"/>
<polygon points="555.5,463.9 606.0,464.9 606.0,560.4 555.5,560.4" fill="rgba(205,205,205,0.5)"/>
<polygon points="848.5,468.4 898.0,469.5 898.0,521.4 848.5,521.4" fill="rgba(205,205,205,0.5)"/>
<polyline points="315.0,516.5 336.0,517.5 440.0,521.5 480.0,522.5 540.0,521.0 600.0,517.0 650.0,515.0 700.0,512.5 760.0,511.5 840.0,509.5 960.0,511.0 1050.0,513.0 1090.0,513.5" fill="none" stroke="#000" stroke-width="1.3"/>
<polyline points="315.0,566.0 336.0,563.0 400.0,554.5 435.0,552.0 480.0,550.0 550.0,553.5 600.0,554.0 700.0,547.0 760.0,539.0 840.0,530.5 900.0,528.0 960.0,529.0 1050.0,532.0 1090.0,534.3" fill="none" stroke="#000" stroke-width="1.3"/>
<polyline points="315.0,596.0 336.0,593.0 400.0,586.5 480.0,579.0 550.0,579.0 600.0,581.0 650.0,581.0 700.0,578.5 760.0,572.0 840.0,563.0 900.0,555.5 950.0,554.5 1000.0,554.6 1050.0,553.0 1090.0,551.4" fill="none" stroke="#000" stroke-width="1.3"/>
<polyline points="315.0,459.5 336.0,460.5 400.0,462.0 480.0,463.0 560.0,464.0 610.0,465.0 700.0,466.0 830.0,468.0 900.0,469.5 1050.0,473.0 1090.0,474.5" fill="none" stroke="#8a1010" stroke-width="1.2"/>
<polyline points="336.0,463.5 400.0,465.0 480.0,466.0 560.0,467.0 610.0,468.0 700.0,469.0 830.0,471.0 900.0,472.5 1050.0,476.0 1090.0,477.5" fill="none" stroke="#000" stroke-width="0.9"/>
<g fill="none" stroke="#000" stroke-width="1.2" stroke-dasharray="3 2">
<rect x="283.5" y="443.5" width="830" height="242"/>
<path d="M336.5 733.5V460.5H1051.5V733.5"/>
</g>
<path d="M287.6 459v177M284.6 459.5h3M284.6 463.5h3M284.6 467.5h3M284.6 471.5h3M284.6 475.5h3M284.6 479.5h3M284.6 483.5h3M284.6 487.5h3M284.6 491.5h3M284.6 495.5h3M284.6 499.5h3M284.6 503.5h3M284.6 507.5h3M284.6 511.5h3M284.6 515.5h3M284.6 519.5h3M284.6 523.5h3M284.6 527.5h3M284.6 531.5h3M284.6 535.5h3M284.6 539.5h3M284.6 543.5h3M284.6 547.5h3M284.6 551.5h3M284.6 555.5h3M284.6 559.5h3M284.6 563.5h3M284.6 567.5h3M284.6 571.5h3M284.6 575.5h3M284.6 579.5h3M284.6 583.5h3M284.6 587.5h3M284.6 591.5h3M284.6 595.5h3M284.6 599.5h3M284.6 603.5h3M284.6 607.5h3M284.6 611.5h3M284.6 615.5h3M284.6 619.5h3M284.6 623.5h3M284.6 627.5h3M284.6 631.5h3M284.6 635.5h3" stroke="#000" stroke-width="1" fill="none"/>
<path d="M303.6 459v177M300.6 459.5h3M300.6 463.5h3M300.6 467.5h3M300.6 471.5h3M300.6 475.5h3M300.6 479.5h3M300.6 483.5h3M300.6 487.5h3M300.6 491.5h3M300.6 495.5h3M300.6 499.5h3M300.6 503.5h3M300.6 507.5h3M300.6 511.5h3M300.6 515.5h3M300.6 519.5h3M300.6 523.5h3M300.6 527.5h3M300.6 531.5h3M300.6 535.5h3M300.6 539.5h3M300.6 543.5h3M300.6 547.5h3M300.6 551.5h3M300.6 555.5h3M300.6 559.5h3M300.6 563.5h3M300.6 567.5h3M300.6 571.5h3M300.6 575.5h3M300.6 579.5h3M300.6 583.5h3M300.6 587.5h3M300.6 591.5h3M300.6 595.5h3M300.6 599.5h3M300.6 603.5h3M300.6 607.5h3M300.6 611.5h3M300.6 615.5h3M300.6 619.5h3M300.6 623.5h3M300.6 627.5h3M300.6 631.5h3M300.6 635.5h3" stroke="#000" stroke-width="1" fill="none"/>
<path d="M1093.5 474v162M1093.5 474.5h3M1093.5 478.5h3M1093.5 482.5h3M1093.5 486.5h3M1093.5 490.5h3M1093.5 494.5h3M1093.5 498.5h3M1093.5 502.5h3M1093.5 506.5h3M1093.5 510.5h3M1093.5 514.5h3M1093.5 518.5h3M1093.5 522.5h3M1093.5 526.5h3M1093.5 530.5h3M1093.5 534.5h3M1093.5 538.5h3M1093.5 542.5h3M1093.5 546.5h3M1093.5 550.5h3M1093.5 554.5h3M1093.5 558.5h3M1093.5 562.5h3M1093.5 566.5h3M1093.5 570.5h3M1093.5 574.5h3M1093.5 578.5h3M1093.5 582.5h3M1093.5 586.5h3M1093.5 590.5h3M1093.5 594.5h3M1093.5 598.5h3M1093.5 602.5h3M1093.5 606.5h3M1093.5 610.5h3M1093.5 614.5h3M1093.5 618.5h3M1093.5 622.5h3M1093.5 626.5h3M1093.5 630.5h3M1093.5 634.5h3" stroke="#000" stroke-width="1" fill="none"/>
<path d="M1109.5 474v162M1109.5 474.5h3M1109.5 478.5h3M1109.5 482.5h3M1109.5 486.5h3M1109.5 490.5h3M1109.5 494.5h3M1109.5 498.5h3M1109.5 502.5h3M1109.5 506.5h3M1109.5 510.5h3M1109.5 514.5h3M1109.5 518.5h3M1109.5 522.5h3M1109.5 526.5h3M1109.5 530.5h3M1109.5 534.5h3M1109.5 538.5h3M1109.5 542.5h3M1109.5 546.5h3M1109.5 550.5h3M1109.5 554.5h3M1109.5 558.5h3M1109.5 562.5h3M1109.5 566.5h3M1109.5 570.5h3M1109.5 574.5h3M1109.5 578.5h3M1109.5 582.5h3M1109.5 586.5h3M1109.5 590.5h3M1109.5 594.5h3M1109.5 598.5h3M1109.5 602.5h3M1109.5 606.5h3M1109.5 610.5h3M1109.5 614.5h3M1109.5 618.5h3M1109.5 622.5h3M1109.5 626.5h3M1109.5 630.5h3M1109.5 634.5h3" stroke="#000" stroke-width="1" fill="none"/>
<g fill="#ebe3e8">
<rect x="276" y="458.0" width="7" height="1.6"/><rect x="294" y="458.0" width="6" height="1.6"/>
<rect x="276" y="462.0" width="7" height="1.6"/><rect x="294" y="462.0" width="6" height="1.6"/>
<rect x="276" y="466.0" width="7" height="1.6"/><rect x="294" y="466.0" width="6" height="1.6"/>
<rect x="276" y="470.0" width="7" height="1.6"/><rect x="294" y="470.0" width="6" height="1.6"/>
<rect x="276" y="474.0" width="7" height="1.6"/><rect x="294" y="474.0" width="6" height="1.6"/>
<rect x="276" y="478.0" width="7" height="1.6"/><rect x="294" y="478.0" width="6" height="1.6"/>
<rect x="276" y="482.0" width="7" height="1.6"/><rect x="294" y="482.0" width="6" height="1.6"/>
<rect x="276" y="486.0" width="7" height="1.6"/><rect x="294" y="486.0" width="6" height="1.6"/>
<rect x="276" y="490.0" width="7" height="1.6"/><rect x="294" y="490.0" width="6" height="1.6"/>
<rect x="276" y="494.0" width="7" height="1.6"/><rect x="294" y="494.0" width="6" height="1.6"/>
<rect x="276" y="498.0" width="7" height="1.6"/><rect x="294" y="498.0" width="6" height="1.6"/>
<rect x="276" y="502.0" width="7" height="1.6"/><rect x="294" y="502.0" width="6" height="1.6"/>
<rect x="276" y="506.0" width="7" height="1.6"/><rect x="294" y="506.0" width="6" height="1.6"/>
<rect x="276" y="510.0" width="7" height="1.6"/><rect x="294" y="510.0" width="6" height="1.6"/>
<rect x="276" y="514.0" width="7" height="1.6"/><rect x="294" y="514.0" width="6" height="1.6"/>
<rect x="276" y="518.0" width="7" height="1.6"/><rect x="294" y="518.0" width="6" height="1.6"/>
<rect x="276" y="522.0" width="7" height="1.6"/><rect x="294" y="522.0" width="6" height="1.6"/>
<rect x="276" y="526.0" width="7" height="1.6"/><rect x="294" y="526.0" width="6" height="1.6"/>
<rect x="276" y="530.0" width="7" height="1.6"/><rect x="294" y="530.0" width="6" height="1.6"/>
<rect x="276" y="534.0" width="7" height="1.6"/><rect x="294" y="534.0" width="6" height="1.6"/>
<rect x="276" y="538.0" width="7" height="1.6"/><rect x="294" y="538.0" width="6" height="1.6"/>
<rect x="276" y="542.0" width="7" height="1.6"/><rect x="294" y="542.0" width="6" height="1.6"/>
<rect x="276" y="546.0" width="7" height="1.6"/><rect x="294" y="546.0" width="6" height="1.6"/>
<rect x="276" y="550.0" width="7" height="1.6"/><rect x="294" y="550.0" width="6" height="1.6"/>
<rect x="276" y="554.0" width="7" height="1.6"/><rect x="294" y="554.0" width="6" height="1.6"/>
<rect x="276" y="558.0" width="7" height="1.6"/><rect x="294" y="558.0" width="6" height="1.6"/>
<rect x="276" y="562.0" width="7" height="1.6"/><rect x="294" y="562.0" width="6" height="1.6"/>
<rect x="276" y="566.0" width="7" height="1.6"/><rect x="294" y="566.0" width="6" height="1.6"/>
<rect x="276" y="570.0" width="7" height="1.6"/><rect x="294" y="570.0" width="6" height="1.6"/>
<rect x="276" y="574.0" width="7" height="1.6"/><rect x="294" y="574.0" width="6" height="1.6"/>
<rect x="276" y="578.0" width="7" height="1.6"/><rect x="294" y="578.0" width="6" height="1.6"/>
<rect x="276" y="582.0" width="7" height="1.6"/><rect x="294" y="582.0" width="6" height="1.6"/>
<rect x="276" y="586.0" width="7" height="1.6"/><rect x="294" y="586.0" width="6" height="1.6"/>
<rect x="276" y="590.0" width="7" height="1.6"/><rect x="294" y="590.0" width="6" height="1.6"/>
<rect x="276" y="594.0" width="7" height="1.6"/><rect x="294" y="594.0" width="6" height="1.6"/>
<rect x="276" y="598.0" width="7" height="1.6"/><rect x="294" y="598.0" width="6" height="1.6"/>
<rect x="276" y="602.0" width="7" height="1.6"/><rect x="294" y="602.0" width="6" height="1.6"/>
<rect x="276" y="606.0" width="7" height="1.6"/><rect x="294" y="606.0" width="6" height="1.6"/>
<rect x="276" y="610.0" width="7" height="1.6"/><rect x="294" y="610.0" width="6" height="1.6"/>
<rect x="276" y="614.0" width="7" height="1.6"/><rect x="294" y="614.0" width="6" height="1.6"/>
<rect x="276" y="618.0" width="7" height="1.6"/><rect x="294" y="618.0" width="6" height="1.6"/>
<rect x="276" y="622.0" width="7" height="1.6"/><rect x="294" y="622.0" width="6" height="1.6"/>
<rect x="276" y="626.0" width="7" height="1.6"/><rect x="294" y="626.0" width="6" height="1.6"/>
<rect x="276" y="630.0" width="7" height="1.6"/><rect x="294" y="630.0" width="6" height="1.6"/>
<rect x="276" y="634.0" width="7" height="1.6"/><rect x="294" y="634.0" width="6" height="1.6"/>
<rect x="1098" y="473.0" width="6" height="1.6"/><rect x="1113" y="473.0" width="6" height="1.6"/>
<rect x="1098" y="477.0" width="6" height="1.6"/><rect x="1113" y="477.0" width="6" height="1.6"/>
<rect x="1098" y="481.0" width="6" height="1.6"/><rect x="1113" y="481.0" width="6" height="1.6"/>
<rect x="1098" y="485.0" width="6" height="1.6"/><rect x="1113" y="485.0" width="6" height="1.6"/>
<rect x="1098" y="489.0" width="6" height="1.6"/><rect x="1113" y="489.0" width="6" height="1.6"/>
<rect x="1098" y="493.0" width="6" height="1.6"/><rect x="1113" y="493.0" width="6" height="1.6"/>
<rect x="1098" y="497.0" width="6" height="1.6"/><rect x="1113" y="497.0" width="6" height="1.6"/>
<rect x="1098" y="501.0" width="6" height="1.6"/><rect x="1113" y="501.0" width="6" height="1.6"/>
<rect x="1098" y="505.0" width="6" height="1.6"/><rect x="1113" y="505.0" width="6" height="1.6"/>
<rect x="1098" y="509.0" width="6" height="1.6"/><rect x="1113" y="509.0" width="6" height="1.6"/>
<rect x="1098" y="513.0" width="6" height="1.6"/><rect x="1113" y="513.0" width="6" height="1.6"/>
<rect x="1098" y="517.0" width="6" height="1.6"/><rect x="1113" y="517.0" width="6" height="1.6"/>
<rect x="1098" y="521.0" width="6" height="1.6"/><rect x="1113" y="521.0" width="6" height="1.6"/>
<rect x="1098" y="525.0" width="6" height="1.6"/><rect x="1113" y="525.0" width="6" height="1.6"/>
<rect x="1098" y="529.0" width="6" height="1.6"/><rect x="1113" y="529.0" width="6" height="1.6"/>
<rect x="1098" y="533.0" width="6" height="1.6"/><rect x="1113" y="533.0" width="6" height="1.6"/>
<rect x="1098" y="537.0" width="6" height="1.6"/><rect x="1113" y="537.0" width="6" height="1.6"/>
<rect x="1098" y="541.0" width="6" height="1.6"/><rect x="1113" y="541.0" width="6" height="1.6"/>
<rect x="1098" y="545.0" width="6" height="1.6"/><rect x="1113" y="545.0" width="6" height="1.6"/>
<rect x="1098" y="549.0" width="6" height="1.6"/><rect x="1113" y="549.0" width="6" height="1.6"/>
<rect x="1098" y="553.0" width="6" height="1.6"/><rect x="1113" y="553.0" width="6" height="1.6"/>
<rect x="1098" y="557.0" width="6" height="1.6"/><rect x="1113" y="557.0" width="6" height="1.6"/>
<rect x="1098" y="561.0" width="6" height="1.6"/><rect x="1113" y="561.0" width="6" height="1.6"/>
<rect x="1098" y="565.0" width="6" height="1.6"/><rect x="1113" y="565.0" width="6" height="1.6"/>
<rect x="1098" y="569.0" width="6" height="1.6"/><rect x="1113" y="569.0" width="6" height="1.6"/>
<rect x="1098" y="573.0" width="6" height="1.6"/><rect x="1113" y="573.0" width="6" height="1.6"/>
<rect x="1098" y="577.0" width="6" height="1.6"/><rect x="1113" y="577.0" width="6" height="1.6"/>
<rect x="1098" y="581.0" width="6" height="1.6"/><rect x="1113" y="581.0" width="6" height="1.6"/>
<rect x="1098" y="585.0" width="6" height="1.6"/><rect x="1113" y="585.0" width="6" height="1.6"/>
<rect x="1098" y="589.0" width="6" height="1.6"/><rect x="1113" y="589.0" width="6" height="1.6"/>
<rect x="1098" y="593.0" width="6" height="1.6"/><rect x="1113" y="593.0" width="6" height="1.6"/>
<rect x="1098" y="597.0" width="6" height="1.6"/><rect x="1113" y="597.0" width="6" height="1.6"/>
<rect x="1098" y="601.0" width="6" height="1.6"/><rect x="1113" y="601.0" width="6" height="1.6"/>
<rect x="1098" y="605.0" width="6" height="1.6"/><rect x="1113" y="605.0" width="6" height="1.6"/>
<rect x="1098" y="609.0" width="6" height="1.6"/><rect x="1113" y="609.0" width="6" height="1.6"/>
<rect x="1098" y="613.0" width="6" height="1.6"/><rect x="1113" y="613.0" width="6" height="1.6"/>
<rect x="1098" y="617.0" width="6" height="1.6"/><rect x="1113" y="617.0" width="6" height="1.6"/>
<rect x="1098" y="621.0" width="6" height="1.6"/><rect x="1113" y="621.0" width="6" height="1.6"/>
<rect x="1098" y="625.0" width="6" height="1.6"/><rect x="1113" y="625.0" width="6" height="1.6"/>
<rect x="1098" y="629.0" width="6" height="1.6"/><rect x="1113" y="629.0" width="6" height="1.6"/>
<rect x="1098" y="633.0" width="6" height="1.6"/><rect x="1113" y="633.0" width="6" height="1.6"/>
</g>
<rect x="307.4" y="459" width="15.100000000000023" height="33" fill="#eca050"/>
<path d="M310.9 459V492M314.95 459V492M319.0 459V492" stroke="#000" stroke-width="0.9"/>
<path d="M307.4 466.5h15.1M307.4 474.0h15.1M307.4 481.5h15.1" stroke="#000" stroke-width="0.8" stroke-dasharray="3 2"/>
<path d="M311.9 462l2.2 2-2.2 2z M315.95 465.5l2.2 2-2.2 2z" fill="#000"/>
<path d="M311.9 469l2.2 2-2.2 2z M315.95 472.5l2.2 2-2.2 2z" fill="#000"/>
<path d="M311.9 476l2.2 2-2.2 2z M315.95 479.5l2.2 2-2.2 2z" fill="#000"/>
<path d="M311.9 483l2.2 2-2.2 2z M315.95 486.5l2.2 2-2.2 2z" fill="#000"/>
<rect x="307.4" y="492" width="15.100000000000023" height="22" fill="#dca468"/>
<path d="M308.4 494h4M314.4 494h3M310.4 495.5h5M318.5 495.5h3" stroke="#000" stroke-width="0.8"/>
<path d="M308.4 497h4M314.4 497h3M310.4 498.5h5M318.5 498.5h3" stroke="#000" stroke-width="0.8"/>
<path d="M308.4 500h4M314.4 500h3M310.4 501.5h5M318.5 501.5h3" stroke="#000" stroke-width="0.8"/>
<path d="M308.4 503h4M314.4 503h3M310.4 504.5h5M318.5 504.5h3" stroke="#000" stroke-width="0.8"/>
<path d="M308.4 506h4M314.4 506h3M310.4 507.5h5M318.5 507.5h3" stroke="#000" stroke-width="0.8"/>
<path d="M308.4 509h4M314.4 509h3M310.4 510.5h5M318.5 510.5h3" stroke="#000" stroke-width="0.8"/>
<path d="M308.4 512h4M314.4 512h3M310.4 513.5h5M318.5 513.5h3" stroke="#000" stroke-width="0.8"/>
<rect x="307.4" y="514" width="15.100000000000023" height="12" fill="#6c5434"/>
<rect x="310" y="515" width="1" height="1" fill="#c8a040"/>
<rect x="312" y="515" width="1" height="1" fill="#111"/>
<rect x="318" y="515" width="1" height="1" fill="#c8a040"/>
<rect x="320" y="515" width="1" height="1" fill="#111"/>
<rect x="308" y="517" width="1" height="1" fill="#c8a040"/>
<rect x="310" y="517" width="1" height="1" fill="#111"/>
<rect x="312" y="517" width="1" height="1" fill="#c8a040"/>
<rect x="316" y="517" width="1" height="1" fill="#c8a040"/>
<rect x="318" y="517" width="1" height="1" fill="#c8a040"/>
<rect x="320" y="517" width="1" height="1" fill="#c8a040"/>
<rect x="308" y="519" width="1" height="1" fill="#c8a040"/>
<rect x="310" y="519" width="1" height="1" fill="#c8a040"/>
<rect x="312" y="519" width="1" height="1" fill="#111"/>
<rect x="314" y="519" width="1" height="1" fill="#c8a040"/>
<rect x="316" y="519" width="1" height="1" fill="#c8a040"/>
<rect x="318" y="519" width="1" height="1" fill="#c8a040"/>
<rect x="310" y="521" width="1" height="1" fill="#111"/>
<rect x="312" y="521" width="1" height="1" fill="#c8a040"/>
<rect x="314" y="521" width="1" height="1" fill="#111"/>
<rect x="316" y="521" width="1" height="1" fill="#c8a040"/>
<rect x="318" y="521" width="1" height="1" fill="#111"/>
<rect x="320" y="521" width="1" height="1" fill="#111"/>
<rect x="308" y="523" width="1" height="1" fill="#c8a040"/>
<rect x="310" y="523" width="1" height="1" fill="#111"/>
<rect x="312" y="523" width="1" height="1" fill="#111"/>
<rect x="316" y="523" width="1" height="1" fill="#111"/>
<rect x="318" y="523" width="1" height="1" fill="#c8a040"/>
<rect x="320" y="523" width="1" height="1" fill="#111"/>
<rect x="308" y="525" width="1" height="1" fill="#c8a040"/>
<rect x="312" y="525" width="1" height="1" fill="#c8a040"/>
<rect x="316" y="525" width="1" height="1" fill="#c8a040"/>
<rect x="318" y="525" width="1" height="1" fill="#c8a040"/>
<rect x="320" y="525" width="1" height="1" fill="#c8a040"/>
<rect x="307.4" y="526" width="15.100000000000023" height="4.399999999999977" fill="#767676"/>
<rect x="307.4" y="526" width="15.100000000000023" height="4.399999999999977" fill="url(#bhatch)"/>
<rect x="307.4" y="459" width="15.100000000000023" height="71.39999999999998" fill="none" stroke="#000" stroke-width="1.3"/>
<path d="M323.6 459V530.4" stroke="#000" stroke-width="1"/>
<rect x="448.3" y="463" width="15.300000000000011" height="29" fill="#eca050"/>
<path d="M451.8 463V492M455.95000000000005 463V492M460.1 463V492" stroke="#000" stroke-width="0.9"/>
<path d="M448.3 470.5h15.3M448.3 478.0h15.3M448.3 485.5h15.3" stroke="#000" stroke-width="0.8" stroke-dasharray="3 2"/>
<path d="M452.8 466l2.2 2-2.2 2z M456.95000000000005 469.5l2.2 2-2.2 2z" fill="#000"/>
<path d="M452.8 473l2.2 2-2.2 2z M456.95000000000005 476.5l2.2 2-2.2 2z" fill="#000"/>
<path d="M452.8 480l2.2 2-2.2 2z M456.95000000000005 483.5l2.2 2-2.2 2z" fill="#000"/>
<path d="M452.8 487l2.2 2-2.2 2z M456.95000000000005 490.5l2.2 2-2.2 2z" fill="#000"/>
<rect x="448.3" y="492" width="15.300000000000011" height="20" fill="#dca468"/>
<path d="M449.3 494h4M455.3 494h3M451.3 495.5h5M459.6 495.5h3" stroke="#000" stroke-width="0.8"/>
<path d="M449.3 497h4M455.3 497h3M451.3 498.5h5M459.6 498.5h3" stroke="#000" stroke-width="0.8"/>
<path d="M449.3 500h4M455.3 500h3M451.3 501.5h5M459.6 501.5h3" stroke="#000" stroke-width="0.8"/>
<path d="M449.3 503h4M455.3 503h3M451.3 504.5h5M459.6 504.5h3" stroke="#000" stroke-width="0.8"/>
<path d="M449.3 506h4M455.3 506h3M451.3 507.5h5M459.6 507.5h3" stroke="#000" stroke-width="0.8"/>
<path d="M449.3 509h4M455.3 509h3M451.3 510.5h5M459.6 510.5h3" stroke="#000" stroke-width="0.8"/>
<rect x="448.3" y="512" width="15.300000000000011" height="15" fill="#6c5434"/>
<rect x="449" y="513" width="1" height="1" fill="#111"/>
<rect x="451" y="513" width="1" height="1" fill="#c8a040"/>
<rect x="453" y="513" width="1" height="1" fill="#c8a040"/>
<rect x="455" y="513" width="1" height="1" fill="#c8a040"/>
<rect x="457" y="513" width="1" height="1" fill="#c8a040"/>
<rect x="459" y="513" width="1" height="1" fill="#111"/>
<rect x="461" y="513" width="1" height="1" fill="#c8a040"/>
<rect x="451" y="515" width="1" height="1" fill="#111"/>
<rect x="453" y="515" width="1" height="1" fill="#c8a040"/>
<rect x="457" y="515" width="1" height="1" fill="#111"/>
<rect x="459" y="515" width="1" height="1" fill="#c8a040"/>
<rect x="461" y="515" width="1" height="1" fill="#c8a040"/>
<rect x="457" y="517" width="1" height="1" fill="#c8a040"/>
<rect x="461" y="517" width="1" height="1" fill="#111"/>
<rect x="451" y="519" width="1" height="1" fill="#c8a040"/>
<rect x="453" y="519" width="1" height="1" fill="#c8a040"/>
<rect x="455" y="519" width="1" height="1" fill="#c8a040"/>
<rect x="457" y="519" width="1" height="1" fill="#c8a040"/>
<rect x="461" y="519" width="1" height="1" fill="#111"/>
<rect x="449" y="521" width="1" height="1" fill="#c8a040"/>
<rect x="457" y="521" width="1" height="1" fill="#c8a040"/>
<rect x="461" y="521" width="1" height="1" fill="#c8a040"/>
<rect x="449" y="523" width="1" height="1" fill="#111"/>
<rect x="451" y="523" width="1" height="1" fill="#111"/>
<rect x="453" y="523" width="1" height="1" fill="#c8a040"/>
<rect x="455" y="523" width="1" height="1" fill="#c8a040"/>
<rect x="461" y="523" width="1" height="1" fill="#111"/>
<rect x="449" y="525" width="1" height="1" fill="#111"/>
<rect x="451" y="525" width="1" height="1" fill="#c8a040"/>
<rect x="455" y="525" width="1" height="1" fill="#c8a040"/>
<rect x="457" y="525" width="1" height="1" fill="#111"/>
<rect x="448.3" y="527" width="15.300000000000011" height="51" fill="#767676"/>
<rect x="448.3" y="527" width="15.300000000000011" height="51" fill="url(#bhatch)"/>
<rect x="448.3" y="578" width="15.300000000000011" height="21.399999999999977" fill="#b4b4b4"/>
<rect x="448.3" y="578" width="15.300000000000011" height="21.399999999999977" fill="url(#bhatch)"/>
<rect x="448.3" y="463" width="15.300000000000011" height="136.39999999999998" fill="none" stroke="#000" stroke-width="1.3"/>
<path d="M465.6 463V599.4" stroke="#000" stroke-width="1"/>
<rect x="609.6" y="466" width="15.699999999999932" height="29.600000000000023" fill="#eca050"/>
<path d="M613.1 466V495.6M617.45 466V495.6M621.8 466V495.6" stroke="#000" stroke-width="0.9"/>
<path d="M609.6 473.5h15.7M609.6 481.0h15.7M609.6 488.5h15.7" stroke="#000" stroke-width="0.8" stroke-dasharray="3 2"/>
<path d="M614.1 469l2.2 2-2.2 2z M618.45 472.5l2.2 2-2.2 2z" fill="#000"/>
<path d="M614.1 476l2.2 2-2.2 2z M618.45 479.5l2.2 2-2.2 2z" fill="#000"/>
<path d="M614.1 483l2.2 2-2.2 2z M618.45 486.5l2.2 2-2.2 2z" fill="#000"/>
<path d="M614.1 490l2.2 2-2.2 2z M618.45 493.5l2.2 2-2.2 2z" fill="#000"/>
<rect x="609.6" y="495.6" width="15.699999999999932" height="15.0" fill="#dca468"/>
<path d="M610.6 497h4M616.6 497h3M612.6 498.5h5M621.3 498.5h3" stroke="#000" stroke-width="0.8"/>
<path d="M610.6 500h4M616.6 500h3M612.6 501.5h5M621.3 501.5h3" stroke="#000" stroke-width="0.8"/>
<path d="M610.6 503h4M616.6 503h3M612.6 504.5h5M621.3 504.5h3" stroke="#000" stroke-width="0.8"/>
<path d="M610.6 506h4M616.6 506h3M612.6 507.5h5M621.3 507.5h3" stroke="#000" stroke-width="0.8"/>
<path d="M610.6 509h4M616.6 509h3M612.6 510.5h5M621.3 510.5h3" stroke="#000" stroke-width="0.8"/>
<rect x="609.6" y="510.6" width="15.699999999999932" height="12.799999999999955" fill="#6c5434"/>
<rect x="614" y="511" width="1" height="1" fill="#111"/>
<rect x="616" y="511" width="1" height="1" fill="#c8a040"/>
<rect x="620" y="511" width="1" height="1" fill="#c8a040"/>
<rect x="622" y="511" width="1" height="1" fill="#111"/>
<rect x="624" y="511" width="1" height="1" fill="#111"/>
<rect x="610" y="513" width="1" height="1" fill="#c8a040"/>
<rect x="614" y="513" width="1" height="1" fill="#c8a040"/>
<rect x="618" y="513" width="1" height="1" fill="#c8a040"/>
<rect x="620" y="513" width="1" height="1" fill="#c8a040"/>
<rect x="622" y="513" width="1" height="1" fill="#111"/>
<rect x="624" y="513" width="1" height="1" fill="#c8a040"/>
<rect x="612" y="515" width="1" height="1" fill="#111"/>
<rect x="614" y="515" width="1" height="1" fill="#c8a040"/>
<rect x="616" y="515" width="1" height="1" fill="#c8a040"/>
<rect x="618" y="515" width="1" height="1" fill="#111"/>
<rect x="620" y="515" width="1" height="1" fill="#c8a040"/>
<rect x="622" y="515" width="1" height="1" fill="#c8a040"/>
<rect x="624" y="515" width="1" height="1" fill="#c8a040"/>
<rect x="610" y="517" width="1" height="1" fill="#c8a040"/>
<rect x="620" y="517" width="1" height="1" fill="#111"/>
<rect x="622" y="517" width="1" height="1" fill="#111"/>
<rect x="610" y="519" width="1" height="1" fill="#c8a040"/>
<rect x="612" y="519" width="1" height="1" fill="#c8a040"/>
<rect x="616" y="519" width="1" height="1" fill="#c8a040"/>
<rect x="618" y="519" width="1" height="1" fill="#c8a040"/>
<rect x="620" y="519" width="1" height="1" fill="#c8a040"/>
<rect x="622" y="519" width="1" height="1" fill="#c8a040"/>
<rect x="624" y="519" width="1" height="1" fill="#111"/>
<rect x="610" y="521" width="1" height="1" fill="#c8a040"/>
<rect x="612" y="521" width="1" height="1" fill="#c8a040"/>
<rect x="618" y="521" width="1" height="1" fill="#c8a040"/>
<rect x="620" y="521" width="1" height="1" fill="#c8a040"/>
<rect x="624" y="521" width="1" height="1" fill="#c8a040"/>
<rect x="609.6" y="523.4" width="15.699999999999932" height="58.60000000000002" fill="#767676"/>
<rect x="609.6" y="523.4" width="15.699999999999932" height="58.60000000000002" fill="url(#bhatch)"/>
<rect x="609.6" y="582" width="15.699999999999932" height="20.299999999999955" fill="#b4b4b4"/>
<rect x="609.6" y="582" width="15.699999999999932" height="20.299999999999955" fill="url(#bhatch)"/>
<rect x="609.6" y="466" width="15.699999999999932" height="136.29999999999995" fill="none" stroke="#000" stroke-width="1.3"/>
<path d="M626.3 466V602.3" stroke="#000" stroke-width="1"/>
<rect x="903.5" y="470" width="15.0" height="20" fill="#eca050"/>
<path d="M907.0 470V490M911.0 470V490M915.0 470V490" stroke="#000" stroke-width="0.9"/>
<path d="M903.5 477.5h15.0M903.5 485.0h15.0" stroke="#000" stroke-width="0.8" stroke-dasharray="3 2"/>
<path d="M908.0 473l2.2 2-2.2 2z M912.0 476.5l2.2 2-2.2 2z" fill="#000"/>
<path d="M908.0 480l2.2 2-2.2 2z M912.0 483.5l2.2 2-2.2 2z" fill="#000"/>
<rect x="903.5" y="490" width="15.0" height="15" fill="#dca468"/>
<path d="M904.5 492h4M910.5 492h3M906.5 493.5h5M914.5 493.5h3" stroke="#000" stroke-width="0.8"/>
<path d="M904.5 495h4M910.5 495h3M906.5 496.5h5M914.5 496.5h3" stroke="#000" stroke-width="0.8"/>
<path d="M904.5 498h4M910.5 498h3M906.5 499.5h5M914.5 499.5h3" stroke="#000" stroke-width="0.8"/>
<path d="M904.5 501h4M910.5 501h3M906.5 502.5h5M914.5 502.5h3" stroke="#000" stroke-width="0.8"/>
<path d="M904.5 504h4M910.5 504h3M906.5 505.5h5M914.5 505.5h3" stroke="#000" stroke-width="0.8"/>
<rect x="903.5" y="505" width="15.0" height="22" fill="#6c5434"/>
<rect x="904" y="506" width="1" height="1" fill="#c8a040"/>
<rect x="908" y="506" width="1" height="1" fill="#c8a040"/>
<rect x="910" y="506" width="1" height="1" fill="#c8a040"/>
<rect x="916" y="506" width="1" height="1" fill="#c8a040"/>
<rect x="904" y="508" width="1" height="1" fill="#c8a040"/>
<rect x="908" y="508" width="1" height="1" fill="#c8a040"/>
<rect x="910" y="508" width="1" height="1" fill="#c8a040"/>
<rect x="912" y="508" width="1" height="1" fill="#c8a040"/>
<rect x="914" y="508" width="1" height="1" fill="#111"/>
<rect x="904" y="510" width="1" height="1" fill="#111"/>
<rect x="906" y="510" width="1" height="1" fill="#c8a040"/>
<rect x="910" y="510" width="1" height="1" fill="#111"/>
<rect x="914" y="510" width="1" height="1" fill="#111"/>
<rect x="916" y="510" width="1" height="1" fill="#c8a040"/>
<rect x="904" y="512" width="1" height="1" fill="#111"/>
<rect x="908" y="512" width="1" height="1" fill="#c8a040"/>
<rect x="914" y="512" width="1" height="1" fill="#c8a040"/>
<rect x="916" y="512" width="1" height="1" fill="#c8a040"/>
<rect x="904" y="514" width="1" height="1" fill="#c8a040"/>
<rect x="906" y="514" width="1" height="1" fill="#c8a040"/>
<rect x="908" y="514" width="1" height="1" fill="#c8a040"/>
<rect x="910" y="514" width="1" height="1" fill="#111"/>
<rect x="914" y="514" width="1" height="1" fill="#c8a040"/>
<rect x="916" y="514" width="1" height="1" fill="#111"/>
<rect x="904" y="516" width="1" height="1" fill="#c8a040"/>
<rect x="906" y="516" width="1" height="1" fill="#c8a040"/>
<rect x="908" y="516" width="1" height="1" fill="#c8a040"/>
<rect x="910" y="516" width="1" height="1" fill="#111"/>
<rect x="914" y="516" width="1" height="1" fill="#c8a040"/>
<rect x="916" y="516" width="1" height="1" fill="#c8a040"/>
<rect x="904" y="518" width="1" height="1" fill="#c8a040"/>
<rect x="906" y="518" width="1" height="1" fill="#c8a040"/>
<rect x="908" y="518" width="1" height="1" fill="#c8a040"/>
<rect x="910" y="518" width="1" height="1" fill="#c8a040"/>
<rect x="912" y="518" width="1" height="1" fill="#111"/>
<rect x="914" y="518" width="1" height="1" fill="#c8a040"/>
<rect x="916" y="518" width="1" height="1" fill="#c8a040"/>
<rect x="904" y="520" width="1" height="1" fill="#c8a040"/>
<rect x="906" y="520" width="1" height="1" fill="#111"/>
<rect x="908" y="520" width="1" height="1" fill="#111"/>
<rect x="912" y="520" width="1" height="1" fill="#c8a040"/>
<rect x="914" y="520" width="1" height="1" fill="#111"/>
<rect x="906" y="522" width="1" height="1" fill="#c8a040"/>
<rect x="912" y="522" width="1" height="1" fill="#c8a040"/>
<rect x="916" y="522" width="1" height="1" fill="#c8a040"/>
<rect x="906" y="524" width="1" height="1" fill="#c8a040"/>
<rect x="910" y="524" width="1" height="1" fill="#c8a040"/>
<rect x="912" y="524" width="1" height="1" fill="#111"/>
<rect x="916" y="524" width="1" height="1" fill="#c8a040"/>
<rect x="912" y="526" width="1" height="1" fill="#111"/>
<rect x="914" y="526" width="1" height="1" fill="#c8a040"/>
<rect x="903.5" y="527" width="15.0" height="21" fill="#767676"/>
<rect x="903.5" y="527" width="15.0" height="21" fill="url(#bhatch)"/>
<rect x="903.5" y="548" width="15.0" height="16.299999999999955" fill="#b4b4b4"/>
<rect x="903.5" y="548" width="15.0" height="16.299999999999955" fill="url(#bhatch)"/>
<rect x="903.5" y="470" width="15.0" height="94.29999999999995" fill="none" stroke="#000" stroke-width="1.3"/>
<path d="M921.5 470V564.3" stroke="#000" stroke-width="1"/>
<rect x="336.3" y="459" width="16.19999999999999" height="71.39999999999998" fill="none" stroke="#000" stroke-width="1.1"/>
<path d="M336.3 492h16.19999999999999M336.3 498h16.19999999999999M336.3 503h16.19999999999999M336.3 507h16.19999999999999M336.3 512h16.19999999999999M336.3 517h16.19999999999999M336.3 522h16.19999999999999M336.3 526h16.19999999999999" stroke="#000" stroke-width="1"/>
<rect x="477.4" y="463" width="15.5" height="136.39999999999998" fill="none" stroke="#000" stroke-width="1.1"/>
<path d="M477.4 491.3h15.5M477.4 497.7h15.5M477.4 505h15.5M477.4 510.3h15.5M477.4 515.5h15.5M477.4 522h15.5M477.4 527h15.5M477.4 551h15.5M477.4 562.6h15.5M477.4 578h15.5" stroke="#000" stroke-width="1"/>
<rect x="638.4" y="464.6" width="16.300000000000068" height="137.69999999999993" fill="none" stroke="#000" stroke-width="1.1"/>
<path d="M638.4 495.6h16.300000000000068M638.4 504.8h16.300000000000068M638.4 512h16.300000000000068M638.4 515.4h16.300000000000068M638.4 524.5h16.300000000000068M638.4 534h16.300000000000068M638.4 552.5h16.300000000000068M638.4 582h16.300000000000068" stroke="#000" stroke-width="1"/>
<rect x="932.4" y="469" width="15.0" height="95.29999999999995" fill="none" stroke="#000" stroke-width="1.1"/>
<path d="M932.4 481h15.0M932.4 490h15.0M932.4 501h15.0M932.4 509h15.0M932.4 514h15.0M932.4 520h15.0M932.4 530h15.0M932.4 548h15.0" stroke="#000" stroke-width="1"/>
<g stroke="#000" stroke-width="1.1">
<path d="M315.5 453V655M435.5 457V655M455.5 599V655M606.5 459V655M617.5 602V655M898.5 464V655M903.5 564V655M315.5 671V675.5M435.5 671V675.5M455.5 671V675.5M606.5 671V675.5M617.5 671V675.5M898.5 671V675.5M903.5 671V675.5"/>
<path d="M617.5 459V465M903.5 464V470M455.5 458V463"/>
</g>
<path d="M312.5 455h6l-3 3z" fill="#000"/>
<path d="M432.5 457h6l-3 3z" fill="#000"/>
<path d="M452.5 459h6l-3 3z" fill="#000"/>
<path d="M603.5 460h6l-3 3z" fill="#000"/>
<path d="M614.5 460h6l-3 3z" fill="#000"/>
<path d="M895.5 464h6l-3 3z" fill="#000"/>
<path d="M900.5 464h6l-3 3z" fill="#000"/>
<path d="M315 675.5H1090" stroke="#000" stroke-width="1"/><path d="M315.5 670l1.2 2.6 2.8.3-2.1 1.9.6 2.8-2.5-1.4-2.5 1.4.6-2.8-2.1-1.9 2.8-.3z" fill="#000"/>
<circle cx="393" cy="675.5" r="1.3" fill="#fff" stroke="#000" stroke-width="0.6"/>
<circle cx="550" cy="675.5" r="1.3" fill="#fff" stroke="#000" stroke-width="0.6"/>
<circle cx="707" cy="675.5" r="1.3" fill="#fff" stroke="#000" stroke-width="0.6"/>
<circle cx="865" cy="675.5" r="1.3" fill="#fff" stroke="#000" stroke-width="0.6"/>
<circle cx="1022" cy="675.5" r="1.3" fill="#fff" stroke="#000" stroke-width="0.6"/>
<path d="M384 465V552M416 465V552" stroke="#000" stroke-width="0.8" stroke-dasharray="1 1.5"/>
<polyline points="385.0,465.0 393.2,465.0 386.5,466.0 385.1,467.0 385.6,469.0 384.4,471.0 385.6,473.0 393.7,473.0 386.4,474.0 384.5,475.0 386.4,477.0 387.0,479.0 385.0,481.0 386.2,483.0 392.9,483.0 388.1,484.0 385.7,485.0 385.4,487.0 386.5,489.0 386.2,491.0 386.3,493.0 386.6,495.0 387.2,497.0 395.4,497.0 388.3,498.0 386.6,499.0 388.3,501.0 387.6,503.0 393.3,503.0 389.1,504.0 388.8,505.0 388.7,507.0 387.6,509.0 389.1,511.0 388.3,513.0 387.3,515.0 389.3,517.0 387.9,519.0 389.3,521.0 388.7,523.0 389.2,525.0 389.3,527.0 389.4,529.0 389.6,531.0 393.8,531.0 391.0,532.0 389.9,533.0 389.0,535.0 391.1,537.0 390.2,539.0 389.6,541.0 391.5,543.0 390.4,545.0 390.8,547.0 389.6,549.0 391.7,551.0 391.0,552.0" fill="none" stroke="#1010f0" stroke-width="1.3"/>
<polyline points="417.1,465.0 417.1,467.0 417.5,469.0 417.5,471.0 418.3,473.0 417.8,475.0 423.3,475.0 418.0,476.0 418.4,477.0 418.1,479.0 427.0,479.0 420.1,480.0 418.6,481.0 417.3,483.0 417.6,485.0 418.2,487.0 418.9,489.0 425.3,489.0 419.8,490.0 419.1,491.0 419.3,493.0 419.3,495.0 420.8,497.0 420.6,499.0 419.5,501.0 419.6,503.0 420.2,505.0 428.0,505.0 421.0,506.0 420.1,507.0 421.4,509.0 420.7,511.0 425.7,511.0 422.5,512.0 422.0,513.0 420.0,515.0 421.9,517.0 420.4,519.0 422.6,521.0 420.7,523.0 420.9,525.0 422.0,527.0 430.0,527.0 422.3,528.0 422.0,529.0 422.9,531.0 422.5,533.0 429.7,533.0 422.7,534.0 421.9,535.0 423.9,537.0 422.5,539.0 422.4,541.0 424.1,543.0 422.5,545.0 422.9,547.0 424.4,549.0 423.4,551.0 424.0,552.0" fill="none" stroke="#f01010" stroke-width="1.3"/>
<path d="M384 552h20M416 552h20" stroke="#000" stroke-width="1"/>
<path d="M384 550.5v3M416 550.5v3" stroke="#000" stroke-width="0.8"/>
<path d="M388 550.5v3M420 550.5v3" stroke="#000" stroke-width="0.8"/>
<path d="M392 550.5v3M424 550.5v3" stroke="#000" stroke-width="0.8"/>
<path d="M396 550.5v3M428 550.5v3" stroke="#000" stroke-width="0.8"/>
<path d="M400 550.5v3M432 550.5v3" stroke="#000" stroke-width="0.8"/>
<path d="M404 550.5v3M436 550.5v3" stroke="#000" stroke-width="0.8"/>
<path d="M381 471.0h3M413 471.0h3" stroke="#000" stroke-width="0.9"/>
<path d="M381 477.5h3M413 477.5h3" stroke="#000" stroke-width="0.9"/>
<path d="M381 484.0h3M413 484.0h3" stroke="#000" stroke-width="0.9"/>
<path d="M381 490.5h3M413 490.5h3" stroke="#000" stroke-width="0.9"/>
<path d="M381 497.0h3M413 497.0h3" stroke="#000" stroke-width="0.9"/>
<path d="M381 503.5h3M413 503.5h3" stroke="#000" stroke-width="0.9"/>
<path d="M381 510.0h3M413 510.0h3" stroke="#000" stroke-width="0.9"/>
<path d="M381 516.5h3M413 516.5h3" stroke="#000" stroke-width="0.9"/>
<path d="M381 523.0h3M413 523.0h3" stroke="#000" stroke-width="0.9"/>
<path d="M381 529.5h3M413 529.5h3" stroke="#000" stroke-width="0.9"/>
<path d="M381 536.0h3M413 536.0h3" stroke="#000" stroke-width="0.9"/>
<path d="M381 542.5h3M413 542.5h3" stroke="#000" stroke-width="0.9"/>
<path d="M555 465V560.4M588 465V560.4" stroke="#000" stroke-width="0.8" stroke-dasharray="1 1.5"/>
<polyline points="557.1,465.0 556.1,467.0 560.6,467.0 557.8,468.0 556.7,469.0 556.6,471.0 556.7,473.0 556.5,475.0 557.3,477.0 558.0,479.0 556.9,481.0 556.0,483.0 557.3,485.0 563.6,485.0 557.9,486.0 558.3,487.0 557.7,489.0 556.5,491.0 556.9,493.0 559.1,495.0 557.2,497.0 558.9,499.0 559.2,501.0 559.1,503.0 559.7,505.0 557.8,507.0 559.3,509.0 559.0,511.0 560.0,513.0 559.9,515.0 560.2,517.0 559.3,519.0 560.5,521.0 559.6,523.0 559.4,525.0 559.1,527.0 559.5,529.0 559.7,531.0 560.8,533.0 560.4,535.0 560.7,537.0 560.0,539.0 561.8,541.0 559.9,543.0 561.6,545.0 560.4,547.0 560.2,549.0 560.9,551.0 562.4,553.0 561.7,555.0 568.3,555.0 563.4,556.0 561.1,557.0 561.7,559.0 562.0,560.4" fill="none" stroke="#1010f0" stroke-width="1.3"/>
<polyline points="589.4,465.0 588.3,467.0 589.3,469.0 595.2,469.0 589.8,470.0 589.9,471.0 589.7,473.0 588.9,475.0 589.1,477.0 589.0,479.0 589.2,481.0 589.9,483.0 591.3,485.0 590.6,487.0 594.9,487.0 592.4,488.0 589.8,489.0 592.0,491.0 591.1,493.0 597.2,493.0 591.3,494.0 591.5,495.0 591.8,497.0 591.5,499.0 596.4,499.0 593.1,500.0 591.4,501.0 591.7,503.0 590.8,505.0 593.2,507.0 592.6,509.0 592.0,511.0 592.9,513.0 592.7,515.0 597.8,515.0 593.4,516.0 593.6,517.0 591.8,519.0 592.9,521.0 592.6,523.0 593.1,525.0 592.6,527.0 592.9,529.0 592.7,531.0 593.6,533.0 593.1,535.0 593.6,537.0 594.4,539.0 594.5,541.0 593.9,543.0 594.5,545.0 595.6,547.0 594.0,549.0 596.0,551.0 594.8,553.0 595.6,555.0 599.8,555.0 596.8,556.0 596.9,557.0 594.8,559.0 596.0,560.4" fill="none" stroke="#f01010" stroke-width="1.3"/>
<path d="M555 560.4h20M588 560.4h20" stroke="#000" stroke-width="1"/>
<path d="M555 558.9v3M588 558.9v3" stroke="#000" stroke-width="0.8"/>
<path d="M559 558.9v3M592 558.9v3" stroke="#000" stroke-width="0.8"/>
<path d="M563 558.9v3M596 558.9v3" stroke="#000" stroke-width="0.8"/>
<path d="M567 558.9v3M600 558.9v3" stroke="#000" stroke-width="0.8"/>
<path d="M571 558.9v3M604 558.9v3" stroke="#000" stroke-width="0.8"/>
<path d="M575 558.9v3M608 558.9v3" stroke="#000" stroke-width="0.8"/>
<path d="M552 471.0h3M585 471.0h3" stroke="#000" stroke-width="0.9"/>
<path d="M552 477.5h3M585 477.5h3" stroke="#000" stroke-width="0.9"/>
<path d="M552 484.0h3M585 484.0h3" stroke="#000" stroke-width="0.9"/>
<path d="M552 490.5h3M585 490.5h3" stroke="#000" stroke-width="0.9"/>
<path d="M552 497.0h3M585 497.0h3" stroke="#000" stroke-width="0.9"/>
<path d="M552 503.5h3M585 503.5h3" stroke="#000" stroke-width="0.9"/>
<path d="M552 510.0h3M585 510.0h3" stroke="#000" stroke-width="0.9"/>
<path d="M552 516.5h3M585 516.5h3" stroke="#000" stroke-width="0.9"/>
<path d="M552 523.0h3M585 523.0h3" stroke="#000" stroke-width="0.9"/>
<path d="M552 529.5h3M585 529.5h3" stroke="#000" stroke-width="0.9"/>
<path d="M552 536.0h3M585 536.0h3" stroke="#000" stroke-width="0.9"/>
<path d="M552 542.5h3M585 542.5h3" stroke="#000" stroke-width="0.9"/>
<path d="M848 468V521.4M879 468V521.4" stroke="#000" stroke-width="0.8" stroke-dasharray="1 1.5"/>
<polyline points="849.1,468.0 849.5,470.0 848.4,472.0 849.7,474.0 857.9,474.0 850.2,475.0 851.1,476.0 850.9,478.0 850.7,480.0 850.9,482.0 850.9,484.0 851.4,486.0 851.2,488.0 859.0,488.0 852.4,489.0 850.3,490.0 851.6,492.0 852.8,494.0 853.2,496.0 853.1,498.0 853.6,500.0 851.9,502.0 853.0,504.0 858.1,504.0 855.0,505.0 853.6,506.0 853.5,508.0 853.4,510.0 854.1,512.0 854.6,514.0 855.2,516.0 855.0,518.0 855.7,520.0 855.0,521.4" fill="none" stroke="#1010f0" stroke-width="1.3"/>
<polyline points="880.4,468.0 881.1,470.0 879.9,472.0 880.8,474.0 885.9,474.0 882.3,475.0 881.0,476.0 887.7,476.0 881.5,477.0 881.1,478.0 881.8,480.0 881.8,482.0 887.2,482.0 882.1,483.0 882.8,484.0 883.1,486.0 883.7,488.0 882.3,490.0 883.1,492.0 883.6,494.0 883.3,496.0 883.5,498.0 884.2,500.0 892.3,500.0 885.8,501.0 884.9,502.0 885.3,504.0 885.0,506.0 892.4,506.0 885.9,507.0 884.5,508.0 884.9,510.0 886.0,512.0 885.1,514.0 885.7,516.0 885.8,518.0 885.8,520.0 887.0,521.4" fill="none" stroke="#f01010" stroke-width="1.3"/>
<path d="M848 521.4h20M879 521.4h20" stroke="#000" stroke-width="1"/>
<path d="M848 519.9v3M879 519.9v3" stroke="#000" stroke-width="0.8"/>
<path d="M852 519.9v3M883 519.9v3" stroke="#000" stroke-width="0.8"/>
<path d="M856 519.9v3M887 519.9v3" stroke="#000" stroke-width="0.8"/>
<path d="M860 519.9v3M891 519.9v3" stroke="#000" stroke-width="0.8"/>
<path d="M864 519.9v3M895 519.9v3" stroke="#000" stroke-width="0.8"/>
<path d="M868 519.9v3M899 519.9v3" stroke="#000" stroke-width="0.8"/>
<path d="M845 474.0h3M876 474.0h3" stroke="#000" stroke-width="0.9"/>
<path d="M845 480.5h3M876 480.5h3" stroke="#000" stroke-width="0.9"/>
<path d="M845 487.0h3M876 487.0h3" stroke="#000" stroke-width="0.9"/>
<path d="M845 493.5h3M876 493.5h3" stroke="#000" stroke-width="0.9"/>
<path d="M845 500.0h3M876 500.0h3" stroke="#000" stroke-width="0.9"/>
<path d="M845 506.5h3M876 506.5h3" stroke="#000" stroke-width="0.9"/>
<path d="M845 513.0h3M876 513.0h3" stroke="#000" stroke-width="0.9"/>
<g stroke="#c8a8b8" stroke-width="0.8" stroke-dasharray="1 1">
<path d="M345 434V459"/>
<path d="M398 447V463"/>
<path d="M429 452V463"/>
<path d="M484 436V463"/>
<path d="M565 446V464"/>
<path d="M593 449V464"/>
<path d="M647 438V465"/>
<path d="M858 455V468"/>
<path d="M888 457V468"/>
<path d="M939 444V469"/>
</g>
<g fill="#e2dae2">
<rect x="308" y="447" width="8" height="1.6"/>
<rect x="306" y="451" width="8" height="1.6"/>
<rect x="318" y="455" width="8" height="1.6"/>
<rect x="430" y="448" width="8" height="1.6"/>
<rect x="425" y="452" width="8" height="1.6"/>
<rect x="440" y="456" width="8" height="1.6"/>
<rect x="446" y="450" width="8" height="1.6"/>
<rect x="447" y="454" width="8" height="1.6"/>
<rect x="458" y="457" width="8" height="1.6"/>
<rect x="604" y="449" width="8" height="1.6"/>
<rect x="604" y="453" width="8" height="1.6"/>
<rect x="616" y="449" width="8" height="1.6"/>
<rect x="616" y="453" width="8" height="1.6"/>
<rect x="625" y="457" width="8" height="1.6"/>
<rect x="897" y="463" width="8" height="1.6"/>
<rect x="909" y="463" width="8" height="1.6"/>
<rect x="918" y="466" width="8" height="1.6"/>
<rect x="297" y="662" width="5" height="1.6"/>
<rect x="294" y="671" width="5" height="1.6"/>
<rect x="300" y="679" width="5" height="1.6"/>
<rect x="312" y="662" width="5" height="1.6"/>
<rect x="312" y="679" width="5" height="1.6"/>
<rect x="432" y="662" width="5" height="1.6"/>
<rect x="453" y="662" width="5" height="1.6"/>
<rect x="604" y="662" width="5" height="1.6"/>
<rect x="615" y="662" width="5" height="1.6"/>
<rect x="896" y="662" width="5" height="1.6"/>
<rect x="902" y="662" width="5" height="1.6"/>
<rect x="390" y="679" width="5" height="1.6"/>
<rect x="470" y="679" width="5" height="1.6"/>
<rect x="548" y="679" width="5" height="1.6"/>
<rect x="705" y="679" width="5" height="1.6"/>
<rect x="862" y="679" width="5" height="1.6"/>
<rect x="940" y="679" width="5" height="1.6"/>
<rect x="1020" y="679" width="5" height="1.6"/>
<rect x="315" y="689" width="5" height="1.6"/>
<rect x="435" y="689" width="5" height="1.6"/>
<rect x="455" y="689" width="5" height="1.6"/>
<rect x="606" y="689" width="5" height="1.6"/>
<rect x="617" y="689" width="5" height="1.6"/>
<rect x="898" y="689" width="5" height="1.6"/>
<rect x="903" y="689" width="5" height="1.6"/>
</g>
<g fill="#505050" opacity="0.6">
<rect x="510" y="607" width="14" height="1.3"/>
<rect x="765" y="549" width="14" height="1.3"/>
<rect x="703" y="529" width="14" height="1.3"/>
<rect x="762" y="558" width="14" height="1.3"/>
<rect x="418" y="524" width="14" height="1.3"/>
<rect x="700" y="607" width="14" height="1.3"/>
<rect x="1040" y="507" width="14" height="1.3"/>
</g>
<g font-family="Liberation Sans" fill="#222">
<text x="1199" y="422.5" font-size="6.2" textLength="24" lengthAdjust="spacingAndGlyphs">LEGENDA</text><path d="M1199 424h24" stroke="#000" stroke-width="0.9"/>
<text x="1199" y="433.5" font-size="4.5" fill="#555" textLength="17" lengthAdjust="spacingAndGlyphs">PODLOŽÍ</text>
<rect x="1198.5" y="439.3" width="136" height="67.7" fill="none" stroke="#000" stroke-width="1.1" stroke-dasharray="2.5 1.8"/>
<rect x="1202" y="440.2" width="16" height="7" fill="#c4c4c4"/>
<rect x="1220" y="441.2" width="23" height="2.5" fill="#d4ccd4"/>
<rect x="1202" y="448.2" width="16" height="7" fill="#8c7020"/>
<rect x="1220" y="449.2" width="32" height="2.5" fill="#d4ccd4"/>
<rect x="1202" y="456.2" width="16" height="7" fill="#705038"/>
<rect x="1220" y="457.2" width="35" height="2.5" fill="#d4ccd4"/>
<rect x="1202" y="464.2" width="16" height="7" fill="#d8a878"/>
<rect x="1220" y="465.2" width="23" height="2.5" fill="#d4ccd4"/>
<rect x="1202" y="472.2" width="16" height="7" fill="#f0a050"/>
<rect x="1220" y="473.2" width="31" height="2.5" fill="#d4ccd4"/>
<rect x="1202" y="480.2" width="16" height="7" fill="#e8e8e8"/>
<rect x="1220" y="481.2" width="24" height="2.5" fill="#d4ccd4"/>
<rect x="1202" y="488.2" width="16" height="7" fill="#d0d0d0"/>
<rect x="1220" y="489.2" width="27" height="2.5" fill="#d4ccd4"/>
<rect x="1202" y="496.2" width="16" height="7" fill="#e0ccbc"/>
<rect x="1220" y="497.2" width="40" height="2.5" fill="#d4ccd4"/>
<rect x="1274" y="448.2" width="16" height="7" fill="#909090"/>
<rect x="1291.5" y="449.2" width="37" height="2.5" fill="#d4ccd4"/>
<rect x="1274" y="456.2" width="16" height="7" fill="#707070"/>
<rect x="1291.5" y="457.2" width="34" height="2.5" fill="#d4ccd4"/>
<rect x="1274" y="464.2" width="16" height="7" fill="#b47438"/>
<rect x="1291.5" y="465.2" width="23" height="2.5" fill="#d4ccd4"/>
<rect x="1274" y="472.2" width="16" height="7" fill="#d08848"/>
<rect x="1291.5" y="473.2" width="14" height="2.5" fill="#d4ccd4"/>
<rect x="1274" y="480.2" width="16" height="7" fill="#808080"/>
<rect x="1291.5" y="481.2" width="27" height="2.5" fill="#d4ccd4"/>
<rect x="1274" y="488.2" width="16" height="7" fill="#d8d8d8"/>
<rect x="1291.5" y="489.2" width="35" height="2.5" fill="#d4ccd4"/>
<rect x="1274" y="496.2" width="16" height="7" fill="#d4e4c8"/>
<rect x="1291.5" y="497.2" width="31" height="2.5" fill="#d4ccd4"/>
<text x="1199" y="518" font-size="4.5" fill="#555" textLength="46" lengthAdjust="spacingAndGlyphs">GEOFYZIKÁLNÍ MĚŘENÍ</text>
<rect x="1203" y="524.2" width="69.2" height="24.4" fill="none" stroke="#000" stroke-width="1.1" stroke-dasharray="2.5 1.8"/>
<rect x="1203" y="524.5" width="10.5" height="5.6" fill="#1e80f0"/>
<rect x="1216" y="526.0" width="15" height="2" fill="#b0a8b0"/>
<rect x="1203" y="530.6" width="10.5" height="5.6" fill="#00e0f0"/>
<rect x="1216" y="532.1" width="15" height="2" fill="#b0a8b0"/>
<rect x="1203" y="536.7" width="10.5" height="5.6" fill="#80f000"/>
<rect x="1216" y="538.2" width="15" height="2" fill="#b0a8b0"/>
<rect x="1203" y="542.8" width="10.5" height="5.6" fill="#f0f000"/>
<rect x="1216" y="544.3" width="15" height="2" fill="#b0a8b0"/>
<rect x="1244" y="524.5" width="10.5" height="5.6" fill="#f08000"/>
<rect x="1256" y="526.0" width="15" height="2" fill="#b0a8b0"/>
<rect x="1244" y="530.6" width="10.5" height="5.6" fill="#f03000"/>
<rect x="1256" y="532.1" width="15" height="2" fill="#b0a8b0"/>
<rect x="1244" y="536.7" width="10.5" height="5.6" fill="#f000a0"/>
<rect x="1256" y="538.2" width="15" height="2" fill="#b0a8b0"/>
<rect x="1244" y="542.8" width="10.5" height="5.6" fill="#f000f0"/>
<rect x="1256" y="544.3" width="15" height="2" fill="#b0a8b0"/>
<text x="1199" y="565.5" font-size="6.2" textLength="27" lengthAdjust="spacingAndGlyphs">POZNÁMKY</text><path d="M1199 566.5h27" stroke="#000" stroke-width="0.9"/>
<rect x="1203" y="572.4" width="121.5" height="38.6" fill="none" stroke="#000" stroke-width="1.1" stroke-dasharray="2.5 1.8"/>
<rect x="1204" y="575" width="105" height="1.4" fill="#a8a0b0"/>
<rect x="1204" y="578" width="120" height="1.4" fill="#a8a0b0"/>
<rect x="1204" y="580.5" width="3" height="1.4" fill="#a8a0b0"/>
<rect x="1204" y="588" width="118" height="1.4" fill="#a8a0b0"/>
<rect x="1204" y="591" width="27" height="1.4" fill="#a8a0b0"/>
<rect x="1204" y="599" width="118" height="1.4" fill="#a8a0b0"/>
<rect x="1204" y="602" width="8" height="1.4" fill="#a8a0b0"/>
</g>
<g stroke="#000" stroke-width="1" fill="none">
<path d="M1188.4 629.3H1349.4M1188.4 633.2H1349.4M1188.4 637.6H1349.4M1188.4 642.1H1349.4M1188.4 646.4H1349.4M1188.4 650.8H1349.4M1188.4 655.1H1349.4M1188.4 660.1H1349.4M1188.4 629.3V660.1M1202.2 629.3V660.1M1289.3 629.3V660.1M1309.2 629.3V660.1M1329.4 629.3V660.1M1349.4 629.3V660.1"/>
<path d="M1188.4 667.3H1349.4M1188.4 682.4H1349.4M1188.4 689.2H1305.3M1188.4 695.2H1305.3M1188.4 715.8H1305.3M1188.4 727H1349.4M1305.3 686.5H1349.4M1305.3 691.1H1349.4M1305.3 695.4H1349.4M1305.3 700.3H1349.4M1305.3 713.2H1329.4M1188.4 667.3V727M1349.4 667.3V727M1227.3 667.3V682.4M1266.4 667.3V682.4M1305.3 667.3V727M1329.4 682.4V727"/>
</g>
<g font-family="Liberation Sans" fill="#333">
<text x="1217" y="709.5" font-size="5.5" textLength="32" lengthAdjust="spacingAndGlyphs">BYTOVÝ DŮM</text>
<text x="1217" y="724.5" font-size="5.5" textLength="25" lengthAdjust="spacingAndGlyphs">IG ŘEZ 5-5</text>
<text x="1310" y="710.5" font-size="5.5">DSP</text>
</g>
<g fill="#b8b0b8">
<rect x="1191" y="657" width="7" height="1.4"/>
<rect x="1205" y="657" width="12" height="1.4"/>
<rect x="1291" y="657" width="6" height="1.4"/>
<rect x="1311" y="657" width="6" height="1.4"/>
<rect x="1331" y="657" width="6" height="1.4"/>
<rect x="1300" y="662.5" width="45" height="1.4"/>
<rect x="1191" y="669" width="6" height="1.4"/>
<rect x="1229" y="669" width="6" height="1.4"/>
<rect x="1268" y="669" width="6" height="1.4"/>
<rect x="1191" y="679.5" width="27" height="1.4"/>
<rect x="1230" y="679.5" width="26" height="1.4"/>
<rect x="1269" y="679.5" width="26" height="1.4"/>
<rect x="1191" y="684" width="8" height="1.4"/>
<rect x="1205" y="684" width="12" height="1.4"/>
<rect x="1191" y="690.5" width="6" height="1.4"/>
<rect x="1205" y="691" width="12" height="1.4"/>
<rect x="1191" y="697" width="4" height="1.4"/>
<rect x="1191" y="717" width="4" height="1.4"/>
<rect x="1308" y="684" width="8" height="1.4"/>
<rect x="1331" y="684" width="10" height="1.4"/>
<rect x="1308" y="688.5" width="6" height="1.4"/>
<rect x="1331" y="689" width="10" height="1.4"/>
<rect x="1308" y="693" width="6" height="1.4"/>
<rect x="1331" y="693" width="10" height="1.4"/>
<rect x="1308" y="697.5" width="6" height="1.4"/>
<rect x="1331" y="697.5" width="14" height="1.4"/>
<rect x="1308" y="702" width="8" height="1.4"/>
<rect x="1331" y="702" width="8" height="1.4"/>
<rect x="1308" y="714.5" width="6" height="1.4"/>
</g>
</g></svg>
<div class="a" style="left:1px;top:0;width:1400px;height:1032px">
 <!-- properties -->
 <div class="a" style="left:1378px;top:109px;width:20px;height:922px;background:#d3d3d3"></div>
 <div class="t" style="left:1388px;top:1000px;font-size:12px;transform:translate(-50%,-50%) rotate(-90deg)">Properties</div>
 <!-- title icon -->
<svg style="left:9px;top:7px" width="17" height="16" viewBox="0 0 17 16">
 <path d="M2.5 0.5h12l2 2v11l-2 2h-12l-2-2v-11z" fill="#fff" stroke="#3a7a2a" stroke-width="1"/>
 <rect x="1.5" y="2" width="1.6" height="4" fill="#000"/><rect x="4" y="2.8" width="1.2" height="1" fill="#000"/><rect x="4" y="4.8" width="1.2" height="1" fill="#000"/>
 <rect x="6" y="2" width="1.6" height="4" fill="#000"/><rect x="8.5" y="2" width="2.6" height="4" fill="#000"/><rect x="12" y="2" width="2.6" height="4" fill="#000"/>
 <rect x="9.3" y="3" width="1" height="2" fill="#fff"/><rect x="12.8" y="3" width="1" height="2" fill="#fff"/>
 <rect x="2" y="7.2" width="6" height="1.5" fill="#000"/><rect x="8" y="7" width="6" height="2.5" fill="#d8b830"/>
 <path d="M6 6.5l3 3" stroke="#000" stroke-width="1"/>
 <rect x="3.5" y="11" width="2.5" height="1.3" fill="#1050d0"/><rect x="8" y="11" width="4.5" height="1.8" fill="#1050d0"/>
</svg>
<!-- window controls -->
<div class="a" style="left:1280px;top:18px;width:10px;height:1.5px;background:#000"></div>
<div class="a" style="left:1325px;top:10px;width:10px;height:10px;border:1px solid #000;border-top-width:1.5px"></div>
<svg style="left:1370px;top:10px" width="12" height="12" viewBox="0 0 12 12"><path d="M0.5 0.5l11 11M11.5 0.5l-11 11" stroke="#000" stroke-width="1.3"/></svg>

<!-- new doc -->
<svg style="left:30px;top:36px" width="24" height="32" viewBox="0 0 24 32">
 <path d="M1.5 1.5h14l7 7v22h-21z" fill="#fff" stroke="#111" stroke-width="1.6" stroke-linejoin="round"/>
 <path d="M15.5 1.5v7h7" fill="none" stroke="#111" stroke-width="1.4"/>
</svg>
<!-- open -->
<svg style="left:70px;top:36px" width="30" height="32" viewBox="0 0 30 32">
 <path d="M1.5 30.5V13.5h24v4" fill="#ffc000" stroke="#111" stroke-width="1.3" stroke-linejoin="round"/>
 <path d="M5.5 1.5h11l4.5 4.5v20h-15.5z" fill="#fff" stroke="#111" stroke-width="1.4" stroke-linejoin="round"/>
 <path d="M16.5 1.5v4.5h4.5" fill="none" stroke="#111" stroke-width="1.1"/>
 <path d="M8 4.5h6M8 7.5h6M8 11h10" stroke="#111" stroke-width="1.2"/>
 <path d="M1.5 30.5h22l5-15h-13l-2 2.5h-8z" fill="#ffc000" stroke="#111" stroke-width="1.4" stroke-linejoin="round"/>
 <rect x="18" y="16.5" width="6" height="1.5" fill="#6a6a80"/>
</svg>
<div class="a" style="left:107px;top:50px;border-left:3px solid transparent;border-right:4px solid transparent;border-top:4px solid #000"></div>
<!-- save -->
<svg style="left:124px;top:36px" width="32" height="32" viewBox="0 0 32 32">
 <path d="M1.5 1.5h29v29h-26l-3-3z" fill="#8585a8" stroke="#111" stroke-width="1.4" stroke-linejoin="round"/>
 <rect x="6" y="3.5" width="19" height="14" fill="#fff" stroke="#111" stroke-width="1"/>
 <path d="M8.5 7h14M8.5 10h14M8.5 13h14" stroke="#111" stroke-width="1.1"/>
 <rect x="7.5" y="21.5" width="13" height="9" fill="#fff" stroke="#111" stroke-width="1"/>
 <rect x="9.5" y="23.5" width="2" height="4" fill="#fff" stroke="#111" stroke-width="1"/>
 <rect x="22.5" y="21.5" width="3" height="9" fill="#8585a8" stroke="#111" stroke-width="0.8"/>
 <rect x="3" y="3" width="1.5" height="1.5" fill="#111"/><rect x="27.5" y="3" width="1.5" height="1.5" fill="#111"/>
</svg>
<div class="a" style="left:162px;top:50px;border-left:3px solid transparent;border-right:4px solid transparent;border-top:4px solid #000"></div>
<!-- undo -->
<svg style="left:200px;top:40px" width="31" height="24" viewBox="0 0 31 24">
 <path d="M1 9.5l9.5-8.5v5c9 0 15.5 4 18 16.5c-3.5-6-9-8-18-7.5v5z" fill="#444"/>
</svg>
<div class="a" style="left:238px;top:50px;border-left:3px solid transparent;border-right:4px solid transparent;border-top:4px solid #000"></div>
<svg style="left:255px;top:40px" width="31" height="24" viewBox="0 0 31 24">
 <path d="M29 9.5l-9.5-8.5v5c-9 0-15.5 4-18 16.5c3.5-6 9-8 18-7.5v5z" fill="#999"/>
</svg>
<div class="a" style="left:292px;top:50px;border-left:3px solid transparent;border-right:4px solid transparent;border-top:4px solid #999"></div>
<!-- copy -->
<svg style="left:316px;top:35px" width="33" height="34" viewBox="0 0 33 34">
 <path d="M1.5 1.5h11.5l4.5 4.5v18.5h-16z" fill="#fff" stroke="#222" stroke-width="1.2"/>
 <path d="M4 7.5h4M4 10.5h8M4 13.5h8M4 16.5h8M4 19.5h8" stroke="#333" stroke-width="1"/>
 <path d="M14.5 9h11.5l4.5 4.5v19h-16z" fill="#fff" stroke="#222" stroke-width="1.2"/>
 <path d="M17 15h4M17 18h10.5M17 21h10.5M17 24h10.5M17 27h10.5M17 30h10.5" stroke="#333" stroke-width="1"/>
</svg>
<div class="a" style="left:354px;top:50px;border-left:3px solid transparent;border-right:4px solid transparent;border-top:4px solid #000"></div>
<!-- paste -->
<svg style="left:371px;top:35px" width="33" height="34" viewBox="0 0 33 34">
 <rect x="1.5" y="1.5" width="22.5" height="26.5" fill="#e59420" stroke="#333" stroke-width="1.2"/>
 <rect x="8" y="1.5" width="9" height="4" fill="#f8dc90" stroke="#333" stroke-width="0.8"/>
 <path d="M15.5 9.5h11.5l4.5 4.5v18.5h-16z" fill="#fff" stroke="#222" stroke-width="1.2"/>
 <path d="M18 15h4M18 18h10.5M18 21h10.5M18 24h10.5M18 27h10.5M18 30h10.5" stroke="#333" stroke-width="1"/>
</svg>
<div class="a" style="left:409px;top:50px;border-left:3px solid transparent;border-right:4px solid transparent;border-top:4px solid #000"></div>
<!-- printer -->
<svg style="left:454px;top:37px" width="27" height="31" viewBox="0 0 27 31">
 <rect x="4.5" y="1" width="16" height="7" fill="#fff" stroke="#111" stroke-width="1.1"/>
 <rect x="2" y="3.5" width="2.5" height="5" fill="#b89860" stroke="#111" stroke-width="0.8"/>
 <rect x="1" y="8" width="23" height="11.5" rx="1" fill="#d4bc8c" stroke="#111" stroke-width="1.2"/>
 <rect x="3.5" y="14" width="18" height="2" fill="#333"/>
 <rect x="5" y="16" width="15" height="13.5" fill="#fff" stroke="#111" stroke-width="1.1"/>
 <path d="M7 19h11M7 21.5h11M7 24h3M12 26.5h6" stroke="#222" stroke-width="1"/>
</svg>
<!-- pdf cad -->
<svg style="left:495px;top:36px" width="32" height="32" viewBox="0 0 32 32">
 <rect x="1.5" y="1.5" width="21.5" height="29.5" fill="#fff" stroke="#111" stroke-width="1.3"/>
 <text x="3" y="11" font-family="Liberation Mono" font-size="9.5" fill="#000" stroke="#000" stroke-width="0.25" textLength="13.5" lengthAdjust="spacingAndGlyphs">PDF</text>
 <text x="3" y="20" font-family="Liberation Mono" font-size="9.5" fill="#000" stroke="#000" stroke-width="0.25" textLength="13.5" lengthAdjust="spacingAndGlyphs">CAD</text>
 <rect x="17" y="18" width="13.5" height="13" fill="#8585a8" stroke="#111" stroke-width="1.1"/>
 <rect x="19.5" y="19.5" width="8.5" height="4.5" fill="#fff" stroke="#111" stroke-width="0.8"/>
 <rect x="20.5" y="26.5" width="6.5" height="4.5" fill="#111"/><rect x="21.5" y="27.5" width="1.5" height="3" fill="#8585a8"/>
</svg>
<!-- gear -->
<svg style="left:562px;top:36px" width="32" height="32" viewBox="-16 -16 32 32">
 <path d="M10.15 -2.70 L14.09 -2.42 L14.09 2.42 L10.15 2.70 L9.08 5.27 L11.68 8.26 L8.26 11.68 L5.27 9.08 L2.70 10.15 L2.42 14.09 L-2.42 14.09 L-2.70 10.15 L-5.27 9.08 L-8.26 11.68 L-11.68 8.26 L-9.08 5.27 L-10.15 2.70 L-14.09 2.42 L-14.09 -2.42 L-10.15 -2.70 L-9.08 -5.27 L-11.68 -8.26 L-8.26 -11.68 L-5.27 -9.08 L-2.70 -10.15 L-2.42 -14.09 L2.42 -14.09 L2.70 -10.15 L5.27 -9.08 L8.26 -11.68 L11.68 -8.26 L9.08 -5.27Z M5.2 0 A5.2 5.2 0 1 0 -5.2 0 A5.2 5.2 0 1 0 5.2 0Z" fill-rule="evenodd" fill="#c5bf4f" stroke="#333" stroke-width="1"/>
</svg>
<!-- zoom icons -->
<svg style="left:614px;top:30px" width="75" height="45" viewBox="0 0 75 45" fill="none" stroke="#333" stroke-width="1.2">
 <rect x="7.5" y="4.5" width="10.5" height="10.5" stroke-dasharray="2 1.5"/>
 <circle cx="15" cy="10.2" r="4.6" fill="#f0f0f0"/><path d="M18.3 13.5l3.5 3.5" stroke-width="1.8"/>
 <circle cx="36" cy="10" r="6.5"/><path d="M40.7 14.7l4 4" stroke-width="1.8"/><path d="M32.5 10h7M36 6.5v7" stroke-width="2"/>
 <path d="M60 3v15M52.5 10.5h15" stroke-width="1.8"/><path d="M60 2.5l-2.5 2.8h5zM60 18.5l-2.5-2.8h5zM52 10.5l2.8-2.5v5zM68 10.5l-2.8-2.5v5z" fill="#333"/>
 <rect x="6.7" y="26.5" width="14.5" height="13" stroke-width="1.4"/>
 <path d="M10 30l2 2M18 30l-2 2M10 36l2-2M18 36l-2-2" stroke-width="1.5"/>
 <circle cx="36" cy="31.7" r="6.5"/><path d="M40.7 36.4l4 4" stroke-width="1.8"/><path d="M32.5 31.7h7" stroke-width="2"/>
 <circle cx="59.3" cy="31.7" r="6.5"/><path d="M64 36.4l4 4" stroke-width="1.8"/><path d="M56.5 33c1-3 5-3.5 6 0" stroke-width="1.5"/><path d="M55.5 31.5l1.5 2.5 2-1.5z" fill="#333"/>
</svg>
<!-- layer combo -->
<svg style="left:709px;top:33px" width="64" height="17" viewBox="0 0 64 17">
 <circle cx="7" cy="5.7" r="5" fill="#f8a818"/><rect x="4.8" y="10" width="4.4" height="4.5" rx="1" fill="#333"/>
 <path d="M26.5 6.5v-2.5a3 3 0 0 1 6 0" fill="none" stroke="#f8a818" stroke-width="1.6"/>
 <rect x="28" y="6.5" width="10" height="8" rx="1" fill="#f8a818" stroke="#e09010" stroke-width="0.6"/><rect x="32.3" y="9" width="1.4" height="3" fill="#444"/>
 <rect x="47.5" y="0.5" width="15" height="15" fill="#000" stroke="#888" stroke-width="1"/>
</svg>
<div class="t" style="left:777px;top:33px;letter-spacing:-0.35px">Legenda_geofyzika</div>
<div class="a" style="left:987px;top:39px;border-left:3px solid transparent;border-right:4px solid transparent;border-top:4px solid #000"></div>
<svg style="left:1004px;top:33px" width="18" height="16" viewBox="0 0 18 16">
 <path d="M1 1.5h9M1 3.5h9M1 5.5h8M1 7.5h5" stroke="#333" stroke-width="1"/><path d="M11 5.5h2M11 7.5h2" stroke="#333" stroke-width="1"/>
 <path d="M14 4h2.5v7.5h-9v3l-5-4.5 5-4.5v3h6.5z" fill="#6e2c8c"/>
</svg>
<!-- draw tools row -->
<svg style="left:704px;top:54px" width="320" height="18" viewBox="0 0 320 18" fill="none" stroke="#1a6fc9" stroke-width="1.2">
 <text x="5" y="14.5" font-size="13" fill="#383838" stroke="none">A</text>
 <text x="26" y="14.5" font-size="13" fill="#383838" stroke="none">A</text><rect x="36.5" y="3.5" width="3" height="11" stroke="#333" stroke-width="1"/>
 <text x="53" y="9.5" font-size="10" fill="#333" stroke="none">A</text><path d="M50.5 15c2-3 3-3 5-3h7"/>
 <path d="M72.5 15.5l13.5-13.5"/>
 <circle cx="102" cy="9" r="6.8"/><circle cx="102" cy="9" r="0.8" fill="#333" stroke="none"/>
 <rect x="118" y="4.5" width="14.5" height="8"/>
 <path d="M140.5 16v-14h10l4.5 5.5-3 8.5" stroke="#333"/><path d="M141 16h10" stroke-dasharray="2 1.5"/>
 <text x="163" y="14" font-size="11" fill="#444" stroke="none">B</text><path d="M172 3c3-2 6 0 4 3c-2 3-3 5 1 9"/>
 <path d="M189 13l8-9M187 11l3 4M195 3l3 4" /><text x="190" y="8" font-size="6" fill="#333" stroke="none" transform="rotate(-45 192 6)">11</text>
 <path d="M211 9h13M211 5v9M224 5v9"/><text x="212" y="5" font-size="7" fill="#333" stroke="none">11</text>
 <path d="M235 15l10-10 3 10z"/><text x="233" y="6" font-size="6" fill="#333" stroke="none">11</text>
 <rect x="255.5" y="2.5" width="15" height="13" fill="#fff" stroke="#111"/><text x="256.5" y="12.5" font-family="Liberation Mono" font-size="9" font-weight="bold" fill="#111" stroke="none" textLength="12.5" lengthAdjust="spacingAndGlyphs">CAD</text>
 <rect x="279" y="2.5" width="14" height="13" stroke="#333"/><path d="M279 6h14M279 9h14M279 12.5h14M283.5 2.5v13M288 2.5v13" stroke="#333"/><rect x="279" y="2.5" width="14" height="3" fill="#333" stroke="none"/>
 <rect x="301.5" y="2.5" width="15" height="13" fill="#fff" stroke="#555"/><path d="M302 15.5l4.5-5.5 3 3 3-4 4 6z" fill="#7ab4ea" stroke="#1a6fc9" stroke-width="0.8"/><circle cx="305.5" cy="6" r="1.8" fill="#f8a818" stroke="none"/>
</svg>
<!-- disabled group -->
<svg style="left:1044px;top:33px" width="64" height="38" viewBox="0 0 64 38" fill="none" stroke="#a8a8a8" stroke-width="1">
 <path d="M1.5 1.5h5l-5 5z M4 8.5h5l-5 5z M9 8.5h5l-5 5z M8.5 2.5c3 0 4.5 1.5 4.5 4M11.5 5.5l1.5 1.5 1.5-1.5"/>
 <path d="M24.5 1.5h5.5l-5.5 5.5z M32 8.5h5.5l-5.5 5.5z M31 2c3 0 5 1.5 5 4M34.5 5l1.5 1.5 1.5-1.5"/>
 <path d="M48.5 5.5h9v8h-9z M50.5 3.5h9v8 M52.5 1.5h9v8" />
 <path d="M7 21.5v15" stroke-dasharray="1 1"/>
 <path d="M5.5 23.5l-4 12h4z M8.5 23.5l4 12h-4z" stroke-width="1.1"/>
 <path d="M27 25a6 6 0 0 1 10.5 -1.5M36.5 33a6 6 0 0 1 -10.5 1.5M25.5 23.5v2.5h2.5M38 34v-2.5h-2.5" stroke-width="1.2"/>
</svg>
<!-- funnel & ruler -->
<svg style="left:1130px;top:33px" width="20" height="38" viewBox="0 0 20 38">
 <defs><linearGradient id="fg" x1="0" x2="1"><stop offset="0" stop-color="#555"/><stop offset="0.5" stop-color="#ddd"/><stop offset="1" stop-color="#666"/></linearGradient></defs>
 <path d="M3 1.5h13l-5 6.5v7l-3-2v-5z" fill="url(#fg)" stroke="#333" stroke-width="1.2" stroke-linejoin="round"/>
 <path d="M2.5 25.5h15" stroke="#1a6fc9" stroke-width="1.2"/><path d="M1.5 25.5l2.5-2v4zM18.5 25.5l-2.5-2v4z" fill="#1a6fc9"/>
 <rect x="2" y="29.5" width="15.5" height="5.5" fill="#fff" stroke="#333" stroke-width="1.4"/>
 <path d="M5 29.5v2.5M8 29.5v2.5M11 29.5v2.5M14 29.5v2.5" stroke="#333" stroke-width="1"/>
</svg>
<!-- help -->
<div class="t" style="left:1362px;top:30px;font-size:19px;color:#1a6fc9;-webkit-text-stroke:0.4px #1a6fc9">?</div>
<div class="t" style="left:1355px;top:52px;font-size:12.5px">Help</div>
<div class="a" style="left:1388px;top:50px;border-left:4px solid transparent;border-right:4px solid transparent;border-top:4px solid #000"></div>
<!-- tab icons -->
<svg style="left:6px;top:84px" width="13" height="13" viewBox="0 0 13 13"><path d="M6.5 1v11M1 6.5h11" stroke="#1a9a1a" stroke-width="2.8"/></svg>
<svg style="left:30px;top:85px" width="12" height="12" viewBox="0 0 12 12"><path d="M1.5 1.5l9 9M10.5 1.5l-9 9" stroke="#d01818" stroke-width="2.4"/></svg>
<!-- properties pin -->
<div class="a" style="left:1384px;top:115px;width:9px;height:10px;border:1.5px solid #000;border-left-width:2.5px"></div>
<!-- status bar -->
<svg style="left:210px;top:1013px" width="18" height="14" viewBox="0 0 18 14">
 <rect x="0.5" y="1.5" width="15.5" height="10.5" rx="1.5" fill="#3a90e0" stroke="#38a838" stroke-width="1" stroke-dasharray="2 1"/>
 <text x="1.2" y="11" font-family="Liberation Mono" font-size="10" font-weight="bold" fill="#111" textLength="14" lengthAdjust="spacingAndGlyphs">CAD</text>
</svg>
<svg style="left:233px;top:1012px" width="17" height="15" viewBox="0 0 17 15">
 <path d="M4 2h11M1 6h14M1 9.5h14M1.5 13h10" stroke="#111" stroke-width="1.6"/><ellipse cx="3" cy="2.5" rx="2" ry="1.3" fill="#111"/><ellipse cx="3" cy="13" rx="2.5" ry="1.6" fill="#111"/>
</svg>
<div class="t" style="left:271px;top:1013px;letter-spacing:-0.4px">Snap :</div>
<div class="a" style="left:308px;top:1009px;width:71px;height:22px;background:#cce4f7;border:1.3px solid #1a5aa0"></div>
<div class="a" style="left:331px;top:1009px;width:1.3px;height:22px;background:#1a5aa0"></div>
<div class="a" style="left:343px;top:1009px;width:2.5px;height:22px;background:#1a5aa0"></div>
<div class="a" style="left:366px;top:1009px;width:1.3px;height:22px;background:#1a5aa0"></div>
<div class="a" style="left:334px;top:1018px;border-left:4px solid transparent;border-right:4px solid transparent;border-top:4px solid #000"></div>
<div class="a" style="left:369px;top:1018px;border-left:4px solid transparent;border-right:4px solid transparent;border-top:4px solid #000"></div>
<svg style="left:312px;top:1012px" width="17" height="16" viewBox="0 0 17 16">
 <path d="M3.5 14.5H11.5A8 8 0 0 0 9.2 8.8Z" fill="#f8c018"/>
 <path d="M3.5 1v13.5h12M1.5 3l2-2 2 2M13.5 12.5l2 2-2 2" fill="none" stroke="#222" stroke-width="1"/>
 <path d="M1 15.5l15-14.5" stroke="#e03030" stroke-width="0.8" stroke-dasharray="1.5 1"/>
</svg>
<svg style="left:347px;top:1012px" width="17" height="16" viewBox="0 0 17 16">
 <path d="M2 15v-7a6.5 6.5 0 0 1 13 0v7h-4v-7a2.5 2.5 0 0 0 -5 0v7z" fill="#d01818"/>
 <rect x="2" y="12" width="4" height="3" fill="#fff"/><rect x="11" y="12" width="4" height="3" fill="#fff"/>
</svg>
<svg style="left:383px;top:1012px" width="17" height="15" viewBox="0 0 17 15">
 <path d="M2 13.5l7.5-7.5" stroke="#1a6fc9" stroke-width="2.8" stroke-linecap="round"/>
 <path d="M9 4.5a4 4 0 0 1 6.5-3.5l-3 2 .5 2 2 .5 2-3a4 4 0 0 1 -4.5 6z" fill="#1a6fc9"/>
</svg>

 </div>
 <svg style="left:0;top:0" width="1400" height="1032"><path fill="#25321d" fill-rule="evenodd" d="M0 0H1400V1032H0Z M9 1H1391A8 8 0 0 1 1399 9V1023A8 8 0 0 1 1391 1031H9A8 8 0 0 1 1 1023V9A8 8 0 0 1 9 1Z"/></svg>
</div>
</body></html>
